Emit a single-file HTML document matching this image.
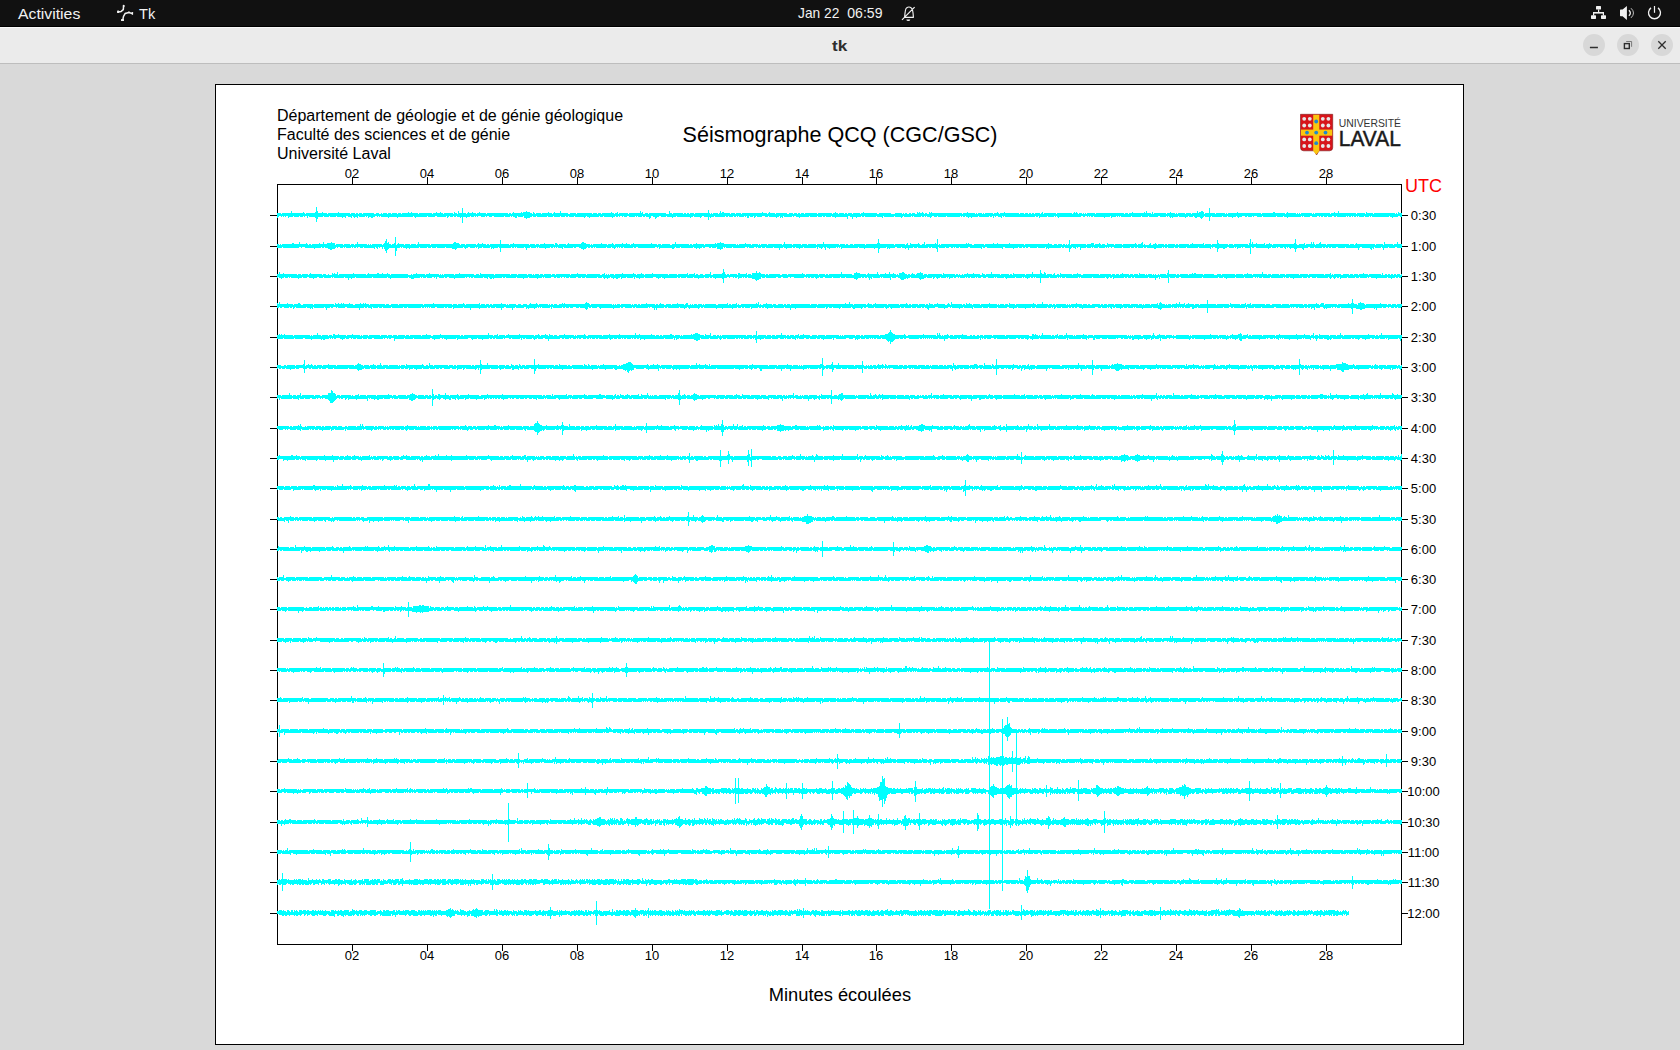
<!DOCTYPE html>
<html><head><meta charset="utf-8"><style>
html,body{margin:0;padding:0;width:1680px;height:1050px;overflow:hidden;background:#d9d9d9;font-family:"Liberation Sans",sans-serif;}
.abs{position:absolute;}
#top{left:0;top:0;width:1680px;height:27px;background:#111;border-bottom:1px solid #000;box-sizing:border-box;}
#title{left:0;top:27px;width:1680px;height:37px;background:#ebebeb;border-top:1px solid #fafafa;border-bottom:1px solid #bdbdbd;box-sizing:border-box;}
#canvas{left:215px;top:84px;width:1249px;height:961px;background:#fff;border:1px solid #000;box-sizing:border-box;}
svg text{font-family:"Liberation Sans",sans-serif;}
.wb{position:absolute;top:34px;width:22px;height:22px;border-radius:50%;background:#d8d8d8;}
</style></head><body>
<div id="top" class="abs"></div>
<div id="title" class="abs"></div>
<div id="canvas" class="abs"></div>
<div class="wb" style="left:1583px"></div>
<div class="wb" style="left:1617px"></div>
<div class="wb" style="left:1651px"></div>
<svg class="abs" style="left:0;top:0" width="1680" height="1050" viewBox="0 0 1680 1050">
<g font-family="Liberation Sans" >
<text x="18" y="19" font-size="14.6" fill="#f2f2f2" textLength="62.3" lengthAdjust="spacingAndGlyphs">Activities</text>
<text x="139" y="19" font-size="14.6" fill="#f2f2f2">Tk</text>
<text x="798" y="18" font-size="14.6" fill="#f2f2f2" textLength="41.3" lengthAdjust="spacingAndGlyphs">Jan 22</text><text x="847.3" y="18" font-size="14.6" fill="#f2f2f2" textLength="35.2" lengthAdjust="spacingAndGlyphs">06:59</text>
<text x="832" y="51" font-size="15" font-weight="bold" fill="#2e2e2e" textLength="15.3" lengthAdjust="spacingAndGlyphs">tk</text>
</g>
<g font-size="16" fill="#000">
<text x="277" y="121">Département de géologie et de génie géologique</text>
<text x="277" y="140">Faculté des sciences et de génie</text>
<text x="277" y="159">Université Laval</text>
</g>
<text x="682.6" y="141.7" font-size="21.55" fill="#000">Séismographe QCQ (CGC/GSC)</text>
<text x="1405" y="192" font-size="18" fill="#ff0000">UTC</text>
<text x="768.8" y="1001" font-size="18.3" fill="#000">Minutes écoulées</text>
<path d="M277.5 184V944M1401.5 184V944M277 184.5H1402M277 944.5H1402M270 215.5H277M1402 215.5H1408M270 246.5H277M1402 246.5H1408M270 276.5H277M1402 276.5H1408M270 306.5H277M1402 306.5H1408M270 337.5H277M1402 337.5H1408M270 367.5H277M1402 367.5H1408M270 397.5H277M1402 397.5H1408M270 428.5H277M1402 428.5H1408M270 458.5H277M1402 458.5H1408M270 488.5H277M1402 488.5H1408M270 519.5H277M1402 519.5H1408M270 549.5H277M1402 549.5H1408M270 579.5H277M1402 579.5H1408M270 609.5H277M1402 609.5H1408M270 640.5H277M1402 640.5H1408M270 670.5H277M1402 670.5H1408M270 700.5H277M1402 700.5H1408M270 731.5H277M1402 731.5H1408M270 761.5H277M1402 761.5H1408M270 791.5H277M1402 791.5H1408M270 822.5H277M1402 822.5H1408M270 852.5H277M1402 852.5H1408M270 882.5H277M1402 882.5H1408M270 913.5H277M1402 913.5H1408M352.5 177V184M352.5 945V951M427.5 177V184M427.5 945V951M502.5 177V184M502.5 945V951M577.5 177V184M577.5 945V951M652.5 177V184M652.5 945V951M727.5 177V184M727.5 945V951M802.5 177V184M802.5 945V951M876.5 177V184M876.5 945V951M951.5 177V184M951.5 945V951M1026.5 177V184M1026.5 945V951M1101.5 177V184M1101.5 945V951M1176.5 177V184M1176.5 945V951M1251.5 177V184M1251.5 945V951M1326.5 177V184M1326.5 945V951" stroke="#000" stroke-width="1" fill="none"/><path d="M277 213h4v1h1v-1h9v-2h1v2h11v-1h1v1h1v1h1v-1h9v-1h1v-5h1v4h1v2h4v-1h1v1h4v1h1v-1h10v-1h1v1h11v1h1v-1h4v1h1v-1h2v1h1v-1h3v1h1v-1h11v1h2v-1h3v1h2v-1h1v1h1v-1h4v1h1v-1h3v1h1v-1h5v1h1v-1h3v1h1v-1h6v-1h1v1h2v-1h1v1h6v1h1v-1h13v1h1v-1h3v-1h1v1h3v-1h1v1h2v1h1v-1h9v1h1v-2h1v1h2v1h1v-3h1v2h3v-5h1v5h3v1h1v-1h1v-1h1v1h3v-1h1v1h3v1h1v-1h2v-1h1v1h6v1h1v-1h21v1h1v-1h2v1h1v-1h1v-1h1v1h7v-1h1v1h1v-1h3v-1h1v1h3v1h2v1h1v-2h1v1h1v1h1v-1h5v1h1v-1h6v-1h1v1h3v1h1v-1h1v-1h1v1h5v-2h1v2h7v1h2v-1h6v1h1v-1h15v1h1v-1h4v1h1v-1h3v1h1v-1h9v-1h1v1h2v1h1v-1h2v-1h1v2h1v-1h9v1h1v-1h11v-2h1v2h1v-1h1v2h2v-1h3v1h1v-1h17v1h3v-3h1v2h2v1h1v-1h10v1h1v-1h2v1h1v-1h2v1h1v-1h4v1h1v-1h13v-3h1v3h1v1h1v-1h1v1h1v-1h5v1h1v-1h1v-2h1v2h1v-1h2v1h6v1h1v-1h4v1h1v-1h5v1h1v-1h20v-1h1v1h4v1h1v-1h1v-1h1v1h5v1h1v-1h11v1h2v-1h4v1h1v-1h3v1h1v-1h2v1h1v-1h3v1h1v-1h12v1h1v-1h14v1h1v-1h2v-1h1v1h2v1h1v-1h5v1h1v-1h2v1h1v-1h4v1h1v-1h7v1h1v-1h2v-1h1v1h13v1h2v-1h12v1h4v-1h7v1h1v-1h1v1h1v-1h2v1h2v-1h2v1h1v-1h3v1h2v-2h1v1h1v-1h1v1h2v-1h1v1h1v1h1v-1h2v1h2v-2h1v1h1v-1h1v1h30v1h1v-1h4v-1h1v1h7v1h1v-1h1v1h1v-1h4v1h1v-1h1v1h1v-1h8v1h1v-1h3v-1h1v1h1v1h1v-1h4v-1h1v1h14v1h1v-1h4v1h1v-1h3v1h1v-1h2v1h1v-1h2v1h1v-1h5v1h1v-1h1v-1h1v2h1v-1h12v1h1v-1h15v1h1v-1h1v-1h1v1h1v-1h1v1h1v1h1v-1h3v1h1v-1h1v1h1v-1h1v1h1v-1h8v1h1v-1h28v1h1v-1h3v1h1v-1h3v-1h1v1h11v-1h1v1h1v-2h1v2h4v1h1v-2h1v2h1v-1h12v1h1v-1h3v-1h1v1h4v1h1v-1h1v1h1v-1h7v1h1v-1h5v1h1v-1h5v-2h1v2h1v-1h2v-1h2v1h1v2h1v-1h4v-5h1v5h5v1h1v-1h9v1h1v-1h1v1h1v-1h9v-1h1v1h23v1h1v-1h11v-1h2v1h10v1h1v-1h1v-1h1v1h8v1h1v-1h1v1h1v-1h1v1h1v-1h11v1h1v-1h1v1h1v-1h15v1h1v-1h3v-1h1v1h3v-2h1v2h17v1h1v-1h8v1h1v-2h1v1h6v1h1v-1h21v1h1v-1h1v1h1v-2h1v1h3V217h-2v-1h-2v1h-5v1h-1v-1h-2v-1h-1v1h-17v-1h-1v1h-1v-1h-1v1h-4v-1h-1v1h-5v-1h-1v1h-1v-1h-1v1h-2v-1h-1v1h-1v-1h-1v1h-2v-1h-1v1h-1v-1h-1v1h-9v-1h-1v1h-2v-1h-2v1h-4v-1h-1v1h-3v-1h-1v1h-2v-1h-1v1h-1v-1h-2v1h-5v-1h-2v1h-6v-1h-1v1h-1v-1h-1v1h-13v1h-1v-1h-3v-1h-1v1h-6v-1h-1v1h-13v-1h-1v1h-5v-1h-3v1h-1v-1h-1v1h-4v-1h-1v1h-2v-1h-3v1h-3v1h-1v-1h-1v-1h-1v1h-3v1h-1v-1h-4v-1h-1v1h-4v-1h-1v1h-10v-1h-1v1h-1v4h-1v-4h-4v-1h-1v1h-1v1h-1v1h-1v-1h-1v-1h-3v1h-2v-1h-1v-1h-1v1h-4v-1h-1v1h-2v1h-1v-1h-6v-1h-1v1h-5v1h-1v-1h-1v1h-1v-1h-1v-1h-1v1h-1v-1h-1v1h-6v-1h-2v1h-9v-1h-1v1h-6v-1h-1v1h-9v-1h-1v1h-10v-1h-1v1h-1v-1h-1v1h-1v-1h-1v1h-4v1h-1v-2h-1v1h-5v1h-1v-1h-10v-1h-1v1h-2v-1h-1v1h-1v-1h-1v1h-1v-1h-2v1h-2v-1h-2v1h-22v1h-1v-1h-1v-1h-1v1h-1v-1h-1v1h-6v-1h-1v1h-7v1h-1v-2h-1v1h-2v-1h-1v1h-30v-1h-1v1h-1v-1h-1v2h-1v-1h-3v-1h-2v1h-1v-1h-1v2h-1v-2h-1v1h-2v-1h-1v1h-10v-1h-1v1h-6v1h-1v-1h-2v1h-1v-1h-2v-1h-1v1h-2v-1h-1v1h-1v-1h-1v1h-13v-1h-1v1h-8v-1h-1v1h-3v-1h-2v1h-1v1h-1v-1h-3v-1h-1v1h-1v-1h-1v1h-2v-1h-1v1h-7v-1h-1v1h-1v-1h-1v1h-7v-1h-1v1h-1v1h-1v-1h-6v-1h-1v1h-10v-1h-1v2h-1v-1h-5v-1h-1v1h-11v-1h-1v1h-2v-1h-1v1h-4v1h-1v-1h-3v2h-1v-2h-2v-1h-2v3h-1v-2h-11v1h-1v-1h-3v-1h-1v1h-5v-1h-1v1h-2v-1h-1v1h-4v-1h-1v1h-7v-1h-1v1h-9v1h-1v-1h-3v-1h-2v1h-1v-1h-1v1h-8v-1h-1v2h-1v-1h-1v1h-1v-2h-1v1h-2v1h-1v-1h-7v-1h-1v1h-3v-1h-3v1h-5v-1h-1v1h-1v1h-1v-2h-1v1h-3v-1h-1v2h-2v-2h-1v1h-1v-1h-1v1h-5v-1h-1v1h-1v-1h-1v1h-2v-1h-1v1h-4v-1h-1v1h-2v-1h-1v1h-10v-1h-1v1h-3v1h-1v-1h-1v3h-1v-3h-4v-1h-2v1h-1v1h-1v-1h-6v-1h-1v1h-2v1h-1v-1h-13v-1h-1v1h-3v1h-1v-1h-5v-1h-1v1h-5v-1h-2v1h-2v1h-1v1h-1v-2h-2v-1h-2v2h-1v1h-1v-2h-3v-1h-1v1h-2v-1h-1v1h-4v-1h-1v1h-1v-1h-1v1h-6v-1h-2v1h-3v-1h-1v1h-1v-1h-2v1h-1v-1h-1v1h-2v-1h-1v1h-2v1h-1v-1h-8v-1h-1v1h-3v-1h-1v1h-9v1h-1v-1h-2v-1h-1v1h-1v1h-1v-1h-9v-1h-1v1h-5v-1h-1v1h-2v-1h-1v1h-4v-1h-1v1h-6v-1h-1v1h-5v-1h-1v1h-10v-1h-1v1h-3v-1h-1v1h-2v1h-3v1h-1v-1h-2v-2h-1v1h-5v-1h-1v2h-2v-1h-2v-1h-1v1h-1v-1h-1v1h-5v-1h-1v1h-10v-1h-2v1h-3v-1h-2v1h-1v-1h-1v1h-4v-1h-3v1h-1v-1h-1v1h-1v-1h-1v1h-3v-1h-1v1h-3v1h-1v-1h-3v6h-1v-6h-1v1h-1v-1h-3v-1h-1v1h-2v-1h-1v1h-3v-1h-1v1h-1v1h-1v-2h-1v1h-9v-1h-2v1h-7v-1h-1v1h-11v1h-1v-1h-1v-1h-1v1h-15v1h-1v-1h-8v1h-1v-1h-7v-1h-1v1h-1v-1h-1v1h-1v-1h-2v1h-2v1h-2v-1h-2v1h-1v-2h-1v1h-1v-1h-1v1h-6v-1h-1v2h-1v-1h-2v1h-1v-1h-1v-1h-1v2h-1v-1h-3v-1h-2v2h-1v-1h-2v1h-1v-1h-5v-1h-1v1h-6v-1h-1v1h-5v-1h-1v1h-5v2h-1v3h-1v-4h-1v-1h-6v-1h-1v2h-1v-2h-2v1h-1v-1h-1v1h-3v-1h-1v1h-5v-1h-1v1h-4v1h-1v-2h-2v1h-1v-1h-1v1h-1v-1h-1v1h-1v-1h-2v1h-1v1h-1ZM277 244h2v1h1v-1h1v1h1v-1h10v-1h2v1h5v-2h1v2h6v-1h1v1h1v1h1v-1h2v1h1v-1h7v-1h1v1h3v-2h1v2h3v-1h4v-1h1v1h3v2h1v-1h7v1h1v-1h6v1h1v-1h3v1h1v-1h2v-2h1v2h9v1h1v-1h1v1h1v-1h1v1h1v-1h10v1h1v-1h1v-1h1v-2h1v-2h1v4h1v-1h1v2h2v1h1v-1h2v-1h1v-6h1v8h1v-1h1v-1h1v1h5v1h1v-1h5v1h1v-1h5v1h1v-1h1v-2h1v2h11v1h1v-1h22v-1h1v-1h2v1h3v1h1v1h1v-1h4v1h1v-1h10v1h1v-1h1v-1h1v1h3v-1h1v1h3v1h1v-1h2v1h1v-1h10v-4h1v4h8v1h1v-1h3v-1h1v1h15v1h1v-1h5v1h1v-1h3v1h1v-1h4v-1h1v1h9v1h1v-2h2v1h1v1h1v-1h7v1h1v-1h1v-1h1v1h12v-1h1v-1h2v1h2v1h4v1h1v-1h1v1h1v-1h8v-1h1v1h5v1h1v-1h4v-1h1v1h1v1h1v-1h7v-1h1v1h3v-1h1v1h3v1h1v-1h2v-1h1v1h17v-1h1v1h5v1h1v-1h3v1h1v-1h8v1h2v-1h3v-2h1v2h13v1h1v-1h2v1h1v-1h3v-1h1v1h7v1h1v-1h10v-1h1v1h1v-1h3v-1h1v1h3v1h12v1h1v-1h1v1h1v-1h6v-1h1v1h5v1h1v-1h6v1h1v-1h1v1h1v-1h6v1h1v-1h14v1h1v-1h1v-2h1v2h7v1h1v-1h8v1h1v-1h5v1h1v-1h8v1h1v-1h6v-2h1v2h15v1h1v-1h5v1h1v-1h2v1h2v-1h3v1h1v-1h11v1h1v-1h11v-1h1v-4h1v4h1v1h14v1h1v-1h10v1h1v-1h1v-1h1v2h2v-2h1v1h7v-1h1v1h1v1h2v-1h2v-2h1v3h1v-1h9v-1h1v1h1v-5h1v6h1v-1h1v1h1v-1h25v-1h1v1h1v-1h1v1h3v1h2v-1h10v1h1v-1h8v-1h1v1h3v-1h1v1h11v-1h1v1h14v1h1v-1h23v-1h1v1h3v1h2v-1h3v1h1v-1h4v1h1v-1h2v1h1v-1h1v1h1v-1h1v-4h1v5h1v-1h15v1h1v-1h4v-1h3v2h1v-1h4v-1h1v1h1v1h1v-1h3v1h2v-2h1v1h6v1h1v-1h7v1h1v-1h12v-1h1v1h1v1h1v-1h3v-1h1v-1h1v3h1v-1h1v1h4v-1h1v-1h1v2h2v-1h2v-1h1v1h1v1h1v-1h6v1h1v-1h2v1h1v-1h7v1h1v-1h2v1h1v-1h10v1h1v-1h2v-1h1v1h10v-1h1v2h1v-1h6v1h1v-1h5v-4h1v3h1v1h9v1h1v-1h4v1h1v-1h14v1h1v-2h1v-4h1v5h1v-2h1v2h3v-1h1v1h7v-1h1v2h1v-1h3v-1h1v1h2v1h1v-1h21v-1h1v-4h1v5h1v1h2v-1h5v-1h1v2h1v-1h5v-2h1v2h1v-2h1v2h1v1h1v-1h3v-1h1v-1h1v2h5v1h1v-1h22v1h1v-1h4v1h1v-1h1v-1h1v1h18v1h1v-1h7v1h1v-3h1v2h8v1h1v-1h3v-2h1v2h4V248h-5v-1h-2v1h-6v-1h-1v1h-4v2h-1v-2h-1v-1h-1v1h-6v-1h-1v2h-1v-1h-1v2h-1v-1h-1v-1h-8v-1h-2v1h-1v2h-1v-2h-12v-1h-1v1h-7v-1h-2v1h-4v-1h-1v1h-2v-1h-1v1h-2v-1h-1v1h-2v-1h-1v1h-7v-1h-1v1h-4v-1h-2v1h-4v2h-1v-1h-1v-1h-5v1h-1v3h-1v-3h-1v-1h-3v1h-1v-1h-1v-1h-1v1h-1v-1h-1v2h-1v-1h-1v-1h-1v1h-3v-1h-2v1h-1v-1h-1v1h-4v-1h-1v1h-2v1h-1v-1h-12v-1h-2v1h-2v-1h-1v7h-1v-6h-5v-1h-2v1h-1v-1h-1v1h-3v1h-1v-2h-1v1h-1v-1h-1v1h-5v-1h-2v1h-2v1h-2v-1h-4v1h-1v3h-1v-4h-2v-1h-2v1h-1v-1h-1v2h-1v-1h-11v-1h-1v1h-11v-1h-1v1h-7v-1h-1v1h-3v-1h-1v1h-6v-1h-1v1h-2v-1h-1v1h-1v-1h-1v1h-6v1h-2v-1h-7v-1h-1v1h-2v-1h-1v1h-5v-1h-1v1h-2v-1h-1v1h-3v-1h-1v1h-7v-1h-1v1h-8v-1h-2v1h-1v-1h-2v1h-1v-1h-1v1h-1v-1h-1v1h-6v-1h-1v1h-4v-1h-1v1h-1v-1h-1v1h-4v-1h-1v1h-5v2h-1v-3h-2v1h-1v-1h-1v2h-1v-1h-2v-1h-1v1h-1v1h-1v3h-1v-4h-4v-1h-1v1h-2v-1h-1v1h-12v1h-1v-1h-1v1h-1v-2h-1v1h-7v-1h-1v1h-7v-1h-2v1h-2v-1h-1v1h-2v-1h-1v1h-3v-1h-1v1h-4v1h-1v-1h-8v-1h-2v2h-1v-1h-15v-1h-2v1h-2v-1h-1v2h-1v-1h-11v-1h-2v1h-8v-1h-1v1h-3v-1h-1v1h-1v-1h-1v1h-2v-1h-2v1h-3v-1h-1v1h-6v-1h-1v5h-1v-3h-1v-1h-4v-1h-1v1h-2v-1h-1v1h-10v-1h-1v1h-3v-1h-1v1h-4v2h-1v-2h-2v1h-1v-1h-3v-1h-1v1h-4v-1h-2v1h-5v1h-1v-1h-1v1h-1v-2h-1v1h-6v1h-1v4h-1v-5h-3v1h-1v-1h-9v1h-1v-1h-5v-1h-1v1h-16v1h-1v-2h-1v1h-1v-1h-1v1h-1v-1h-1v1h-6v1h-1v-1h-2v-1h-1v3h-1v-2h-1v-1h-1v1h-1v1h-1v-1h-2v-1h-1v2h-1v-2h-1v1h-12v-1h-1v1h-3v1h-1v-1h-3v-1h-1v1h-2v-1h-1v1h-5v1h-1v-1h-2v-1h-1v1h-3v2h-1v-2h-5v-1h-1v1h-7v-1h-1v1h-3v-1h-1v1h-3v-1h-1v1h-1v-1h-2v1h-5v-1h-1v1h-1v-1h-2v1h-12v-1h-1v1h-6v-1h-1v1h-1v-1h-1v2h-2v1h-1v-1h-3v-2h-1v1h-4v-1h-1v1h-2v-1h-4v1h-2v-1h-1v1h-2v1h-1v-1h-2v1h-1v-1h-2v-1h-1v1h-12v-1h-1v1h-4v-1h-1v1h-1v1h-2v-1h-12v1h-1v-2h-1v1h-1v-1h-2v1h-17v-1h-2v1h-2v-1h-1v1h-9v-1h-1v1h-2v-1h-1v1h-1v-1h-1v1h-1v-1h-1v1h-1v1h-1v-1h-2v-1h-1v1h-4v-1h-1v1h-10v-1h-1v1h-1v-1h-1v1h-2v-1h-1v1h-2v-1h-1v1h-1v1h-2v1h-1v-1h-2v-1h-2v-1h-3v1h-2v-1h-1v1h-9v-1h-1v2h-1v-1h-4v-1h-1v1h-1v-1h-1v1h-1v-1h-1v1h-2v-1h-1v1h-4v1h-1v-1h-6v-1h-1v1h-1v-1h-1v1h-5v-1h-1v1h-3v2h-1v-2h-1v-1h-1v1h-7v-1h-1v1h-1v-1h-1v1h-2v-1h-1v1h-10v4h-1v-4h-1v-1h-1v1h-4v1h-1v-1h-1v1h-1v-2h-1v1h-7v-1h-1v1h-3v1h-1v-2h-1v1h-1v-1h-1v1h-5v-1h-2v1h-2v1h-1v-1h-1v-1h-1v1h-6v1h-1v1h-1v-1h-3v-1h-6v-1h-1v1h-8v-1h-1v1h-4v-1h-1v1h-3v-1h-1v1h-7v-1h-1v1h-9v1h-1v-1h-2v1h-1v-1h-3v-1h-1v1h-1v-1h-1v1h-3v3h-1v5h-1v-8h-6v1h-1v1h-1v3h-1v-2h-1v-2h-1v-2h-1v2h-1v-2h-2v1h-1v-1h-1v2h-1v-1h-1v-1h-1v2h-1v-1h-10v-1h-1v1h-3v-1h-2v1h-1v-1h-1v1h-2v-1h-1v1h-1v-1h-1v1h-5v-1h-1v1h-1v-1h-1v1h-3v-1h-2v1h-1v-1h-1v1h-1v1h-3v1h-2v-1h-2v-1h-3v-1h-1v1h-2v-1h-1v1h-6v1h-1v-1h-9v-1h-3v1h-1v-1h-2v1h-16v-1h-1v1h-5ZM277 274h2v-2h1v2h3v-1h1v1h13v1h1v-1h3v1h1v-1h6v1h1v-1h1v-1h1v1h11v1h1v-1h3v1h2v-1h1v1h3v-2h1v1h1v-1h1v1h2v-2h1v3h1v-1h14v-1h1v1h12v1h1v-1h1v-1h1v1h8v-1h2v1h3v-1h1v1h4v-1h1v1h2v1h1v-1h17v1h3v-1h1v1h1v-1h3v-1h1v1h8v1h1v-1h3v-1h1v1h9v1h1v-1h1v1h1v-1h1v1h1v-1h10v1h1v-1h4v-1h1v1h14v1h2v-1h3v1h1v-2h1v1h13v1h1v-1h15v1h1v-1h6v1h1v-1h9v1h1v-1h4v1h1v-1h1v1h1v-1h4v1h1v-1h3v1h1v-1h7v1h1v-1h3v1h1v-1h14v1h1v-1h6v-1h1v1h8v1h1v-1h13v1h2v-1h2v-1h1v2h1v-1h1v1h1v-1h1v1h1v-1h4v1h1v-1h7v-1h1v1h10v-1h1v1h2v1h1v-1h4v-1h1v1h2v1h1v-1h7v-1h1v1h15v1h1v-1h8v1h1v-1h9v-1h1v2h1v-1h5v-1h1v2h1v-1h2v1h2v-1h3v1h2v-1h5v-2h1v3h2v-1h9v-1h1v-4h1v3h1v2h1v1h1v-1h2v1h1v-1h7v1h1v-2h2v1h6v-1h1v2h1v-1h3v1h1v-2h4v-2h1v2h2v-1h1v1h1v1h4v1h1v-1h2v1h1v-1h11v1h2v-1h5v1h1v-1h14v-1h1v1h2v1h1v-1h12v1h1v-1h6v1h1v-1h2v1h1v-1h12v-2h1v2h10v1h2v-2h2v-1h1v1h3v1h6v1h1v-1h1v-1h1v1h8v-2h1v2h1v1h1v-1h5v-1h1v1h3v-2h1v2h3v-1h1v1h2v1h1v-1h1v1h1v-2h3v-1h2v1h1v1h2v1h1v-1h2v1h1v-1h1v-1h1v1h2v1h1v-1h1v-1h3v-1h1v1h2v2h1v-1h3v1h1v-1h14v1h1v-2h1v1h11v1h1v-1h2v1h1v-1h1v1h2v-1h1v1h1v-1h3v-1h1v1h5v-1h1v1h6v1h2v-2h1v1h2v1h1v-1h5v-2h1v2h8v1h1v-1h8v1h1v-1h2v1h1v-2h1v1h11v1h1v-1h6v-2h1v2h7v-4h1v3h1v1h2v-2h1v1h1v2h1v-1h5v1h1v-1h1v-1h1v2h2v-1h2v1h1v-2h1v1h11v1h1v-1h4v-1h1v1h3v1h2v-1h16v1h1v-1h11v1h1v-1h3v1h1v-1h3v1h1v-1h2v-1h1v1h6v1h1v-1h3v1h1v-1h4v1h1v-2h1v1h5v1h1v-1h1v1h1v-1h4v1h1v-1h1v1h1v-1h1v1h2v-1h1v1h1v-1h6v1h1v-2h1v-3h1v4h7v1h1v-1h2v1h1v-1h8v1h1v-1h3v-1h1v1h1v-1h2v1h7v1h1v-1h10v1h3v-1h4v1h1v-1h13v1h1v-1h7v1h1v-1h3v-1h1v1h4v1h1v-1h9v-2h1v2h4v1h1v-1h3v1h1v-1h7v1h1v-1h5v1h1v-1h13v1h1v-1h8v1h1v-1h15v1h1v-1h5v-1h1v2h1v-1h1v1h1v-1h7v1h2v-1h6v1h1v-1h3v1h1v-1h4v1h1v-1h4v-1h1v1h4v1h1v-1h12v1h1v-2h1v2h2v-1h2v1h1v-1h2v1h1v-1h2v1h1v-1h2v1h1v-1h3v1h1v-1h1V277h-1v1h-2v-1h-1v1h-2v-1h-1v1h-3v1h-1v-1h-3v-1h-1v1h-10v1h-1v-1h-5v-1h-2v1h-1v-1h-1v1h-7v-1h-1v1h-3v-1h-1v1h-7v-1h-1v1h-6v1h-1v-2h-1v1h-2v-1h-1v1h-1v1h-1v-1h-1v-1h-1v1h-1v1h-1v-1h-1v-1h-1v1h-11v-1h-1v1h-4v-1h-2v1h-2v-1h-1v1h-4v-1h-1v1h-8v1h-1v-1h-3v-1h-1v1h-3v-1h-1v1h-1v-1h-1v1h-12v-1h-1v1h-7v-1h-1v1h-3v-1h-1v1h-1v-1h-1v1h-1v-1h-2v1h-8v-1h-1v1h-8v-1h-1v1h-8v1h-1v-1h-2v-1h-1v1h-4v-1h-1v1h-15v-1h-1v1h-21v-1h-2v1h-3v-1h-1v1h-5v-1h-1v6h-1v-5h-7v-1h-1v2h-1v-2h-1v1h-2v2h-1v-2h-6v-1h-1v1h-13v-1h-1v1h-2v-1h-1v1h-3v-1h-1v1h-2v-1h-1v1h-10v1h-1v-2h-1v1h-2v-1h-1v1h-1v1h-1v-1h-1v-1h-1v1h-12v-1h-1v1h-11v-1h-1v1h-1v-1h-1v1h-12v-1h-1v1h-3v-1h-1v1h-1v-1h-1v1h-1v-1h-1v1h-7v-1h-1v1h-8v5h-1v-5h-4v-1h-1v1h-1v-1h-1v1h-2v-1h-1v1h-2v1h-1v-1h-2v-1h-1v1h-1v-1h-1v1h-6v-1h-1v1h-8v1h-1v-1h-1v-1h-1v1h-7v-1h-1v1h-1v-1h-1v1h-6v-1h-2v1h-3v-1h-2v1h-3v-1h-1v1h-1v-1h-1v1h-4v-1h-1v1h-2v-1h-1v1h-1v-1h-1v1h-5v-1h-1v1h-1v-1h-2v1h-2v-1h-1v1h-3v1h-1v-2h-1v1h-1v-1h-1v1h-5v-1h-1v1h-2v1h-1v-1h-1v-1h-1v1h-1v1h-1v-2h-1v1h-5v-1h-1v1h-2v1h-3v1h-1v-1h-1v-1h-8v-1h-1v1h-2v1h-1v-1h-1v1h-2v1h-3v-1h-1v-1h-2v-1h-2v1h-4v-1h-1v3h-1v-2h-7v-1h-1v1h-1v-1h-1v1h-7v-1h-1v2h-1v-1h-1v2h-1v-2h-1v-1h-1v1h-2v-1h-1v1h-2v-1h-1v1h-3v1h-1v1h-1v-1h-2v-1h-8v-1h-1v1h-4v-1h-1v1h-7v-1h-1v1h-7v-1h-2v1h-3v-1h-1v1h-2v1h-1v-1h-1v-1h-1v1h-3v-1h-1v1h-2v-1h-1v1h-1v-1h-2v1h-10v-1h-3v1h-1v-1h-2v1h-5v-1h-2v1h-3v-1h-2v1h-10v-1h-1v1h-3v-1h-1v2h-2v1h-2v1h-1v-1h-1v-1h-3v-1h-4v-1h-1v1h-2v-1h-1v1h-1v-1h-1v1h-3v1h-1v-2h-1v1h-2v-1h-1v1h-1v-1h-3v1h-1v-1h-2v1h-3v5h-1v-4h-1v-1h-6v1h-1v-1h-2v-1h-1v1h-2v-1h-1v1h-4v-1h-1v1h-5v1h-1v-1h-4v-1h-1v1h-6v-1h-1v1h-5v-1h-1v1h-2v-1h-1v1h-12v1h-1v-1h-2v-1h-1v1h-2v1h-1v-1h-2v-1h-3v1h-8v-1h-1v1h-4v1h-1v-1h-3v-1h-1v2h-1v-2h-1v1h-6v-1h-1v1h-4v1h-1v-2h-1v1h-2v1h-2v-1h-2v1h-1v-1h-2v-1h-1v1h-2v1h-1v-1h-2v1h-1v-1h-1v-1h-1v1h-4v-1h-1v1h-11v-1h-1v1h-3v-1h-1v1h-3v-1h-2v1h-6v-1h-1v1h-3v-1h-1v1h-1v-1h-2v1h-1v-1h-1v1h-3v-1h-1v1h-2v-1h-3v1h-6v-1h-1v1h-1v-1h-1v1h-4v1h-1v-1h-8v-1h-1v1h-4v1h-1v-1h-6v-1h-1v1h-10v-1h-1v1h-2v-1h-1v1h-8v1h-1v-1h-1v1h-2v-1h-1v-1h-1v2h-1v-1h-3v-1h-1v1h-9v-1h-1v1h-2v-1h-1v1h-1v-1h-2v1h-1v-1h-1v1h-10v1h-1v-1h-5v-1h-2v1h-2v-1h-1v1h-5v-1h-2v2h-1v-2h-1v1h-1v-1h-2v1h-5v-1h-1v1h-3v-1h-1v1h-1v-1h-1v1h-6v1h-3v-1h-2v-1h-1v1h-17v1h-1v-1h-2v-1h-1v1h-14v-1h-1v1h-16v-1h-1v1h-3v1h-1v-1h-2v2h-1v-2h-3v-1h-1v1h-10v-1h-1v1h-1v-1h-1v1h-7v-1h-1v1h-4v-1h-2v1h-3v1h-1v-1h-4v-1h-2v1h-4v-1h-1v1h-3v1h-1v-1h-7v-1h-1v1h-1v-1h-1v1h-3v-1h-1v1h-2v1h-1v-1h-2v-1h-1v1h-1ZM277 303h1v1h1v-2h1v2h7v-1h1v1h5v1h1v-1h4v-1h2v1h1v1h2v-1h10v1h1v-1h20v1h1v-2h1v1h2v-1h1v1h2v-1h1v1h1v-1h1v1h5v-1h1v1h3v1h2v-1h5v-1h1v1h2v-1h1v1h1v-1h1v1h3v1h1v-1h15v1h1v-1h3v1h2v-1h7v1h1v-1h24v1h1v-1h9v-1h1v1h18v1h1v-1h4v1h1v-1h5v-1h1v1h1v1h1v-1h13v-1h1v2h1v-1h4v1h1v-1h3v1h1v-1h2v1h1v-1h8v-1h1v1h4v1h1v-1h1v1h1v-1h7v1h2v-1h3v1h2v-1h4v1h2v-1h1v-1h1v1h5v-1h1v1h1v1h1v-1h9v1h1v-1h1v1h1v-1h2v1h1v-1h3v1h2v-1h3v-1h1v1h1v-1h1v1h20v-1h1v-1h1v1h2v1h1v1h1v-1h21v1h1v-1h1v1h1v-1h1v1h1v-1h3v1h1v-1h10v1h1v-1h1v1h1v-1h3v1h1v-1h2v1h1v-1h5v-1h1v1h8v1h1v-1h2v1h1v-1h1v-1h1v1h3v1h2v-1h5v1h1v-1h5v-1h1v1h6v1h1v-1h1v-1h2v2h2v-1h1v1h1v-1h1v1h1v-1h3v1h1v-1h4v1h1v-1h1v1h1v-1h11v1h2v-1h9v-1h1v2h1v-1h2v1h1v-1h4v-1h1v2h1v-1h1v1h2v-1h15v-1h1v1h1v-2h1v3h1v-1h1v1h2v-1h3v-1h1v1h5v1h1v-1h3v1h2v-1h5v1h1v-1h2v1h1v-1h3v1h1v-1h19v1h1v-1h6v1h1v-1h27v-1h1v1h3v-2h1v2h3v1h1v-1h12v1h1v-1h1v-1h1v1h3v1h1v-1h2v-1h1v1h11v1h1v-1h11v1h1v-1h6v-1h1v1h1v1h1v-1h2v1h1v-1h6v1h1v-1h6v1h1v-1h2v1h1v-2h1v1h3v1h1v-1h3v-1h1v1h7v1h2v-1h1v-1h1v1h1v1h1v-3h1v2h10v1h1v-1h2v1h1v-2h1v1h2v-1h1v1h2v1h1v-1h7v1h1v-1h8v-1h1v1h7v1h1v-1h1v1h1v-1h4v1h1v-1h3v1h1v-2h1v1h5v1h1v-1h17v-1h1v1h2v1h1v-1h5v-2h1v2h5v1h1v-1h3v1h1v-1h2v1h1v-1h10v1h1v-1h1v1h1v-1h1v1h1v-1h5v-1h1v1h5v1h1v-1h4v1h1v-1h2v1h2v-1h8v1h1v-1h2v1h1v-1h3v1h1v-1h6v1h1v-1h7v1h1v-1h7v1h1v-1h7v1h1v-1h3v1h1v-1h1v1h1v-1h5v1h1v-1h6v-1h1v2h1v-2h1v-1h1v1h1v1h3v1h1v-1h1v1h1v-1h3v1h1v-1h4v-1h1v1h2v-2h1v2h4v-1h1v2h1v-1h2v-1h1v1h5v1h1v-1h4v1h1v-1h7v-4h1v4h8v1h1v-1h12v1h1v-2h1v1h9v1h1v-1h4v-1h1v2h1v-1h3v-1h1v2h1v-1h13v1h1v-1h4v1h2v-1h9v1h1v-1h7v1h1v-1h13v1h1v-1h3v1h1v-1h8v-1h1v1h2v1h1v-1h1v-1h3v2h1v-1h12v1h1v-1h10v-1h1v1h2v-1h1v-4h1v4h1v1h3v1h1v-2h2v-1h1v1h3v1h1v1h1v-1h14v-1h1v1h6v1h1v-1h3v1h1v-1h4v1h1v-1h5V307h-1v1h-3v-1h-1v1h-2v-1h-1v1h-3v-1h-2v1h-1v-1h-2v1h-3v-1h-1v1h-5v2h-1v-2h-1v1h-1v-1h-9v1h-3v1h-2v-1h-4v-1h-3v6h-1v-5h-1v-1h-10v-1h-1v1h-3v-1h-1v1h-1v-1h-2v1h-1v-1h-1v1h-4v1h-1v-1h-1v1h-1v-1h-1v-1h-3v1h-4v-1h-1v3h-1v-2h-2v1h-1v-2h-1v1h-2v-1h-1v1h-2v-1h-1v1h-5v-1h-1v1h-2v-1h-2v1h-1v-1h-1v1h-1v-1h-1v1h-14v-1h-2v1h-12v-1h-1v1h-6v-1h-1v1h-6v-1h-1v2h-1v-2h-1v1h-11v-1h-1v1h-2v-1h-2v1h-5v-1h-1v1h-15v5h-1v-5h-9v-1h-1v1h-3v1h-2v-2h-2v1h-5v-1h-1v1h-2v-1h-1v1h-1v-1h-1v1h-1v-1h-1v1h-3v-1h-1v1h-1v-1h-1v1h-9v1h-1v1h-1v-1h-2v-1h-5v-1h-1v1h-9v1h-1v-1h-6v-1h-1v1h-1v-1h-1v1h-5v-1h-1v1h-3v-1h-1v1h-2v1h-1v-1h-4v-1h-1v1h-2v-1h-1v2h-1v-1h-1v-1h-1v1h-1v-1h-1v1h-5v-1h-1v1h-3v-1h-3v1h-12v1h-1v-1h-3v-1h-2v1h-2v-1h-1v1h-2v-1h-1v1h-2v-1h-1v1h-6v-1h-1v1h-4v-1h-1v1h-1v1h-1v-2h-1v1h-1v-1h-1v1h-3v-1h-1v1h-11v-1h-1v1h-3v-1h-1v1h-5v1h-1v-1h-7v-1h-1v1h-3v1h-1v-1h-4v-1h-2v1h-9v-1h-1v1h-8v-1h-1v1h-5v-1h-1v1h-8v-1h-1v2h-1v-1h-8v-1h-1v1h-3v1h-1v-1h-7v-1h-1v1h-1v-1h-2v1h-3v1h-1v-1h-6v-1h-3v1h-6v2h-1v-1h-1v-1h-2v-1h-1v1h-2v-1h-1v1h-4v-1h-1v1h-4v-1h-1v1h-6v-1h-1v1h-3v-1h-1v1h-8v1h-1v-1h-1v-1h-1v1h-2v1h-1v-1h-1v-1h-1v1h-9v-1h-1v1h-6v-1h-2v1h-2v-1h-1v1h-1v1h-1v-1h-6v1h-2v-1h-1v-1h-1v1h-9v-1h-1v1h-1v1h-1v-1h-6v-1h-1v1h-3v-1h-1v1h-1v1h-1v-2h-1v1h-8v-1h-1v1h-20v1h-1v-1h-4v2h-1v-2h-5v-1h-1v1h-10v-1h-1v1h-5v1h-1v-1h-2v-1h-1v1h-2v-1h-1v1h-2v-1h-1v1h-6v1h-1v-2h-1v1h-5v-1h-1v1h-2v-1h-1v1h-3v-1h-1v1h-4v1h-1v-1h-9v1h-1v-1h-5v1h-1v-1h-12v-1h-1v1h-2v-1h-1v1h-1v1h-1v-1h-8v1h-1v-1h-1v-1h-1v1h-2v1h-1v-1h-4v-1h-1v1h-11v-1h-1v1h-2v-1h-1v1h-7v2h-1v-2h-1v2h-1v-2h-2v-1h-2v1h-1v-1h-1v1h-12v-1h-1v1h-2v-1h-1v1h-7v-1h-2v1h-2v-1h-1v1h-6v1h-1v-1h-12v1h-1v-1h-1v-1h-2v1h-5v-1h-1v1h-2v-1h-1v2h-1v1h-1v-1h-1v-1h-5v-1h-1v1h-3v-1h-3v1h-3v-1h-1v1h-3v-1h-1v1h-2v-1h-1v1h-9v-1h-1v2h-1v-2h-1v1h-8v-1h-1v1h-1v-1h-1v1h-1v-1h-1v1h-2v1h-1v-1h-5v1h-1v-1h-1v1h-1v-2h-2v1h-8v-1h-1v1h-2v2h-1v-2h-6v-1h-2v1h-2v2h-1v-2h-5v-1h-1v1h-4v-1h-1v1h-2v-1h-1v1h-7v1h-1v-1h-8v2h-1v-2h-6v-1h-1v1h-9v1h-1v-2h-1v1h-4v-1h-1v1h-2v-1h-1v1h-7v-1h-2v1h-4v-1h-1v1h-1v-1h-1v1h-1v-1h-1v1h-1v-1h-1v1h-2v-1h-1v1h-13v-1h-1v1h-3v-1h-1v1h-11v-1h-1v1h-8v-1h-1v1h-3v-1h-1v1h-5v-1h-1v2h-1v-1h-3v-1h-1v1h-2v-1h-1v1h-4v2h-1v-2h-12v-1h-2v1h-7v-1h-1v1h-1v-1h-3v1h-2v-1h-1v1h-3v2h-1v-2h-1v-1h-1v1h-10v-1h-1v2h-1v-1h-1v1h-1v-1h-3v-1h-1v1h-10v-1h-1v1h-1v1h-1v-2h-1v1h-2v-1h-1v1h-5v-1h-2v1h-2v-1h-1v1h-2ZM277 335h2v-1h1v1h1v-1h1v1h2v-1h1v1h8v1h1v-1h16v1h1v-1h1v1h1v-1h4v-2h1v2h3v1h1v-1h6v1h1v-1h3v1h1v-2h2v1h3v-1h1v1h7v1h1v-1h5v-1h1v1h7v1h1v-1h1v1h1v-1h5v1h1v-1h11v1h1v-1h6v1h1v-1h4v1h1v-1h4v1h1v-1h7v1h1v-1h3v1h1v-1h11v1h1v-1h4v-1h1v1h4v1h2v-1h7v-1h1v1h19v1h1v-1h2v1h1v-1h24v-2h1v2h4v1h1v-1h3v-1h1v2h1v-1h6v1h1v-1h2v-1h1v1h10v-1h1v1h14v1h1v-1h3v-1h1v1h1v1h1v-1h4v-1h1v1h2v1h1v-2h1v1h3v1h1v-1h3v1h2v-1h5v-1h1v1h9v1h1v-1h1v1h1v-1h7v-1h1v1h1v1h2v-1h14v1h1v-1h6v-1h1v1h9v-1h1v1h15v-2h1v2h3v-1h1v1h11v-1h1v1h3v1h1v-1h3v1h1v-1h2v1h1v-1h7v-1h2v1h2v1h1v-1h5v1h1v-1h1v1h1v-1h8v-1h1v1h1v-1h2v-1h3v1h2v1h4v1h1v-2h1v1h4v-2h1v3h2v-1h3v1h1v-1h2v1h1v-1h1v1h1v-1h24v1h1v-1h5v1h1v-1h3v-4h1v5h1v-1h8v1h1v-1h4v1h1v-1h3v1h1v-1h5v-2h1v2h4v1h1v-1h2v1h1v-1h4v1h1v-1h3v-1h1v2h1v-1h3v-1h1v1h6v1h2v-1h5v1h1v-1h7v1h1v-1h13v1h1v-1h1v1h1v-1h1v1h1v-1h11v1h1v-1h4v1h1v-1h2v1h1v-1h15v1h1v-1h5v-1h3v-1h1v-1h1v-2h1v2h1v1h1v1h2v1h9v-1h1v1h1v1h2v-1h15v-1h1v1h12v1h1v-3h1v2h1v-2h1v2h1v1h1v-1h1v1h1v-1h3v-1h1v1h1v1h1v-1h3v1h1v-1h8v-1h1v1h4v1h3v-1h2v1h1v-1h2v1h2v-1h2v1h1v-1h3v1h1v-1h8v1h1v-1h12v1h1v-1h23v1h3v-2h2v1h1v-1h1v1h2v1h1v-1h1v1h1v-1h1v-2h1v2h8v1h1v-1h2v1h1v-1h2v-1h1v2h1v-1h4v1h1v-1h2v-2h1v2h6v1h1v-1h1v1h1v-1h7v-1h1v1h3v1h1v-1h5v1h1v-1h33v1h1v-1h1v1h1v-1h1v1h1v-1h1v1h1v-1h7v1h2v-1h8v1h1v-1h1v-2h1v2h1v1h2v-1h2v-1h1v1h5v1h1v-1h6v1h1v-1h1v1h2v-1h13v1h1v-1h1v1h1v-1h18v-1h1v1h7v1h1v-1h7v1h1v-1h1v1h2v-1h2v-1h1v1h5v-1h2v-1h1v1h1v2h1v-1h4v-1h1v2h1v-1h2v1h1v-1h10v1h1v-1h12v1h1v-1h3v-1h1v1h16v-1h1v1h7v-1h1v1h5v1h1v-1h2v-2h1v3h1v-1h3v1h1v-2h1v1h9v1h1v-1h6v1h1v-1h3v-2h1v2h2v1h1v-1h24v-1h1v1h6v1h1v-1h2v1h1v-1h2v-2h1v2h20V339h-1v2h-1v-2h-1v-1h-1v1h-9v1h-1v-2h-1v1h-1v-1h-1v1h-5v-1h-1v1h-4v-1h-1v1h-2v-1h-2v1h-4v1h-1v-1h-3v-1h-2v1h-1v1h-1v-1h-3v-1h-1v1h-2v-1h-1v1h-9v-1h-1v1h-8v-1h-1v1h-1v1h-1v-1h-1v1h-2v-1h-3v-1h-1v1h-4v-1h-1v1h-1v2h-1v-2h-1v-1h-1v1h-1v-1h-2v2h-1v-1h-5v-1h-1v1h-1v-1h-1v1h-4v1h-1v-1h-7v1h-1v-1h-5v-1h-1v1h-1v-1h-1v1h-1v-1h-1v2h-1v-1h-2v-1h-1v1h-1v-1h-1v1h-3v-1h-2v1h-1v-1h-1v1h-6v1h-1v-1h-11v-1h-2v1h-4v2h-2v-1h-1v-2h-1v1h-2v1h-1v-1h-3v-1h-1v1h-1v-1h-1v1h-2v1h-1v-1h-4v-1h-1v1h-1v-1h-1v1h-2v-1h-1v1h-3v-1h-1v1h-7v1h-1v-1h-9v-1h-1v1h-2v-1h-1v1h-1v1h-1v-1h-13v-1h-2v1h-1v-1h-3v1h-1v-1h-2v1h-5v-1h-1v3h-1v-3h-1v1h-4v-1h-1v1h-2v1h-1v-2h-1v1h-3v1h-1v-1h-2v-1h-1v1h-4v1h-1v-1h-4v1h-2v-2h-1v1h-2v-1h-1v1h-4v-1h-1v1h-2v-1h-3v1h-1v-1h-1v1h-8v-1h-1v1h-5v-1h-2v1h-4v-1h-1v2h-2v-2h-4v1h-1v-1h-1v2h-1v-1h-4v-1h-1v1h-12v-1h-1v2h-1v-2h-1v1h-8v-1h-1v1h-1v-1h-1v1h-15v-1h-1v1h-6v1h-1v-1h-2v-1h-1v1h-1v1h-1v-1h-2v-1h-1v1h-3v-1h-1v1h-2v-1h-2v1h-7v-1h-1v1h-11v-1h-1v1h-2v-1h-3v1h-4v-1h-1v1h-2v-1h-1v1h-1v-1h-1v2h-1v-2h-1v1h-18v-1h-1v1h-2v-1h-1v1h-7v-1h-2v1h-3v2h-1v-2h-5v-1h-1v1h-5v-1h-1v1h-1v-1h-1v1h-1v-1h-1v1h-1v-1h-1v1h-1v-1h-1v1h-1v-1h-1v1h-2v-1h-1v1h-10v-1h-3v1h-2v-1h-1v1h-3v-1h-1v1h-4v1h-1v1h-1v1h-2v2h-1v-3h-1v1h-1v-1h-1v-1h-1v-1h-4v-1h-1v1h-4v-1h-1v1h-2v-1h-1v1h-1v-1h-1v1h-1v-1h-1v1h-3v-1h-1v1h-4v-1h-1v1h-2v1h-1v-1h-1v1h-1v-2h-2v1h-4v-1h-3v1h-10v-1h-2v2h-1v-2h-1v1h-8v1h-1v-1h-2v-1h-1v1h-3v-1h-1v1h-6v-1h-1v1h-3v-1h-2v1h-5v-1h-1v1h-1v-1h-1v2h-1v-1h-3v-1h-1v1h-4v-1h-1v1h-1v-1h-1v1h-4v-1h-2v1h-6v-1h-1v1h-6v-1h-1v1h-3v1h-1v-1h-3v4h-1v-3h-1v-2h-1v1h-1v-1h-1v1h-2v-1h-1v1h-5v-1h-1v1h-2v-1h-1v1h-1v-1h-1v1h-2v-1h-1v1h-8v-1h-1v1h-3v-1h-1v1h-1v1h-1v-1h-1v-1h-1v1h-8v-1h-1v1h-8v-1h-1v2h-2v1h-2v-1h-2v-1h-14v-1h-1v1h-2v1h-1v-2h-1v2h-1v-2h-1v1h-8v-1h-1v1h-19v1h-1v-1h-3v1h-1v-2h-1v1h-2v-1h-1v1h-2v-1h-1v1h-1v-1h-1v1h-4v-1h-1v1h-2v-1h-1v1h-1v-1h-1v1h-3v-1h-1v1h-3v-1h-1v1h-2v1h-1v-1h-1v-1h-1v1h-9v-1h-1v1h-2v-1h-1v1h-3v-1h-1v1h-1v-1h-1v1h-2v-1h-1v1h-3v-1h-2v1h-2v-1h-1v1h-1v-1h-1v1h-3v-1h-2v1h-1v-1h-1v1h-4v-1h-1v1h-2v-1h-2v1h-11v2h-1v-2h-3v-1h-2v1h-5v-1h-1v1h-2v1h-1v-1h-1v-1h-1v1h-6v-1h-1v1h-2v-1h-1v2h-1v-2h-1v1h-8v-1h-1v1h-2v-1h-4v1h-1v-1h-1v1h-7v-1h-1v1h-2v-1h-1v1h-2v-1h-1v1h-6v1h-1v-1h-4v-1h-1v1h-4v1h-1v-1h-1v-1h-3v1h-10v1h-1v-2h-1v1h-9v1h-1v-1h-2v-1h-1v1h-1v-1h-2v1h-5v1h-1v-1h-2v-1h-2v1h-16v-1h-1v1h-8v-1h-1v1h-9v2h-1v-3h-3v1h-2v-1h-1v1h-1v-1h-2v1h-1v-1h-1v1h-9v-1h-2v1h-4v-1h-1v1h-4v-1h-1v1h-5v-1h-1v1h-3v-1h-1v1h-1v-1h-2v1h-3v-1h-1v1h-2v1h-1v-1h-2v-1h-4v1h-2v-1h-1v1h-1v-1h-1v1h-1v-1h-1v1h-4v1h-2v-1h-1v1h-1v-1h-9v1h-1v-1h-6v-1h-2v1h-8v-1h-1v1h-10v-1h-1v1h-6ZM277 365h4v1h3v-1h2v1h1v-1h8v1h1v-1h7v-1h1v-4h1v6h1v-1h2v-1h1v1h2v-1h1v1h1v1h1v-1h2v1h1v-1h5v1h1v-1h5v-1h1v1h7v1h1v-1h17v1h1v-1h2v-1h1v-1h1v1h2v1h2v1h1v-1h5v1h1v-1h3v-1h1v1h2v1h1v-1h3v-2h1v2h1v1h1v-1h5v1h1v-1h9v1h1v-1h1v1h1v-1h4v1h1v-2h1v1h15v-1h1v1h1v1h2v-1h2v1h1v-3h1v2h3v1h1v-1h14v1h1v-1h4v1h1v-1h2v1h1v-1h14v1h1v-1h2v1h1v-1h5v-5h1v4h1v1h5v-2h1v2h10v1h1v-1h6v1h1v-1h3v1h2v-2h1v1h2v1h1v-1h3v1h1v-2h1v1h1v1h1v-1h3v1h1v-1h8v-6h1v6h3v-1h1v1h15v1h1v-1h3v1h1v-2h1v1h7v1h1v-1h2v1h2v-1h11v1h1v-2h1v1h2v1h1v-2h1v1h1v1h1v-1h6v1h1v-1h1v1h1v-1h3v-1h1v1h13v1h2v-1h1v1h1v-1h2v-1h3v-1h2v-1h3v1h1v1h1v1h14v-1h1v1h1v1h1v-1h3v-1h1v1h3v-1h1v1h2v1h1v-1h11v1h1v-1h17v1h1v-1h5v-2h1v2h2v-1h1v1h5v-1h1v1h2v1h1v-2h1v2h1v-1h37v1h1v-1h3v-1h1v1h15v1h1v-1h8v1h1v-1h9v-1h1v1h4v1h1v-1h5v1h1v-1h1v1h1v-1h1v1h1v-1h17v-1h2v-6h1v7h1v1h2v-1h5v-1h1v-2h1v3h5v-2h1v2h15v1h1v-1h7v-4h1v4h1v1h2v-1h1v1h1v-1h1v1h1v-1h2v1h1v-1h3v1h1v-1h1v-1h1v1h3v-1h1v1h1v1h1v-2h1v1h1v1h1v-1h10v1h1v-1h4v1h1v-1h3v1h1v-1h9v1h1v-1h7v1h1v-1h3v1h1v-1h1v1h1v-1h6v1h1v-1h4v1h1v-1h2v1h1v-1h5v1h1v-3h1v2h2v1h1v-1h12v1h1v-1h4v-1h3v1h1v1h1v-1h4v1h1v-3h1v2h6v1h1v-2h1v1h1v1h1v-1h1v-6h1v6h16v-1h1v1h4v1h1v-1h2v1h1v-1h4v1h1v-1h1v-1h1v2h1v-1h5v1h2v-1h23v1h2v-1h16v-2h1v2h6v1h1v-1h6v-5h1v5h2v1h1v-1h12v1h1v-1h1v1h1v-1h1v-1h1v1h1v-1h3v-1h1v1h4v1h2v1h1v-1h14v1h1v-1h16v-1h1v1h14v1h1v-1h13v1h1v-2h1v2h1v-1h5v-1h1v1h5v1h2v-1h1v1h1v-1h1v1h1v-1h9v-1h1v1h1v1h1v-1h1v1h2v-1h5v1h1v-1h3v-1h1v1h9v1h1v-1h7v1h1v-1h1v1h1v-1h2v1h1v-1h4v1h1v-1h16v1h2v-1h3v1h1v-1h5v1h1v-1h4v1h1v-1h8v-6h1v5h1v1h3v1h1v-1h2v1h1v-1h1v1h1v-1h9v1h1v-1h1v1h1v-1h7v1h1v-1h6v-1h6v-2h1v1h3v1h2v1h5v-1h1v1h1v1h1v-1h15v1h1v-1h1v1h1v-1h1v-1h1v1h2v1h1v-1h7v1h1v-1h10v1h1v-1h2v1h1v-1h1V369h-1v1h-1v-1h-1v-1h-1v1h-1v-1h-1v1h-3v1h-1v-2h-1v2h-1v-1h-6v-1h-1v1h-1v1h-1v-1h-2v-1h-1v1h-4v-1h-1v1h-2v-1h-2v1h-10v1h-1v-1h-4v-1h-1v1h-4v1h-5v2h-2v-1h-1v-1h-4v-2h-1v1h-5v2h-1v-2h-6v1h-1v-1h-3v-1h-1v1h-4v-1h-1v2h-1v-2h-1v1h-1v-1h-1v1h-1v-1h-1v2h-1v-1h-2v-1h-1v1h-1v1h-1v-1h-1v-1h-1v7h-1v-6h-3v1h-1v-1h-1v1h-1v-1h-2v-1h-1v1h-5v-1h-2v2h-1v-1h-1v-1h-1v1h-5v1h-1v-1h-2v-1h-1v1h-2v-1h-1v1h-5v1h-1v-1h-4v-1h-1v1h-1v-1h-1v1h-1v-1h-1v3h-1v-2h-1v-1h-1v1h-3v-1h-1v1h-7v1h-1v-1h-7v-1h-1v1h-1v-1h-1v1h-1v1h-1v-1h-3v-1h-1v1h-8v1h-1v-2h-3v1h-5v-1h-1v1h-2v-1h-1v1h-3v-1h-1v1h-1v-1h-1v1h-2v-1h-1v1h-2v-1h-1v1h-5v-1h-2v1h-1v-1h-1v1h-3v-1h-1v1h-1v-1h-2v1h-6v-1h-1v1h-4v-1h-1v1h-1v-1h-1v1h-2v-1h-1v1h-5v1h-1v-1h-3v-1h-2v1h-1v1h-1v-1h-7v-1h-1v1h-5v-1h-1v2h-1v-1h-6v1h-1v-1h-1v1h-1v1h-3v-1h-1v-1h-4v-1h-1v1h-8v2h-1v-2h-1v-1h-1v1h-4v-1h-1v2h-1v5h-1v-6h-4v-1h-1v1h-5v2h-1v-2h-1v-1h-1v1h-4v-1h-1v1h-4v-1h-1v2h-1v-2h-1v1h-2v-1h-1v1h-12v-1h-2v1h-1v-1h-1v1h-1v2h-1v-2h-10v-1h-1v1h-3v1h-1v-1h-1v1h-1v-1h-4v1h-1v-2h-1v1h-1v2h-1v-3h-1v1h-3v-1h-3v1h-1v1h-1v-2h-1v1h-3v-1h-1v1h-1v-1h-2v1h-3v-1h-2v1h-2v6h-1v-6h-3v-1h-1v1h-9v-1h-1v1h-2v-1h-2v1h-2v-1h-1v1h-3v-1h-1v1h-1v-1h-1v1h-5v-1h-1v1h-3v-1h-1v1h-3v1h-1v-1h-1v-1h-1v3h-1v-2h-2v-1h-1v1h-18v-1h-1v1h-9v-1h-1v1h-6v-1h-1v1h-1v-1h-1v1h-2v-1h-2v1h-4v-1h-1v1h-9v-1h-3v1h-1v-1h-1v1h-1v-1h-1v1h-1v-1h-2v1h-1v-1h-1v1h-3v-1h-1v1h-3v-1h-1v1h-5v-1h-1v1h-3v-1h-1v5h-1v-4h-4v-1h-1v1h-9v-1h-1v1h-5v-1h-1v1h-5v-1h-2v2h-1v2h-1v-3h-3v-1h-1v1h-2v-1h-1v1h-1v1h-1v6h-1v-8h-1v1h-2v-1h-1v1h-8v-1h-1v1h-1v-1h-1v1h-3v1h-1v-1h-12v2h-1v-2h-4v-1h-1v1h-3v2h-1v-2h-5v-1h-1v1h-13v2h-2v-2h-1v-1h-2v1h-3v-1h-1v1h-1v1h-1v-1h-2v-1h-1v1h-3v-1h-1v1h-4v1h-1v-1h-4v-1h-1v1h-17v-1h-1v1h-11v-1h-1v1h-5v-1h-1v1h-8v-1h-1v1h-9v1h-1v-1h-2v1h-1v-1h-2v1h-1v-1h-1v-1h-1v1h-5v-1h-1v1h-3v-1h-1v1h-1v-1h-1v3h-1v-2h-9v1h-1v-1h-2v-1h-2v1h-8v-1h-2v2h-2v1h-1v-1h-1v1h-1v2h-1v-1h-1v-2h-1v1h-1v-1h-2v-1h-6v1h-2v-1h-1v-1h-1v1h-7v1h-1v-1h-6v-1h-1v1h-5v1h-1v-1h-19v-1h-1v1h-9v1h-1v-1h-9v-1h-1v1h-2v-1h-1v1h-2v-1h-1v1h-8v-1h-1v1h-1v2h-1v3h-1v-5h-3v-1h-2v1h-5v-1h-1v1h-3v-1h-1v2h-1v-1h-4v1h-2v-2h-1v1h-6v-1h-1v1h-3v1h-1v-1h-1v-1h-1v1h-7v-1h-1v1h-8v1h-1v4h-1v-6h-1v2h-1v-2h-1v1h-1v1h-1v-1h-9v-1h-1v1h-1v1h-1v-2h-1v1h-4v1h-1v-2h-1v1h-4v-1h-2v1h-6v-1h-2v1h-2v-1h-1v1h-3v-1h-1v1h-5v-1h-1v1h-6v-1h-1v1h-5v1h-1v-1h-2v-1h-1v1h-3v1h-1v-2h-1v1h-3v-1h-1v1h-3v-1h-1v1h-14v-1h-1v1h-8v-1h-1v1h-5v-1h-1v1h-5v-1h-1v1h-2v1h-3v1h-1v-1h-1v-1h-8v-1h-1v1h-14v-1h-1v1h-5v-1h-2v1h-4v-1h-1v1h-2v-1h-1v1h-6v-1h-1v1h-2v-1h-2v1h-2v4h-1v-4h-1v-1h-4v1h-3v-1h-1v1h-4v1h-1v-1h-4v-1h-1v1h-3v-1h-1v1h-2v-1h-1v1h-1ZM277 395h4v1h1v-1h7v-2h1v2h2v1h1v-1h3v1h1v-1h3v-2h1v3h1v-1h12v1h1v-1h5v1h2v-1h6v-2h3v-3h1v1h1v2h2v1h1v2h1v-1h3v1h1v-1h10v1h1v-1h1v1h2v-1h3v-1h1v2h1v-1h6v1h1v-1h9v1h1v-1h11v-1h1v1h3v1h1v-1h3v1h2v-1h8v1h1v-1h3v-1h2v-1h1v1h2v1h2v1h1v-1h6v1h1v-1h3v1h1v-1h2v1h1v-7h1v5h1v2h1v-1h2v1h1v-2h2v1h5v-2h1v2h3v1h1v-1h7v-1h1v1h1v1h1v-1h8v-1h1v1h10v1h2v-1h6v-1h1v1h14v-1h1v1h39v1h1v-1h2v1h1v-1h5v1h1v-2h1v2h1v-1h12v-1h1v2h1v-1h4v1h1v-1h11v-1h1v1h2v1h1v-1h11v-1h2v1h4v1h1v-1h7v1h1v-1h1v-1h1v2h1v-1h2v1h1v-2h1v1h3v1h1v-1h2v-1h1v1h2v1h1v-1h7v-1h1v2h2v-2h1v1h5v-2h1v2h1v1h1v-1h1v1h1v-1h1v1h1v-1h3v1h2v-1h12v1h1v-1h2v1h1v-1h3v-2h1v-3h1v5h1v1h1v-1h2v-1h1v1h1v1h1v-1h3v1h1v-1h2v-1h1v-1h1v1h2v1h2v1h1v-1h16v1h1v-1h8v1h1v-1h7v1h1v-1h2v-1h1v1h3v1h2v-2h1v1h7v1h1v-1h9v1h1v-1h5v1h2v-1h8v1h1v-1h5v1h1v-1h2v1h1v-1h1v1h1v-1h5v-2h1v3h1v-1h3v1h2v-1h1v1h1v-1h1v1h1v-1h4v1h1v-1h8v1h2v-1h1v1h1v-2h1v1h9v-5h1v6h2v-1h3v1h1v-1h1v-1h2v-1h2v2h12v1h1v-1h1v1h1v-1h11v1h1v-3h1v2h1v1h1v-1h2v-1h1v1h1v1h1v-1h1v-1h1v1h2v-1h1v1h13v1h1v-1h7v1h1v-1h4v1h1v-1h5v1h2v-1h2v1h1v-1h1v1h1v-1h2v1h1v-1h2v1h1v-1h3v-2h1v3h1v-1h6v1h1v-1h3v-1h1v1h8v1h1v-1h6v1h1v-1h12v1h1v-1h14v1h1v-1h1v-1h1v1h3v1h1v-1h8v1h1v-1h11v-1h1v1h5v1h1v-1h3v-1h1v2h1v-1h7v1h1v-1h4v1h1v-1h3v1h1v-1h8v1h1v-1h1v1h1v-1h7v-1h1v1h9v1h1v-1h8v-1h1v1h9v1h1v-1h1v-1h1v1h2v1h1v-1h21v1h1v-1h2v1h1v-1h9v1h1v-1h1v1h1v-1h2v1h1v-1h6v-1h1v1h13v-2h1v3h1v-1h1v1h1v-1h2v1h1v-1h2v1h1v-1h6v1h1v-3h1v2h6v1h1v-1h2v1h1v-1h7v-1h1v1h4v1h1v-1h2v1h1v-1h8v1h1v-1h6v-1h1v1h6v1h2v-1h11v1h1v-1h10v1h1v-1h8v1h1v-1h7v1h2v-1h5v1h1v-1h1v1h3v-1h6v1h1v-1h13v1h1v-1h4v1h1v-1h6v1h1v-1h2v1h1v-1h9v-1h3v1h4v1h1v-1h1v1h1v-3h1v2h5v-1h1v1h12v1h2v-1h8v1h1v-1h3v-1h1v1h2v-1h1v-1h1v2h5v1h1v-1h6v-2h1v2h11v-2h1v1h1v1h3v-1h1v1h4V398h-1v1h-5v1h-1v-1h-1v-1h-1v1h-3v-1h-1v1h-4v-1h-2v1h-1v-1h-1v1h-3v-1h-1v1h-1v-1h-1v1h-1v-1h-1v1h-1v-1h-1v1h-6v1h-1v-1h-4v-1h-1v2h-1v-1h-8v-1h-1v1h-4v1h-1v-1h-4v-1h-1v1h-2v-1h-3v1h-1v1h-1v-1h-2v-1h-1v1h-1v-1h-1v1h-3v-1h-1v1h-3v-1h-2v1h-7v-1h-1v1h-3v-1h-1v1h-4v-1h-1v1h-5v-1h-1v1h-3v1h-1v-1h-8v1h-1v-1h-1v-1h-1v1h-1v-1h-1v1h-6v2h-1v-2h-3v1h-1v-1h-2v1h-1v-2h-2v1h-2v-1h-1v1h-4v-1h-1v1h-7v1h-1v-1h-3v-1h-1v1h-4v-1h-1v1h-5v-1h-2v1h-4v-1h-1v1h-7v-1h-1v1h-4v-1h-1v1h-1v-1h-1v1h-6v-1h-2v1h-1v-1h-2v1h-9v-1h-2v1h-19v-1h-1v1h-3v-1h-1v1h-2v-1h-1v1h-2v-1h-1v2h-1v-1h-1v-1h-1v1h-3v2h-1v-2h-7v-1h-1v1h-2v-1h-1v1h-3v-1h-1v1h-2v-1h-1v1h-18v1h-1v-1h-3v-1h-1v1h-3v-1h-1v1h-4v-1h-1v1h-17v-1h-1v1h-7v-1h-2v1h-3v1h-1v-2h-1v1h-12v-1h-1v1h-1v-1h-1v1h-1v-1h-1v1h-6v1h-1v-1h-1v-1h-1v1h-3v-1h-1v1h-1v-1h-1v1h-10v-1h-1v1h-23v-1h-1v1h-5v1h-1v-1h-1v-1h-2v1h-3v-1h-1v1h-3v-1h-1v1h-4v1h-2v-2h-2v1h-5v2h-1v-2h-3v-1h-1v1h-6v1h-1v-1h-1v-1h-2v1h-2v-1h-1v1h-4v-1h-2v1h-8v-1h-1v1h-3v-1h-1v1h-1v-1h-2v1h-1v-1h-1v1h-1v-1h-1v1h-5v-1h-4v1h-5v-1h-1v1h-2v-1h-1v2h-1v-1h-12v-1h-1v1h-6v-1h-1v1h-6v1h-1v-2h-1v1h-1v-1h-1v1h-3v-1h-1v1h-8v-1h-1v1h-8v-1h-2v1h-11v-1h-1v1h-1v1h-1v1h-1v-1h-1v-1h-1v1h-1v-1h-6v5h-1v-5h-1v-1h-1v1h-2v-1h-1v1h-5v-1h-1v2h-1v-1h-1v-1h-1v1h-2v1h-1v-1h-1v-1h-1v1h-3v2h-1v-2h-5v-1h-1v1h-6v-1h-2v1h-1v-1h-2v1h-1v-1h-1v1h-1v-1h-1v1h-3v-1h-1v3h-1v-2h-2v-1h-1v1h-6v-1h-1v1h-1v-1h-2v2h-1v-1h-5v-1h-1v1h-4v1h-1v-1h-2v-1h-1v1h-7v-1h-1v1h-3v-1h-1v1h-4v-1h-1v1h-8v-1h-1v1h-3v-1h-1v1h-4v-1h-1v1h-3v-1h-1v1h-1v-1h-4v1h-2v-1h-2v1h-3v1h-1v-1h-5v1h-2v1h-1v-1h-1v-1h-6v-1h-1v1h-5v1h-1v5h-1v-5h-1v-1h-5v-1h-1v1h-1v-1h-1v1h-3v-1h-1v2h-1v-1h-17v-1h-1v1h-3v-1h-1v1h-10v-1h-1v1h-3v-1h-1v1h-6v-1h-2v1h-4v-1h-1v1h-2v1h-1v-1h-6v-1h-3v1h-7v-1h-3v1h-9v-1h-2v1h-3v-1h-1v1h-6v-1h-1v1h-1v-1h-1v1h-9v1h-1v-1h-1v-1h-2v1h-9v-1h-1v1h-1v-1h-1v1h-6v-1h-1v2h-1v-1h-3v-1h-1v1h-3v-1h-2v1h-2v-1h-1v1h-4v-1h-1v1h-3v-1h-2v1h-2v-1h-1v1h-1v-1h-2v1h-4v1h-1v-1h-2v-1h-1v1h-2v-1h-1v1h-2v-1h-1v1h-1v-1h-1v1h-2v-1h-1v1h-1v-1h-1v1h-2v1h-1v-2h-1v1h-6v1h-1v-1h-6v-1h-1v1h-3v1h-1v-2h-1v1h-5v1h-1v-1h-1v-1h-1v2h-1v-1h-3v-1h-1v2h-2v-1h-3v1h-1v-1h-2v-1h-2v1h-1v1h-1v-1h-2v-1h-1v1h-2v1h-1v6h-1v-8h-1v1h-4v-1h-1v1h-8v-1h-2v1h-1v1h-2v1h-2v-1h-2v-2h-1v1h-9v-1h-1v1h-4v-1h-1v1h-1v-1h-2v1h-6v-1h-1v1h-4v1h-2v-1h-2v1h-1v-1h-3v-1h-1v1h-1v-1h-1v3h-1v-2h-10v1h-1v-1h-7v1h-1v-2h-1v1h-1v1h-1v-2h-2v1h-2v-1h-1v1h-1v-1h-2v1h-1v1h-1v1h-1v1h-1v1h-3v-2h-1v-1h-1v-1h-3v-1h-2v1h-1v-1h-1v1h-1v-1h-2v1h-1v-1h-1v1h-4v-1h-2v1h-5v-1h-1v1h-4v-1h-1v2h-1v-1h-5v-1h-1v1h-11v-1h-1v2h-1v-2h-1v1h-1ZM277 426h12v1h1v-1h2v1h1v-1h5v-1h1v1h1v-2h1v2h1v1h3v-1h1v1h1v-1h8v1h1v-1h5v1h1v-1h2v1h1v-1h6v1h1v-1h5v1h1v-1h4v1h3v-1h2v1h1v-1h8v1h1v-1h3v-2h1v2h1v-2h1v2h1v1h1v-1h9v1h1v-1h2v1h1v-1h6v1h1v-1h1v1h1v-1h1v1h1v-1h15v1h1v-1h2v-1h1v1h9v1h1v-1h1v1h1v-1h6v1h1v-1h3v1h1v-1h1v1h1v-1h4v1h1v-1h21v1h1v-1h5v-1h1v1h1v1h1v-1h4v1h1v-1h3v1h1v-1h11v-1h1v1h5v-1h2v1h4v1h1v-1h1v1h1v-1h5v-1h1v1h13v1h1v-1h6v1h1v-1h4v-2h1v-1h2v-2h1v2h1v1h1v1h2v1h4v-1h1v1h10v-1h1v1h3v-1h1v-3h1v3h1v1h4v1h1v-3h1v2h5v1h1v-1h4v1h1v-1h3v1h1v-1h4v1h1v-1h6v-1h1v1h10v1h1v-1h4v1h1v-1h2v-2h1v2h7v1h1v-1h8v1h2v-1h1v1h1v-1h8v1h1v-1h1v-3h1v3h10v-1h1v1h3v-1h1v1h7v1h1v-1h4v-1h1v1h4v1h1v-1h8v1h1v-1h6v1h1v-1h2v1h2v-1h1v-1h1v1h11v1h1v-2h1v1h1v-1h1v1h1v-2h1v2h2v-2h1v-4h1v5h1v2h1v-1h2v1h1v-1h5v-2h1v2h3v-2h1v3h1v-1h3v-1h1v2h1v-1h2v1h1v-1h16v-1h1v1h2v1h1v-1h3v1h1v-1h6v-1h3v-1h1v1h3v1h7v1h1v-1h3v-1h2v1h9v1h1v-1h1v1h1v-1h8v-1h1v1h1v-1h1v1h1v1h2v-1h1v1h1v-1h4v1h1v-1h2v1h1v-2h1v1h27v1h1v-1h6v1h1v-1h6v1h1v-2h1v1h11v1h1v-1h5v1h1v-1h2v1h1v-1h3v-1h1v1h4v-1h1v1h1v-1h1v2h1v-1h1v-1h1v2h1v-1h6v-1h2v-1h2v1h2v1h7v-1h1v1h6v1h1v-1h3v1h1v-1h8v1h1v-1h1v-1h1v1h4v1h1v-1h2v1h1v-1h1v1h1v-1h3v-1h1v-1h1v2h5v1h1v-1h15v1h1v-1h2v-1h1v1h2v1h1v-1h2v-1h1v2h2v-1h2v1h1v-3h1v2h10v-1h1v1h1v1h1v-1h2v1h1v-1h5v-2h1v2h4v1h1v-1h2v1h1v-3h1v2h11v-2h1v2h6v1h1v-1h9v-1h1v1h10v-1h1v1h5v1h1v-1h5v-1h1v1h6v1h1v-1h3v1h2v-1h15v1h1v-1h1v1h3v-1h5v-1h1v1h7v1h1v-1h4v1h1v-1h9v-1h1v1h4v1h1v-1h3v1h1v-1h2v1h1v-1h11v1h1v-1h1v1h1v-1h1v1h1v-1h3v1h1v-1h3v-1h1v2h1v-1h1v1h1v-1h4v-1h1v1h5v-1h1v1h26v1h1v-1h3v1h1v-1h1v-1h1v-5h1v4h1v3h1v-1h30v1h1v-1h9v1h1v-1h4v1h1v-1h6v1h1v-1h4v1h1v-1h8v1h2v-1h2v1h1v-1h4v1h1v-1h19v1h1v-1h1v-1h1v1h8v-1h1v1h1v1h1v-1h9v-1h1v1h16v-1h1v1h5v1h2v-1h5v1h1v-1h3v1h1v-1h4v-1h1v2h1v-1h1v1h1v-1h4V430h-2v-1h-1v1h-2v-1h-1v2h-1v-1h-1v-1h-1v1h-2v1h-1v-1h-2v-1h-1v1h-2v-1h-1v1h-4v-1h-1v1h-1v-1h-1v1h-1v-1h-1v1h-1v-1h-1v1h-2v1h-1v-1h-2v-1h-1v1h-6v-1h-1v1h-7v-1h-1v2h-1v-1h-2v-1h-1v1h-5v1h-1v-2h-1v1h-6v-1h-1v1h-3v-1h-1v2h-1v-1h-5v1h-1v-1h-5v2h-1v-2h-6v-1h-2v1h-1v-1h-2v1h-4v-1h-1v1h-5v-1h-2v1h-6v-1h-1v1h-1v1h-1v-1h-1v-1h-2v1h-5v-1h-2v1h-8v-1h-1v1h-2v-1h-1v1h-9v-1h-1v2h-1v-1h-2v-1h-1v1h-13v1h-1v4h-1v-4h-1v-1h-4v-1h-1v1h-2v-1h-1v1h-9v-1h-3v1h-2v-1h-1v1h-8v1h-1v-2h-2v1h-3v-1h-1v1h-7v-1h-1v1h-5v-1h-1v1h-1v-1h-1v1h-1v-1h-1v1h-2v-1h-2v1h-2v-1h-1v1h-5v-1h-1v1h-1v1h-1v-1h-1v-1h-1v1h-7v1h-1v-2h-1v1h-2v-1h-3v1h-5v-1h-1v1h-2v1h-1v-1h-1v-1h-1v1h-1v-1h-1v1h-8v1h-1v-1h-6v-1h-1v1h-1v1h-1v-1h-1v-1h-1v1h-2v-1h-1v1h-5v1h-1v-1h-3v-1h-1v1h-1v-1h-1v1h-2v-1h-1v1h-5v-1h-1v1h-4v1h-1v-2h-1v1h-1v-1h-1v1h-5v-1h-1v1h-2v-1h-1v1h-9v-1h-1v1h-1v-1h-1v1h-5v-1h-1v1h-5v-1h-1v1h-6v1h-1v-1h-1v-1h-1v1h-2v-1h-1v1h-3v-1h-1v1h-3v-1h-1v1h-1v2h-1v-3h-1v1h-10v-1h-1v1h-7v2h-1v-2h-5v1h-1v-1h-1v-1h-3v1h-11v1h-1v-2h-1v1h-1v-1h-1v3h-1v-2h-3v-1h-1v1h-4v-1h-1v1h-1v-1h-1v1h-7v-1h-1v1h-5v-1h-1v1h-1v-1h-1v1h-3v-1h-2v1h-4v-1h-1v1h-6v-1h-5v3h-1v-2h-1v1h-1v-1h-4v-1h-1v2h-2v1h-1v-1h-3v-1h-2v-1h-2v1h-2v-1h-1v1h-5v1h-1v-1h-1v-1h-1v1h-3v-1h-1v1h-2v-1h-1v1h-15v1h-1v-1h-2v-1h-1v1h-3v-1h-2v1h-2v-1h-2v1h-4v-1h-3v1h-1v-1h-1v1h-3v1h-1v-1h-6v-1h-1v1h-3v-1h-1v1h-1v1h-1v-1h-7v-1h-1v2h-1v-1h-1v-1h-1v1h-1v-1h-1v1h-5v1h-1v-2h-2v1h-11v-1h-1v1h-9v-1h-1v1h-4v-1h-2v1h-4v1h-1v-1h-2v1h-1v-1h-1v1h-3v1h-1v-1h-3v-2h-1v1h-2v-1h-1v1h-5v-1h-2v1h-3v1h-1v-1h-5v-1h-1v1h-4v-1h-1v1h-2v-1h-1v1h-10v-1h-1v1h-3v-1h-1v1h-3v-1h-2v1h-1v-1h-1v1h-2v2h-1v4h-1v-4h-1v-2h-7v-1h-1v1h-4v1h-1v-1h-1v2h-1v-2h-6v-1h-1v1h-1v-1h-1v1h-3v1h-1v-1h-5v-1h-1v1h-5v-1h-3v1h-1v-1h-2v2h-1v-1h-1v-1h-2v1h-14v-1h-1v1h-1v-1h-1v1h-8v3h-1v-3h-2v-1h-1v1h-1v1h-1v-1h-3v-1h-1v1h-16v-1h-1v1h-4v1h-1v-2h-1v1h-10v-1h-1v1h-7v-1h-1v1h-3v-1h-1v1h-4v1h-1v-1h-4v1h-1v-2h-1v1h-16v1h-1v4h-1v-6h-1v1h-1v-1h-1v1h-3v-1h-1v1h-9v-1h-1v1h-1v1h-1v-1h-1v1h-2v1h-1v1h-1v2h-1v-3h-2v-1h-1v-1h-7v-1h-1v2h-1v-1h-1v-1h-1v1h-7v-1h-1v1h-5v-1h-1v1h-5v-1h-1v1h-3v-1h-1v1h-1v-1h-1v1h-7v-1h-1v1h-3v-1h-1v1h-7v-1h-1v1h-2v-1h-2v1h-3v-1h-1v1h-1v1h-1v-1h-5v-1h-1v1h-1v-1h-1v1h-1v-1h-2v1h-2v-1h-1v1h-1v-1h-1v1h-12v-1h-1v1h-2v-1h-1v1h-2v-1h-1v1h-1v-1h-1v1h-15v-1h-1v1h-5v-1h-1v1h-1v1h-1v-1h-1v-1h-1v1h-3v-1h-1v1h-5v-1h-1v1h-2v-1h-1v1h-1v-1h-1v1h-2v-1h-1v1h-3v-1h-2v1h-1v-1h-1v1h-1v-1h-1v1h-3v-1h-1v1h-1v1h-1v-1h-5v-1h-2v1h-1v-1h-1v1h-15v-1h-1v2h-1v-2h-1v1h-9v-1h-1v1h-2v1h-1v-2h-1v1h-7v1h-1v-1h-3v-1h-1v1h-3v-1h-1v1h-2v-1h-1v1h-1v-1h-1v1h-7v-1h-1v2h-1v-1h-3v-1h-1v1h-6v-1h-2v1h-1v-1h-1v1h-1v-1h-2v1h-4v-1h-2ZM277 456h2v-1h1v1h11v-1h2v1h3v-1h1v1h3v1h1v-1h23v-1h1v1h7v-1h1v1h6v1h1v-1h4v1h1v-1h2v-1h1v1h3v1h1v-1h2v-1h1v1h4v1h1v-1h1v1h1v-1h7v-1h1v2h1v-1h1v1h1v-1h3v1h1v-1h11v1h1v-1h3v1h1v-1h6v1h2v-1h2v-1h1v1h2v-1h1v1h3v1h1v-1h9v1h1v-1h2v1h1v-1h2v-1h1v1h3v1h1v-1h4v-1h1v1h2v-2h1v2h7v-1h1v1h4v-1h1v1h14v-1h1v1h9v1h1v-1h11v-1h1v1h10v1h1v-1h3v1h1v-1h5v1h1v-1h2v-1h1v1h8v1h1v-1h2v-1h2v2h1v-1h8v1h1v-1h1v1h1v-1h1v1h1v-1h4v1h2v-1h5v1h1v-1h7v1h1v-1h6v1h1v-1h6v-2h1v2h1v1h1v-1h1v1h1v-1h3v1h1v-1h21v-1h1v1h4v1h1v-1h28v1h1v-1h5v1h1v-1h5v-1h1v1h3v1h1v-1h6v-1h1v1h6v-1h1v1h11v1h1v-1h1v1h1v-1h4v1h1v-1h2v-3h1v4h1v-1h2v1h1v-1h9v1h1v-1h2v1h2v-1h12v-6h1v6h6v-1h1v-4h1v3h1v2h3v1h1v-1h13v-1h1v-5h1v4h1v3h1v-8h1v7h19v1h1v-1h4v1h2v-1h3v1h2v-1h4v1h1v-1h4v-1h1v1h2v1h1v-1h4v-2h1v2h4v1h1v-1h1v1h1v-1h4v-1h1v1h1v1h1v-1h1v-2h1v1h1v1h5v1h1v-1h9v-1h1v1h8v-2h1v2h14v-2h1v3h1v-1h4v1h1v-1h1v-1h1v1h14v1h1v-2h1v1h2v1h1v-1h2v-1h1v1h1v1h1v-1h1v1h1v-1h10v1h3v-1h19v1h1v-1h8v-1h1v1h1v1h3v-1h4v-1h1v1h2v1h1v-1h10v1h1v-1h3v1h1v-1h1v1h1v-1h3v-1h1v-1h1v1h1v1h3v1h1v-1h19v1h1v-1h1v1h1v-1h1v1h1v-1h9v1h1v-1h10v-2h1v2h2v1h1v-5h1v5h2v-1h1v-1h1v1h8v1h1v-1h10v1h1v-1h11v1h1v-1h11v1h1v-1h2v1h1v-1h1v-1h1v1h5v-1h1v1h11v1h1v-1h5v1h1v-1h4v1h1v-1h9v1h1v-1h4v1h1v-1h2v-1h3v-1h1v1h3v1h1v1h1v-1h5v-1h2v-1h1v1h2v1h3v-1h1v1h4v-1h1v1h6v1h1v-1h12v1h1v-1h1v1h1v-1h1v-1h1v1h2v1h1v-1h1v1h1v-1h11v1h1v-1h21v-2h1v1h1v1h2v1h1v-1h5v-2h1v-3h1v4h1v1h1v1h1v-1h2v1h1v-1h3v1h1v-1h1v1h1v-1h3v-1h1v1h2v-1h1v1h1v1h4v-1h1v-1h1v1h7v-2h1v3h1v-1h8v1h1v-1h9v1h1v-1h2v-1h1v1h6v1h1v-1h1v-1h1v1h5v1h1v-1h6v1h1v-1h8v-1h1v1h5v1h1v-1h1v-1h1v1h1v1h1v-2h1v1h2v1h1v-2h1v1h2v-1h1v1h1v1h1v-1h2v-6h1v6h3v1h1v-2h1v1h4v-1h1v1h12v1h1v-1h5v-1h1v1h8v1h1v-1h3v1h1v-1h8v1h1v-1h4v1h1v-1h4v1h1v-1h2v1h1v-2h1v2h1v-1h1v-2h1V460h-1v1h-1v-1h-3v-1h-1v1h-1v1h-1v-1h-5v1h-1v-1h-4v-1h-1v1h-11v-1h-1v1h-5v-1h-3v1h-1v-1h-1v1h-3v1h-1v-1h-9v1h-1v-1h-10v-1h-1v1h-2v5h-1v-6h-1v1h-4v-1h-1v1h-4v-1h-2v1h-4v-1h-3v1h-5v-1h-1v2h-1v-2h-2v1h-1v-1h-2v1h-11v1h-1v-1h-1v-1h-1v1h-8v2h-1v-2h-1v-1h-1v1h-3v-1h-1v1h-3v-1h-1v1h-1v1h-1v-1h-3v-1h-1v2h-1v-1h-4v-1h-1v1h-1v-1h-1v2h-1v-1h-7v-1h-2v1h-5v2h-1v-2h-4v-1h-1v1h-3v-1h-2v1h-2v-1h-1v1h-2v2h-1v3h-1v-3h-1v-2h-4v-1h-1v1h-4v1h-1v-2h-1v1h-1v-1h-4v1h-1v-1h-2v1h-4v-1h-2v1h-1v-1h-1v1h-16v1h-1v-1h-7v1h-1v-1h-11v-1h-1v1h-1v-1h-1v1h-1v2h-1v-2h-4v-1h-2v1h-7v1h-2v1h-1v-1h-2v-1h-3v-1h-1v1h-3v1h-1v-1h-1v1h-1v1h-1v-1h-2v1h-1v-2h-9v-1h-1v1h-1v-1h-2v1h-3v-1h-1v1h-3v1h-1v-1h-6v-1h-1v1h-4v-1h-2v1h-4v-1h-1v1h-8v-1h-2v1h-2v-1h-1v2h-1v-1h-2v-1h-1v1h-5v-1h-1v1h-5v1h-1v-1h-2v-1h-1v1h-2v-1h-1v1h-2v1h-1v-1h-2v-1h-1v1h-17v-1h-1v1h-1v4h-1v-4h-5v-1h-2v1h-4v-1h-1v1h-3v-1h-1v1h-10v-1h-1v1h-2v-1h-1v1h-1v-1h-1v2h-1v-1h-7v-1h-2v1h-2v2h-1v-2h-1v-1h-1v1h-1v-1h-1v1h-3v2h-2v-1h-1v-1h-3v1h-1v-1h-2v-1h-1v1h-1v-1h-1v1h-11v-1h-1v1h-3v-1h-2v1h-3v-1h-1v1h-16v-1h-1v1h-14v-1h-1v1h-7v1h-1v-2h-1v1h-1v-1h-2v1h-7v-1h-2v1h-7v-1h-1v1h-2v1h-1v-1h-1v-1h-1v1h-4v-1h-1v1h-2v-1h-1v1h-1v2h-1v-3h-1v1h-2v-1h-1v1h-15v-1h-1v1h-6v1h-1v-1h-4v-1h-1v1h-4v-1h-1v1h-8v2h-1v-2h-9v-1h-1v1h-2v-1h-1v1h-5v-1h-1v1h-1v-1h-2v1h-7v-1h-1v1h-1v-1h-1v1h-3v-1h-1v1h-16v-1h-3v1h-2v-1h-1v1h-4v7h-1v-6h-1v-1h-1v6h-1v-4h-1v-2h-14v2h-1v-2h-1v-1h-1v1h-1v4h-1v-4h-6v1h-1v6h-1v-6h-1v-1h-6v-1h-1v1h-2v-1h-1v1h-11v1h-2v-1h-1v-1h-1v1h-4v3h-1v-3h-1v-1h-2v1h-2v-1h-1v1h-3v-1h-1v1h-1v-1h-1v1h-5v1h-1v-1h-5v-1h-1v1h-8v-1h-1v1h-5v-1h-1v1h-3v-1h-1v1h-4v-1h-1v1h-1v-1h-1v1h-7v-1h-1v1h-1v1h-1v-1h-3v-1h-1v2h-1v-1h-3v-1h-1v1h-7v-1h-1v1h-3v-1h-1v1h-10v1h-1v-1h-1v-1h-1v1h-2v-1h-1v1h-4v-1h-1v1h-8v-1h-1v2h-1v-1h-1v-1h-1v1h-9v-1h-2v1h-1v1h-1v-1h-2v1h-1v-1h-3v1h-1v-1h-6v-1h-1v1h-2v-1h-1v1h-2v-1h-1v1h-5v-1h-1v1h-2v1h-1v-1h-1v-1h-1v1h-3v2h-1v-2h-2v-1h-1v1h-4v-1h-1v1h-1v-1h-1v1h-5v-1h-1v1h-5v-1h-1v1h-13v1h-1v-1h-1v-1h-3v1h-6v-1h-1v1h-1v-1h-1v1h-3v-1h-1v1h-5v-1h-1v1h-16v1h-1v-1h-18v-1h-1v1h-9v2h-1v-2h-1v1h-1v-1h-1v-1h-1v1h-1v-1h-1v1h-10v-1h-3v1h-3v-1h-1v1h-5v-1h-1v1h-2v1h-1v-1h-3v-1h-3v1h-1v1h-1v-2h-1v1h-1v-1h-1v1h-5v-1h-1v1h-1v-1h-1v1h-9v1h-1v-1h-3v-1h-2v1h-4v-1h-1v1h-7v-1h-1v1h-4v-1h-1v1h-4v2h-1v-2h-7v1h-1v-1h-6v-1h-1v1h-1v1h-1v-1h-9v-1h-1v2h-1v-1h-3v-1h-1v1h-1v-1h-1v1h-3v-1h-1v1h-7v1h-1v-1h-3v1h-1v-2h-4v1h-2ZM277 486h7v1h1v-1h5v1h1v-1h6v1h1v-1h15v-1h2v1h19v1h1v-1h1v1h1v-2h1v1h4v-2h1v2h7v-1h1v1h1v1h1v-1h9v-1h1v1h4v1h1v-1h3v1h1v-1h12v-1h1v1h9v-1h1v1h1v-1h1v2h1v-1h2v1h1v-1h5v1h1v-1h3v1h1v-1h3v-2h1v2h1v1h1v-1h11v-2h2v2h34v1h1v-1h24v1h1v-1h3v-1h1v1h2v1h1v-1h1v1h1v-2h1v2h1v-1h5v1h1v-1h2v-1h2v1h9v-2h1v2h11v1h1v-1h1v-1h1v1h8v1h1v-1h2v1h1v-1h16v-1h1v1h1v1h1v-1h3v1h1v-1h4v-1h2v1h8v1h2v-1h2v1h1v-1h5v1h1v-1h17v1h2v-2h1v1h2v-1h1v1h1v1h1v-1h2v-1h2v1h1v-1h1v1h11v1h1v-1h11v1h1v-1h4v1h1v-2h1v1h7v1h1v-1h16v1h1v-2h1v1h6v1h1v-1h31v1h1v-1h5v1h1v-1h1v1h1v-1h1v1h1v-1h11v-1h1v-1h1v2h5v1h1v-2h1v1h10v1h1v-1h3v1h1v-1h2v1h1v-1h3v1h2v-1h7v1h1v-1h3v-1h1v1h2v1h1v-1h21v-1h1v1h13v-1h1v1h2v-1h1v1h7v1h1v-1h8v1h1v-1h14v1h1v-1h13v1h1v-1h15v1h1v-1h9v1h2v-1h20v1h1v-1h8v-1h1v2h1v-1h10v1h1v-1h7v1h1v-1h9v1h1v-1h3v-1h1v-5h1v6h3v-1h1v1h3v1h1v-1h5v1h1v-1h1v-1h1v1h15v-1h1v2h2v-1h14v1h1v-1h6v-1h1v1h1v1h1v-1h10v1h1v-1h7v1h1v-1h4v1h1v-1h12v-1h1v1h6v1h1v-1h7v1h2v-1h2v1h1v-1h4v1h1v-1h6v-1h1v1h2v1h1v-1h1v-2h1v3h1v-1h3v-1h1v1h2v1h1v-1h6v1h1v-2h1v1h1v-2h1v2h11v1h1v-1h2v1h1v-1h11v1h1v-1h1v1h1v-1h4v-1h1v1h7v-1h1v1h3v-2h1v2h1v1h1v-1h15v1h1v-1h5v1h1v-1h1v-1h1v2h1v-1h17v-2h1v1h1v1h1v-2h1v2h4v-1h1v1h4v1h2v-1h5v1h1v-1h7v1h1v-1h4v1h1v-1h4v-1h1v-1h1v2h1v1h1v-1h1v1h1v-1h2v1h2v-1h5v-1h1v1h8v-2h1v2h3v1h1v-1h2v-1h1v1h1v1h1v-2h1v1h1v1h1v-1h6v-1h1v1h2v1h1v-1h6v-1h1v1h1v-1h1v1h1v1h1v-1h6v1h1v-1h3v1h1v-1h10v1h1v-1h8v1h1v-1h13v1h1v-1h2v-1h1v1h10v1h2v-1h1v1h1v-1h2v1h1v-1h11v1h1v-1h10v1h2v-1h2v1h1v-1h1v1h1v-1h7V490h-4v-1h-1v1h-1v-1h-1v1h-1v-1h-1v1h-12v1h-1v-1h-4v-1h-1v1h-2v-1h-2v1h-3v-1h-2v1h-2v1h-1v-1h-1v-1h-1v1h-1v1h-1v-1h-1v-1h-1v1h-9v-1h-1v2h-1v-2h-2v1h-1v-1h-1v1h-1v-1h-2v1h-3v-1h-2v1h-3v-1h-1v1h-7v-1h-1v3h-1v-2h-6v2h-1v-2h-3v-1h-2v1h-5v-1h-1v1h-1v-1h-1v1h-3v1h-1v-1h-2v-1h-1v1h-1v-1h-1v1h-7v1h-1v-1h-3v-1h-1v1h-4v-1h-2v1h-11v1h-1v-1h-6v-1h-1v1h-5v-1h-1v1h-2v2h-1v-2h-3v2h-1v-2h-3v-1h-1v1h-11v1h-1v-1h-2v-1h-2v1h-1v1h-1v-1h-8v-1h-1v1h-1v-1h-1v1h-8v-1h-1v1h-5v-1h-1v1h-1v1h-1v-2h-1v2h-1v-1h-5v1h-1v-1h-1v-1h-1v2h-1v-2h-1v1h-13v-1h-1v1h-5v-1h-2v1h-3v-1h-1v1h-3v-1h-1v1h-5v-1h-1v1h-5v-1h-1v1h-1v-1h-1v1h-1v1h-1v-2h-1v1h-1v-1h-2v1h-6v1h-1v-1h-1v-1h-2v1h-1v-1h-1v2h-1v-1h-3v-1h-1v1h-2v-1h-2v1h-1v-1h-1v1h-12v-1h-1v2h-1v-1h-1v-1h-1v1h-1v-1h-1v1h-7v1h-1v-1h-3v-1h-1v1h-4v-1h-1v1h-11v-1h-2v1h-13v-1h-1v1h-9v1h-2v-1h-3v-1h-1v1h-3v-1h-3v1h-2v-1h-1v1h-2v1h-1v-1h-17v-1h-1v1h-6v-1h-1v1h-2v1h-2v-1h-3v-1h-1v1h-1v1h-1v-1h-1v1h-1v-1h-3v-1h-2v1h-1v-1h-1v1h-1v-1h-1v2h-1v-2h-2v1h-4v6h-1v-5h-1v1h-1v-3h-1v1h-10v-1h-1v1h-2v-1h-1v1h-1v2h-1v-2h-1v1h-1v-2h-1v1h-3v-1h-1v1h-9v-1h-1v1h-5v-1h-1v1h-1v-1h-3v1h-7v-1h-1v1h-5v-1h-1v1h-1v-1h-1v1h-5v1h-1v-1h-5v1h-1v-2h-1v1h-3v-1h-1v1h-1v-1h-1v1h-1v-1h-1v1h-5v-1h-2v1h-2v2h-1v-1h-1v-1h-10v-1h-1v1h-7v1h-1v-1h-7v-1h-1v1h-5v-1h-1v2h-1v-2h-2v1h-5v-1h-1v2h-1v-1h-5v-1h-1v2h-1v-2h-1v1h-1v-1h-1v1h-1v-1h-1v2h-1v-1h-2v-1h-1v1h-4v-1h-2v1h-2v1h-2v-1h-2v-1h-1v1h-9v-1h-1v1h-2v1h-1v-1h-6v-1h-1v1h-2v-1h-1v1h-6v1h-1v-2h-1v1h-4v-1h-1v1h-7v-1h-1v1h-2v1h-1v-1h-2v-1h-1v1h-3v-1h-1v1h-3v-1h-1v1h-5v-1h-1v1h-1v1h-1v-1h-3v-1h-2v1h-1v-1h-1v1h-6v-1h-1v1h-4v-1h-1v1h-3v1h-1v-1h-3v-1h-1v2h-1v-1h-5v1h-1v-1h-10v1h-1v-1h-5v-1h-1v1h-4v-1h-1v1h-3v-1h-1v1h-7v1h-1v-1h-3v-1h-1v1h-10v2h-1v-3h-1v1h-5v-1h-1v1h-9v1h-1v-1h-3v-1h-3v2h-1v-1h-6v-1h-1v1h-3v-1h-2v1h-3v-1h-1v1h-7v-1h-1v1h-2v-1h-2v1h-5v-1h-1v1h-16v2h-1v-1h-1v-1h-2v-1h-1v1h-3v-1h-1v1h-5v-1h-1v1h-6v-1h-1v1h-3v1h-1v-1h-2v-1h-1v1h-12v-1h-1v1h-2v-1h-1v1h-27v-1h-1v1h-2v-1h-1v1h-2v-1h-1v1h-7v-1h-1v1h-3v-1h-2v1h-3v1h-1v-1h-14v-1h-1v1h-8v-1h-1v1h-5v2h-1v-2h-6v-1h-1v1h-6v2h-1v-2h-2v-1h-1v1h-1v-1h-1v1h-6v1h-1v-2h-1v1h-3v-1h-2v1h-6v-1h-1v1h-3v1h-1v-1h-2v-1h-2v1h-1v-1h-1v1h-10v-1h-1v1h-2v-1h-1v1h-7v-1h-1v1h-1v-1h-1v1h-8v-1h-1v1h-1v-1h-1v1h-4v1h-1v-2h-1v1h-1v-1h-1v1h-5v-1h-2v1h-1v-1h-1v1h-1v-1h-1v1h-15v1h-1v-1h-4v-1h-1v1h-4v-1h-1v2h-1v-2h-1v1h-3v1h-1v-1h-1v-1h-1v1h-9v-1h-1v1h-1v-1h-1v1h-7v1h-1v-2h-2v1h-7v-1h-1v1h-4v-1h-1v1h-1ZM277 517h2v1h1v-1h2v1h2v-1h6v-1h1v1h3v1h1v-1h3v1h1v-1h13v1h1v-1h17v1h2v-1h1v1h1v-1h18v1h1v-1h2v1h1v-1h4v1h1v-1h3v1h3v-1h16v1h1v-1h20v1h1v-1h5v1h1v-1h8v1h1v-1h6v1h1v-1h1v1h1v-1h25v-1h1v1h5v1h1v-1h1v-1h1v2h1v-1h14v-1h1v1h9v1h1v-1h2v1h1v-1h4v1h1v-1h3v1h1v-1h4v1h1v-1h1v1h1v-1h10v1h2v-1h1v1h1v-2h1v1h2v1h1v-1h5v-1h1v1h1v1h1v-1h1v-1h1v1h2v-1h1v1h3v-1h1v1h11v-1h1v2h1v-1h5v1h1v-1h8v-1h1v1h9v1h1v-1h6v1h1v-1h16v1h1v-1h2v1h1v-1h4v-1h1v1h5v-1h1v2h1v-1h3v1h1v-3h1v3h1v-1h13v1h1v-1h5v1h1v-1h8v-1h1v1h1v1h1v-1h3v-1h1v1h1v1h1v-1h2v1h1v-1h3v-1h1v1h17v-1h1v-4h1v5h4v-2h1v2h4v1h1v-1h2v-1h1v-1h1v1h1v1h11v1h1v-1h1v-2h1v2h4v1h1v-1h26v-1h1v1h5v1h1v-1h5v1h1v-1h3v1h1v-1h4v-2h1v2h5v-1h1v1h3v1h1v-1h8v-1h1v2h1v-1h1v1h1v-1h6v1h1v-1h1v1h1v-1h2v-1h3v-2h1v2h4v1h2v1h1v-1h1v1h1v-1h4v1h1v-1h3v1h1v-1h6v-1h2v1h1v1h1v-1h10v-1h1v1h8v1h1v-1h3v1h1v-1h8v1h2v-1h5v1h2v-1h15v-1h1v1h1v1h1v-1h1v1h1v-1h5v1h1v-1h5v1h1v-1h16v-1h1v1h14v1h1v-1h7v-1h1v1h2v-1h1v1h5v1h1v-1h8v1h1v-1h26v1h1v-1h4v1h1v-1h5v-1h1v2h1v-1h1v-1h1v1h1v1h1v-1h2v1h3v-1h5v-1h1v1h6v1h2v-1h5v-1h1v1h5v1h1v-1h1v-1h1v1h3v-1h1v1h3v-2h1v2h1v1h1v-1h1v1h1v-1h4v-1h1v1h1v1h1v-1h8v1h1v-1h12v-1h1v1h3v1h1v-1h1v1h1v-1h8v1h1v-1h18v-1h1v1h1v1h1v-1h6v1h2v-1h1v1h1v-1h15v-1h1v1h1v-1h1v1h15v1h1v-1h2v1h1v-1h6v1h1v-1h9v-1h1v1h7v-1h1v1h6v1h1v-1h1v1h1v-1h1v-1h1v1h5v1h1v-1h10v-1h1v1h4v1h1v-1h2v1h1v-1h10v1h1v-1h3v-1h1v1h10v1h1v-1h1v1h1v-1h15v1h1v-1h1v-1h2v-1h1v1h1v-2h1v2h1v-1h1v1h2v2h1v-1h1v-1h1v1h2v1h1v-3h1v2h9v1h1v-1h1v1h1v-1h1v1h1v-1h5v1h1v-1h3v1h1v-2h1v1h3v1h1v-1h2v-1h1v1h2v1h1v-1h9v1h1v-1h6v-1h1v1h3v1h1v-1h3v1h1v-1h11v1h1v-1h10v1h1v-1h7v-2h1v2h10v1h1v-1h4v1h1v-1h6V521h-4v-1h-1v1h-2v-1h-2v1h-1v-1h-1v1h-30v-1h-2v1h-2v-1h-1v1h-1v-1h-1v1h-1v-1h-1v1h-3v-1h-1v1h-6v2h-1v-2h-5v-1h-1v1h-1v1h-1v-1h-4v-1h-1v1h-9v-1h-1v1h-1v-1h-2v1h-5v1h-1v-1h-2v-1h-1v1h-1v-1h-1v1h-2v-1h-1v1h-1v-1h-1v1h-2v-1h-1v1h-14v1h-2v1h-2v1h-2v-2h-3v-1h-1v1h-1v-1h-6v-1h-1v1h-2v1h-1v-1h-10v-1h-2v1h-1v-1h-1v1h-1v-1h-1v1h-1v-1h-1v1h-7v-1h-1v1h-1v-1h-1v1h-10v1h-1v-1h-2v-1h-1v1h-11v-1h-1v1h-2v-1h-1v2h-1v-1h-11v-1h-1v1h-13v-1h-1v1h-1v-1h-1v1h-1v-1h-1v1h-4v-1h-1v1h-24v-1h-1v1h-17v-1h-1v1h-12v-1h-1v1h-2v-1h-1v1h-1v1h-1v-1h-1v-1h-5v1h-20v1h-2v-1h-1v-1h-2v1h-1v-1h-1v1h-1v1h-1v-1h-3v-1h-1v1h-6v1h-1v-1h-4v1h-1v-1h-6v-1h-1v1h-3v-1h-1v1h-5v-1h-2v2h-1v-1h-5v-1h-1v1h-2v-1h-1v1h-3v-1h-1v1h-1v-1h-1v1h-3v-1h-1v1h-2v-1h-1v1h-1v-1h-1v1h-1v-1h-2v1h-2v-1h-2v1h-11v-1h-1v2h-1v-1h-1v-1h-1v1h-3v1h-1v-1h-4v1h-1v-1h-3v-1h-1v1h-2v2h-1v-3h-1v1h-1v-1h-1v1h-5v-1h-3v1h-3v-1h-1v1h-1v1h-1v-1h-5v-1h-1v2h-2v-1h-1v-1h-1v1h-1v-1h-2v1h-8v-1h-2v1h-5v1h-1v-1h-2v1h-1v-1h-2v-1h-1v1h-2v-1h-1v1h-1v1h-1v-1h-2v-1h-1v1h-11v-1h-1v1h-1v1h-1v-1h-3v1h-1v-1h-6v-1h-1v1h-5v2h-1v-2h-6v-1h-1v1h-13v-1h-1v1h-2v-1h-2v1h-2v-1h-1v1h-22v-1h-1v1h-2v-1h-1v1h-4v1h-1v-1h-9v-1h-1v1h-1v-1h-1v2h-2v1h-2v1h-3v-2h-4v-1h-8v-1h-1v2h-1v-1h-1v-1h-1v1h-3v-1h-1v1h-5v1h-1v-1h-2v-1h-2v1h-3v1h-1v-1h-1v-1h-1v1h-1v-1h-2v1h-4v-1h-5v2h-1v-1h-2v-1h-1v1h-1v1h-2v-1h-6v-1h-1v1h-10v-1h-1v1h-2v1h-1v-2h-1v1h-3v-1h-2v2h-2v-1h-6v-1h-2v1h-1v-1h-1v1h-4v-1h-2v1h-1v1h-2v1h-1v-1h-1v-1h-3v-1h-1v1h-1v1h-1v-1h-4v-1h-1v2h-1v4h-1v-5h-2v-1h-1v1h-4v-1h-1v1h-5v-1h-1v1h-1v1h-1v-1h-2v-1h-1v1h-9v-1h-1v1h-3v1h-1v-1h-2v-1h-1v1h-4v-1h-2v1h-4v2h-1v-2h-10v1h-1v-1h-5v1h-1v-2h-1v1h-8v-1h-1v1h-12v-1h-1v1h-5v-1h-1v1h-4v-1h-1v1h-4v-1h-1v1h-1v-1h-1v1h-3v-1h-1v1h-3v-1h-1v1h-7v-1h-1v1h-1v-1h-2v1h-1v-1h-1v1h-2v-1h-1v1h-8v1h-1v-1h-3v1h-1v-1h-1v-1h-1v1h-6v-1h-1v1h-1v-1h-1v1h-4v1h-1v-1h-5v1h-1v-1h-5v-1h-1v2h-1v-1h-3v-1h-1v1h-13v1h-1v-1h-3v1h-1v-2h-1v1h-2v-1h-1v1h-1v-1h-1v1h-3v-1h-1v1h-10v-1h-1v1h-6v-1h-1v1h-6v-1h-1v1h-4v1h-1v-1h-6v-1h-1v1h-7v-1h-1v1h-4v-1h-1v1h-3v1h-1v-1h-3v-1h-1v1h-3v-1h-1v1h-13v-1h-1v3h-1v-2h-3v-1h-1v1h-1v-1h-3v1h-5v-1h-1v1h-1v-1h-1v1h-1v-1h-1v1h-6v-1h-1v1h-4v1h-1v-1h-4v1h-1v-1h-3v2h-1v-3h-1v1h-4v1h-1v-1h-1v-1h-2v1h-1v-1h-1v1h-1v-1h-1v1h-17v-1h-1v1h-1v-1h-2v1h-1v1h-1v-1h-1v1h-1v-1h-3v-1h-2v2h-1v-1h-1v-1h-1v1h-5v-1h-1v1h-2v1h-1v-1h-5v-1h-1v1h-6v-1h-1v1h-1v-1h-1v1h-2v-1h-1v1h-1v-1h-1v1h-4v-1h-1v3h-1v-2h-2v-1h-1v2h-1v-1h-6v-1h-1ZM277 548h1v-2h1v1h10v1h1v-1h4v1h1v-3h1v2h8v-1h1v1h6v1h1v-1h13v1h1v-1h6v-1h1v1h1v1h2v-1h3v1h1v-1h2v1h1v-1h6v-1h1v1h1v1h1v-1h13v-1h1v1h1v-1h1v1h10v-1h1v1h1v1h1v-1h3v-1h1v1h3v-2h1v2h5v-1h1v1h14v1h1v-1h6v-1h1v1h11v-1h1v1h1v1h1v-1h1v1h1v-1h2v1h1v-2h1v1h17v1h1v-1h10v1h1v-1h1v-1h1v1h7v-1h1v1h8v1h1v-3h1v3h1v-1h3v-1h1v1h6v1h1v-1h3v-2h1v2h17v-1h1v1h10v1h1v-1h6v-1h1v1h5v-2h1v1h1v1h4v-1h1v1h1v1h1v-1h23v1h1v-1h10v1h1v-1h10v1h1v-1h5v-1h1v1h9v1h1v-1h13v1h1v-1h3v1h2v-1h3v1h1v-1h6v1h1v-1h11v-1h1v1h3v-1h1v2h1v-1h4v1h1v-1h4v1h1v-1h2v1h1v-1h14v1h1v-1h7v1h1v-1h7v1h2v-1h3v-1h2v-1h2v1h2v2h1v-1h7v1h1v-1h4v1h1v-1h1v1h1v-1h14v-1h3v-1h1v1h3v1h14v1h1v-1h14v-1h1v1h2v1h1v-1h7v1h1v-1h3v1h1v-1h2v1h1v-1h9v1h1v-1h2v1h1v-1h1v-1h1v1h4v1h1v-1h2v-6h1v6h5v1h1v-1h8v-1h1v1h4v1h2v-1h6v-2h1v2h2v-1h1v1h3v1h1v-1h10v1h1v-1h2v-1h1v1h1v1h1v-1h19v-5h1v5h4v1h1v-1h4v1h1v-1h4v1h1v-2h1v1h5v1h1v-1h8v-1h2v-1h2v1h3v1h1v1h1v-1h2v1h1v-1h14v1h1v-1h3v-1h1v1h2v1h1v-1h5v1h1v-1h6v1h1v-1h7v1h1v-1h1v1h1v-1h9v1h1v-1h7v1h1v-1h3v1h1v-1h8v1h2v-1h1v1h1v-1h8v1h1v-1h7v-1h1v1h3v1h1v-1h1v1h1v-1h5v1h1v-3h1v2h1v1h3v-1h1v1h1v-1h1v1h1v-1h3v1h1v-1h12v1h2v-1h4v-1h1v1h4v-2h1v2h2v1h1v-1h7v1h1v-1h4v1h1v-1h5v1h1v-1h5v1h1v-1h12v-1h1v1h4v1h1v-1h12v-1h1v1h3v1h1v-2h1v1h2v1h1v-1h19v-1h1v1h4v1h1v-1h14v-1h1v1h10v1h1v-1h4v1h2v-1h13v-1h1v1h2v1h2v-1h3v1h1v-1h2v1h1v-1h3v1h1v-1h2v-1h1v1h1v1h1v-1h18v-1h1v2h1v-1h7v1h1v-1h1v1h1v-1h11v1h1v-1h1v-1h1v1h10v-1h1v1h11v-1h1v1h1v1h1v-1h1v-2h1v2h4v1h1v-1h5v1h2v-1h1v1h1v-1h16v-1h1v1h3v-2h1v2h4v1h1v-1h3v1h1v-1h7v1h1v-1h10v1h1v-1h1v-1h1v1h9v-1h1v1h5v1h2v-1h10V550h-1v1h-12v-1h-1v1h-1v-1h-3v1h-4v-1h-1v1h-5v-1h-2v1h-10v-1h-1v1h-2v-1h-1v1h-4v-1h-2v1h-6v1h-1v-1h-1v1h-1v-2h-1v1h-1v-1h-1v1h-6v-1h-1v1h-2v-1h-1v1h-15v-1h-1v1h-2v1h-1v-2h-1v1h-2v-1h-1v1h-1v-1h-1v1h-9v-1h-1v1h-4v-1h-1v1h-1v1h-1v-2h-1v1h-1v-1h-1v1h-5v-1h-1v1h-3v-1h-1v1h-2v-1h-1v1h-3v-1h-1v1h-18v-1h-1v1h-1v-1h-1v1h-6v-1h-1v1h-7v-1h-1v1h-1v-1h-1v1h-5v-1h-1v1h-3v1h-1v-2h-1v1h-4v-1h-1v1h-6v-1h-1v1h-1v-1h-1v1h-3v-1h-1v1h-8v-1h-1v1h-10v-1h-1v2h-1v-1h-11v-1h-1v1h-2v-1h-1v1h-2v-1h-1v1h-1v-1h-1v1h-1v-1h-1v1h-21v-1h-1v1h-8v-1h-1v1h-8v-1h-1v1h-12v-1h-3v1h-1v1h-1v-1h-2v-1h-1v1h-4v-1h-1v1h-5v-1h-3v1h-3v2h-1v-2h-4v-1h-2v1h-4v2h-1v-2h-9v-1h-1v1h-1v-1h-1v1h-2v-1h-2v1h-1v2h-1v-2h-3v-1h-2v1h-4v-1h-1v1h-1v-1h-2v1h-2v-1h-1v2h-1v-2h-1v1h-1v1h-1v-1h-1v-1h-1v1h-3v-1h-1v1h-3v2h-1v-2h-1v2h-1v-2h-1v1h-1v-2h-2v1h-8v-1h-1v1h-19v-1h-2v1h-6v-1h-1v1h-2v-1h-1v1h-1v-1h-1v1h-8v-1h-1v1h-1v1h-1v-1h-3v-1h-2v1h-2v-1h-2v1h-5v-1h-1v1h-3v-1h-1v1h-1v-1h-1v2h-1v-1h-2v-1h-2v1h-3v1h-1v-1h-2v1h-1v-1h-1v2h-2v-1h-2v-1h-4v-1h-3v1h-1v-1h-1v2h-1v-1h-5v-1h-1v1h-1v-1h-1v1h-1v-1h-2v1h-1v-1h-2v1h-1v1h-1v-1h-3v-1h-1v2h-1v4h-1v-5h-3v-1h-2v1h-15v-1h-1v1h-7v-1h-1v1h-5v-1h-1v1h-12v-1h-2v1h-3v-1h-1v1h-5v-1h-3v1h-9v6h-1v-6h-2v-1h-2v2h-1v-1h-1v1h-1v-1h-2v-1h-1v1h-11v-1h-2v1h-2v2h-1v-3h-1v1h-1v1h-1v-2h-1v1h-3v-1h-2v1h-4v-1h-1v1h-9v-1h-1v1h-1v-1h-1v1h-2v-1h-1v1h-3v-1h-1v1h-3v-1h-1v1h-7v-1h-1v1h-1v1h-1v1h-1v-1h-2v-1h-5v-1h-1v1h-5v-1h-1v1h-6v-1h-1v1h-7v-1h-1v1h-1v-1h-1v1h-1v1h-2v-2h-1v2h-1v1h-1v-1h-2v-2h-1v1h-4v-1h-3v1h-9v-1h-1v1h-1v-1h-1v1h-1v2h-1v-3h-3v1h-1v1h-1v-1h-5v-1h-2v1h-1v-1h-2v1h-3v-1h-1v1h-2v1h-1v-2h-1v1h-1v-1h-1v1h-1v-1h-1v1h-7v-1h-1v1h-1v-1h-1v1h-3v-1h-1v1h-1v1h-1v-1h-3v1h-1v-1h-2v-1h-1v1h-3v-1h-1v1h-10v-1h-1v3h-1v-2h-3v-1h-1v1h-8v-1h-1v1h-1v-1h-1v1h-1v-1h-1v1h-5v2h-1v-2h-1v-1h-1v1h-9v-1h-1v1h-1v1h-1v-1h-3v-1h-1v1h-2v-1h-1v1h-1v-1h-1v1h-3v-1h-1v1h-3v-1h-1v1h-2v1h-1v-1h-6v-1h-1v1h-1v-1h-1v1h-2v-1h-1v1h-1v-1h-2v1h-3v-1h-1v1h-6v-1h-1v1h-1v-1h-1v1h-2v-1h-1v1h-1v1h-1v-1h-3v1h-1v-2h-1v1h-5v-1h-1v1h-10v-1h-1v1h-2v-1h-1v1h-2v-1h-1v1h-8v-1h-1v2h-1v-1h-3v-1h-1v1h-1v-1h-1v1h-5v-1h-2v1h-5v-1h-1v1h-7v-1h-1v1h-3v-1h-1v1h-11v-1h-2v1h-3v-1h-1v1h-4v-1h-1v1h-7v-1h-1v1h-8v-1h-1v1h-7v-1h-1v1h-3v-1h-1v1h-7v-1h-1v1h-3v-1h-1v1h-3v-1h-1v1h-4v-1h-1v2h-1v-1h-1v-1h-2v1h-1v-1h-1v1h-6v1h-1v-1h-2v-1h-1v1h-11v-1h-1v1h-7v-1h-1v1h-1v-1h-1v1h-8v2h-1v-2h-4v-1h-1v1h-6v-1h-1v1h-4v-1h-1v1h-6v1h-1v-1h-8v1h-1v-1h-2v1h-2v-1h-1v-1h-1v1h-2v2h-1v-3h-1v1h-17v-1h-1v1h-2v-1h-1v1h-2ZM277 577h1v1h1v-1h4v-2h1v3h2v-1h9v1h1v-1h12v1h1v-1h13v1h2v-1h7v-2h1v2h8v1h1v-1h4v1h2v-1h1v1h1v-1h4v-1h1v1h2v1h1v-1h5v1h1v-1h8v1h1v-1h12v1h1v-1h1v1h1v-1h9v1h1v-1h5v-1h1v1h4v1h1v-1h1v-1h1v1h5v1h1v-1h5v1h1v-1h2v1h1v-1h1v1h2v-2h1v1h7v1h1v-1h3v-1h1v1h3v1h1v-1h10v1h1v-1h1v1h1v-1h15v1h1v-3h1v2h3v1h3v-1h9v1h1v-1h2v-1h1v1h1v1h3v-1h27v-1h1v1h13v-1h1v1h4v1h1v-1h3v1h1v-1h6v-2h1v2h15v-1h1v2h1v-1h3v1h1v-1h3v-1h1v1h17v1h1v-1h5v1h1v-1h5v-1h1v2h1v-1h21v-1h1v-1h1v-1h1v1h1v1h1v2h1v-1h8v1h1v-1h4v1h1v-1h4v1h1v-1h9v1h1v-1h2v1h2v-2h1v1h3v1h2v-1h4v1h1v-1h1v-1h1v1h9v1h1v-1h2v1h2v-1h6v-1h1v1h5v1h2v-1h13v-1h1v1h8v1h1v-1h7v-1h1v1h3v1h1v-1h1v1h1v-1h2v1h1v-1h2v1h1v-1h4v1h1v-1h5v1h1v-1h1v-1h1v1h2v-2h1v2h2v1h1v-1h1v1h1v-1h3v1h1v-1h10v1h1v-1h2v-1h1v1h23v1h2v-1h13v-1h1v1h1v1h1v-1h8v1h1v-1h1v1h2v-1h11v1h1v-1h10v-1h1v1h7v-2h1v2h4v1h1v-1h1v-2h1v2h1v1h1v-1h21v1h1v-1h4v-1h1v2h1v-1h9v1h1v-1h2v-1h1v1h1v1h2v-2h1v2h1v-1h12v1h1v-1h27v-1h1v1h10v1h1v-1h37v1h1v-1h6v-2h1v2h11v-1h1v2h1v-1h1v1h1v-1h8v1h1v-1h13v-2h1v2h13v1h1v-1h9v1h2v-1h3v1h1v-1h2v1h1v-1h1v1h1v-1h3v1h1v-1h7v1h1v-1h3v-1h1v1h2v-2h1v2h8v1h2v-1h1v1h1v-1h1v1h1v-1h10v-1h1v1h6v1h1v-1h1v-2h1v2h2v1h2v-1h2v1h1v-1h8v1h1v-1h8v1h1v-1h10v1h2v-1h3v-2h1v2h8v1h1v-1h2v1h1v-1h1v1h1v-1h4v-1h1v1h9v-1h1v1h2v-2h1v2h8v-1h1v2h1v-1h7v1h2v-1h1v-1h1v1h2v1h1v-1h7v1h1v-1h15v-1h1v1h15v1h1v-1h15v1h1v-1h4v1h1v-1h1v-1h1v1h6v1h1v-1h1v1h1v-1h1v1h1v-1h1v1h1v-1h10v1h1v-1h28v-1h1v1h16v1h2v-1h15V581h-4v-1h-2v3h-1v-2h-6v-1h-1v1h-8v-1h-1v1h-6v1h-1v-1h-5v1h-1v-1h-2v-1h-1v1h-1v-1h-2v1h-1v-1h-1v1h-4v-1h-1v1h-2v-1h-2v1h-10v1h-1v-1h-3v-1h-1v1h-1v-1h-1v1h-3v-1h-3v1h-2v-1h-1v1h-2v-1h-1v1h-3v-1h-1v2h-1v-1h-9v-1h-1v1h-5v-1h-1v1h-4v1h-1v-1h-3v1h-1v-1h-7v-1h-1v3h-1v-1h-1v-1h-4v-1h-1v1h-1v-1h-1v1h-3v-1h-1v1h-10v-1h-1v1h-4v-1h-1v1h-2v-1h-1v1h-4v-1h-2v1h-4v-1h-2v1h-3v-1h-1v2h-1v-1h-4v-1h-1v1h-3v-1h-2v2h-1v-1h-2v-1h-1v1h-2v-1h-1v1h-4v-1h-1v1h-1v-1h-1v1h-2v-1h-1v1h-1v-1h-1v1h-12v-1h-1v1h-7v-1h-1v1h-1v1h-1v-1h-6v-1h-2v1h-2v-1h-1v1h-7v1h-1v-1h-5v-1h-1v1h-2v-1h-1v1h-9v-1h-1v1h-4v-1h-1v1h-3v1h-1v-1h-8v-1h-1v1h-2v-1h-1v1h-1v-1h-1v1h-3v-1h-1v1h-3v1h-1v-1h-2v-1h-1v1h-3v-1h-2v1h-8v-1h-2v1h-2v-1h-1v1h-4v1h-1v-2h-1v1h-1v-1h-1v1h-1v1h-1v-1h-1v-1h-2v2h-1v-1h-9v-1h-1v1h-5v-1h-2v1h-6v-1h-1v1h-1v-1h-1v1h-2v-1h-1v1h-5v-1h-1v1h-9v-1h-1v1h-2v1h-1v-1h-1v-1h-1v1h-4v-1h-2v1h-8v-1h-1v1h-1v1h-2v-1h-2v-1h-1v1h-8v2h-1v-2h-5v1h-1v-2h-1v1h-5v1h-1v-1h-5v-1h-2v1h-5v-1h-1v1h-1v-1h-2v1h-1v-1h-1v1h-1v1h-1v-1h-1v-1h-1v1h-2v-1h-1v1h-6v-1h-1v1h-9v-1h-1v1h-2v-1h-1v1h-9v-1h-1v1h-2v-1h-2v1h-4v-1h-1v1h-1v-1h-3v1h-5v-1h-1v1h-1v-1h-2v1h-2v-1h-1v1h-2v-1h-2v1h-5v-1h-1v1h-3v-1h-1v1h-1v1h-1v-1h-6v-1h-1v1h-1v-1h-1v1h-9v-1h-1v1h-7v-1h-1v1h-5v-1h-1v1h-1v-1h-1v1h-1v-1h-1v1h-12v-1h-1v1h-5v-1h-1v1h-4v-1h-1v1h-4v-1h-1v1h-1v-1h-1v1h-6v1h-1v-1h-3v-1h-1v1h-4v1h-1v-1h-13v-1h-2v1h-1v-1h-1v1h-2v1h-1v-1h-3v1h-2v-2h-1v1h-6v1h-1v-1h-4v-1h-1v1h-2v-1h-1v1h-2v-1h-1v1h-1v-1h-2v2h-1v-1h-7v-1h-1v2h-1v-1h-1v2h-1v-3h-1v1h-3v-1h-1v1h-2v-1h-1v1h-8v-1h-1v1h-3v1h-1v-2h-1v1h-1v-1h-1v1h-2v-1h-1v1h-6v-1h-1v1h-6v-1h-1v1h-3v-1h-2v1h-4v-1h-1v1h-4v-1h-1v1h-3v1h-1v-2h-2v1h-1v-1h-1v1h-2v2h-1v-2h-6v-1h-1v1h-1v-1h-2v1h-4v2h-1v-3h-2v1h-1v2h-1v-2h-1v-1h-1v1h-4v-1h-1v1h-2v-1h-3v1h-3v-1h-1v1h-5v1h-1v2h-2v-1h-1v-1h-1v-1h-1v1h-1v-2h-2v1h-5v1h-1v-1h-29v-1h-1v1h-3v-1h-1v1h-1v-1h-2v1h-1v2h-1v-2h-2v-1h-1v1h-13v-1h-1v1h-1v-1h-2v1h-3v1h-1v1h-1v-2h-2v1h-1v-1h-3v-1h-1v1h-1v-1h-1v1h-2v-1h-1v1h-3v-1h-1v1h-4v1h-1v-2h-1v1h-1v-1h-1v1h-3v2h-1v-2h-13v-1h-1v1h-6v-1h-2v1h-3v1h-1v-1h-2v-1h-1v1h-2v-1h-1v1h-9v2h-1v-2h-10v-1h-1v1h-2v-1h-1v1h-1v1h-1v-1h-4v-1h-2v1h-5v-1h-1v1h-1v-1h-2v1h-1v-1h-1v1h-1v-1h-1v3h-1v-1h-1v-1h-1v-1h-2v1h-1v-1h-2v1h-6v2h-1v-2h-4v-1h-2v1h-2v-1h-1v1h-3v2h-1v-2h-5v-1h-1v1h-8v-1h-1v1h-10v-1h-1v1h-5v-1h-1v1h-3v-1h-1v1h-2v-1h-1v1h-7v-1h-1v1h-1v-1h-3v1h-10v-1h-1v1h-11v1h-1v-1h-1v-1h-1v1h-6v-1h-1v1h-5v-1h-2v1h-4v-1h-1v1h-3v-1h-1v1h-1v-1h-2v1h-4v-1h-1v1h-14v-1h-1v1h-1v-1h-1v1h-3v-1h-1v1h-1v-1h-1v1h-4v-1h-1v1h-2v1h-1v-1h-2v-1h-2v1h-3v-1h-1v1h-3ZM277 607h3v1h1v-1h6v1h1v-1h16v1h2v-1h1v1h2v-1h3v1h1v-1h5v-1h1v2h1v-1h2v1h1v-1h1v1h1v-1h3v1h1v-1h2v1h1v-1h2v1h1v-1h4v1h1v-1h1v1h1v-1h4v1h1v-1h6v-1h1v1h2v1h1v-3h1v2h13v-1h2v1h5v-1h1v1h15v1h1v-2h1v1h5v-1h1v1h4v1h1v-1h1v-5h1v5h3v1h1v-2h6v-1h2v1h1v-1h2v1h5v2h1v-2h1v1h3v1h1v-1h5v1h1v-1h3v1h1v-1h2v-1h1v1h6v1h1v-1h3v1h1v-1h8v-1h1v1h5v1h1v-2h1v1h1v1h1v-1h6v-1h1v1h3v-1h1v1h9v1h1v-1h3v1h1v-1h8v-2h1v2h21v1h1v-1h2v1h1v-1h4v1h1v-1h3v1h1v-1h3v1h1v-1h2v-1h1v1h3v1h1v-1h3v1h1v-1h2v1h1v-1h11v-1h1v2h1v-1h1v1h1v-1h5v1h1v-1h8v-1h1v1h22v1h1v-1h1v1h1v-2h1v1h19v1h1v-1h11v1h1v-2h1v2h1v-2h1v1h15v-2h1v3h1v-1h7v-1h1v-1h1v1h1v1h1v1h1v-1h1v1h1v-1h2v1h1v-1h17v1h1v-1h3v1h1v-1h7v-1h1v1h3v1h1v-1h12v1h2v-1h10v-1h1v2h2v-1h5v-1h1v1h3v-1h1v1h4v1h2v-1h6v1h2v-1h10v1h1v-1h3v1h1v-1h2v1h1v-1h11v1h1v-1h7v1h1v-1h29v-1h1v1h3v1h1v-1h3v1h1v-1h4v1h1v-1h9v1h1v-1h2v-1h1v1h7v1h1v-1h1v1h1v-1h1v1h1v-1h12v-2h1v2h14v1h1v-1h5v1h1v-1h8v-1h1v1h13v1h1v-1h1v1h1v-1h3v-1h1v1h2v1h1v-1h4v1h1v-1h3v1h1v-1h2v1h1v-1h3v1h1v-1h11v-1h1v1h1v1h1v-1h1v1h1v-1h2v1h1v-1h2v1h1v-1h7v-1h1v1h9v1h1v-1h3v1h1v-1h1v1h1v-1h5v1h1v-1h3v1h1v-1h3v1h1v-1h5v1h1v-1h5v1h1v-1h3v1h1v-1h3v-1h1v1h2v1h1v-1h1v-1h1v1h4v-1h1v1h6v1h1v-1h2v1h1v-1h4v-2h1v2h3v1h1v-1h9v-2h1v2h2v1h1v-1h1v1h1v-1h2v1h1v-1h1v-1h1v1h8v1h1v-1h4v1h2v-1h2v-2h1v2h1v1h1v-1h6v1h1v-2h1v1h7v1h1v-1h2v1h1v-1h4v1h1v-1h15v1h1v-1h6v-1h1v1h8v1h1v-1h2v-1h1v1h17v-1h1v1h4v-1h1v1h1v1h1v-1h4v-1h1v1h4v1h1v-1h2v1h1v-1h7v1h1v-1h7v-1h1v1h7v1h1v-1h3v1h1v-1h3v1h2v-2h1v1h7v1h2v-1h1v1h1v-1h2v1h3v-1h9v1h2v-1h12v1h1v-1h8v1h1v-1h14v1h2v-1h1v1h1v-2h1v1h5v1h1v-1h8v-1h1v1h11v1h1v-1h2v1h2v-1h1v-1h1v1h18v1h1v-1h1v1h1v-1h5v1h1v-1h29v1h1v-1h1v1h1v-1h1V611h-3v-1h-3v1h-5v-1h-1v1h-1v1h-1v-2h-2v1h-2v1h-1v-2h-1v1h-1v-1h-1v1h-1v2h-1v-2h-11v1h-1v-2h-2v1h-2v-1h-1v1h-1v-1h-1v1h-5v-1h-1v1h-8v1h-1v-1h-4v-1h-1v1h-3v-1h-1v1h-6v-1h-2v1h-1v-1h-1v1h-2v-1h-1v1h-4v-1h-1v1h-1v1h-1v-1h-1v1h-1v-1h-4v-1h-2v1h-2v-1h-1v1h-2v1h-1v-2h-1v1h-10v-1h-1v1h-1v-1h-1v1h-2v1h-1v-2h-1v1h-1v1h-1v-1h-5v-1h-1v1h-6v-1h-1v1h-4v-1h-1v1h-3v1h-1v-1h-1v-1h-1v1h-7v1h-1v-1h-9v-1h-1v1h-5v-1h-1v1h-8v-1h-1v1h-5v-1h-1v1h-1v-1h-1v1h-3v-1h-1v1h-10v-1h-1v1h-1v-1h-2v1h-1v1h-1v-1h-6v-1h-1v1h-10v-1h-2v1h-27v-1h-1v1h-2v-1h-1v1h-3v-1h-2v1h-3v-1h-1v1h-8v-1h-2v1h-5v-1h-1v1h-4v-1h-1v1h-6v-1h-1v1h-17v-1h-1v1h-20v-1h-2v1h-8v-1h-1v1h-1v1h-1v-1h-8v1h-1v-1h-6v-1h-1v1h-2v-1h-2v1h-3v-1h-1v1h-2v-1h-1v1h-2v-1h-1v1h-9v-1h-1v1h-2v1h-1v-2h-1v1h-2v-1h-1v1h-1v-1h-1v1h-2v-1h-2v1h-2v-1h-1v1h-4v1h-1v-1h-6v-1h-1v1h-13v-1h-1v1h-1v-1h-1v1h-1v-1h-5v1h-13v-1h-1v1h-2v1h-1v-1h-18v-1h-1v1h-1v-1h-1v1h-2v1h-1v-1h-1v-1h-1v1h-5v1h-1v-1h-12v1h-1v-1h-11v-1h-1v1h-3v-1h-1v1h-5v-1h-1v1h-4v-1h-1v1h-1v1h-1v-1h-2v-1h-2v1h-11v-1h-1v1h-3v-1h-2v1h-7v1h-1v-1h-6v-1h-2v1h-8v-1h-1v1h-2v-1h-2v1h-4v-1h-1v1h-4v2h-1v-3h-2v2h-1v-1h-7v-1h-1v1h-2v-1h-2v1h-2v-1h-1v1h-4v-1h-3v1h-2v-1h-1v1h-4v-1h-1v3h-1v-2h-9v1h-1v-1h-2v-1h-1v1h-3v1h-1v-1h-2v-1h-1v1h-4v-1h-1v1h-3v1h-1v-1h-9v-1h-1v1h-4v1h-1v-1h-1v-1h-1v1h-1v-1h-2v2h-1v-1h-4v1h-1v-1h-2v1h-1v-1h-2v1h-2v-1h-3v-1h-1v1h-8v-1h-1v1h-3v1h-1v-2h-1v1h-3v1h-1v-1h-3v-1h-1v1h-2v-1h-1v1h-1v1h-1v-2h-1v1h-3v-1h-1v1h-3v-1h-1v1h-2v1h-1v-1h-6v-1h-1v1h-2v-1h-1v1h-4v-1h-1v1h-3v-1h-2v1h-1v-1h-1v1h-8v-1h-1v1h-2v-1h-1v1h-7v-1h-2v1h-1v1h-1v-1h-3v-1h-1v1h-1v-1h-1v1h-1v-1h-1v1h-6v-1h-2v1h-1v1h-1v-1h-8v-1h-1v1h-1v-1h-1v1h-4v-1h-1v1h-2v-1h-1v1h-2v2h-1v-2h-6v-1h-2v1h-1v-1h-1v1h-12v-1h-1v1h-2v-1h-3v1h-6v1h-1v-1h-5v-1h-1v1h-9v-1h-1v1h-3v-1h-1v1h-3v-1h-1v1h-2v1h-1v-1h-2v-1h-2v1h-2v-1h-1v1h-3v-1h-1v1h-11v-1h-1v1h-2v-1h-1v1h-2v-1h-1v1h-3v-1h-1v1h-6v1h-1v-1h-2v-1h-2v1h-3v-1h-1v1h-4v-1h-2v1h-1v1h-1v-1h-16v1h-1v-1h-4v-1h-3v1h-4v-1h-1v1h-2v-1h-2v1h-5v-1h-1v1h-2v-1h-1v1h-4v1h-6v1h-1v-1h-1v1h-1v-1h-3v1h-1v-1h-4v-1h-3v6h-1v-6h-3v-1h-1v1h-1v-1h-1v1h-1v1h-1v-2h-1v1h-2v-1h-1v1h-2v-1h-1v1h-3v-1h-1v1h-4v1h-2v-2h-1v1h-6v-1h-2v1h-1v-1h-3v1h-5v-1h-1v1h-2v-1h-1v1h-1v-1h-1v1h-6v-1h-1v1h-1v-1h-2v1h-1v-1h-2v1h-4v-1h-1v1h-6v-1h-1v1h-2v-1h-1v1h-1v-1h-1v1h-2v-1h-1v1h-6v-1h-1v1h-14v-1h-1v1h-1v1h-1v-1h-3v2h-1v-2h-10v-1h-1v1h-1v1h-1v-1h-3v-1h-1v1h-4ZM277 638h7v1h1v-1h7v1h1v-1h8v1h1v-1h5v1h1v-2h1v1h3v1h1v-1h3v-1h1v1h18v1h1v-1h3v1h2v-1h2v1h1v-1h17v1h1v-1h1v1h1v-2h1v1h2v1h1v-1h10v1h1v-1h9v-1h1v2h1v-1h2v1h2v-1h1v-2h1v3h1v-1h7v1h2v-1h12v1h2v-1h2v1h1v-1h17v1h1v-1h12v1h1v-1h11v-1h1v1h3v1h1v-1h10v1h1v-1h27v1h2v-1h1v1h2v-1h8v-2h1v2h1v1h1v-1h2v1h1v-1h2v-1h1v1h1v1h1v-1h5v1h2v-1h7v1h1v-1h3v1h1v-1h5v-2h1v2h1v1h1v-1h5v1h1v-1h12v1h1v-1h4v1h1v-1h2v1h1v-1h15v-1h1v1h6v1h1v-1h1v1h1v-1h4v-1h1v1h2v1h1v-1h7v1h1v-1h3v1h1v-1h1v1h1v-1h15v-1h1v1h11v1h1v-1h5v1h1v-1h3v-1h1v1h1v1h1v-1h11v1h1v-1h3v1h1v-1h1v1h1v-1h4v1h1v-1h11v1h1v-1h8v1h1v-1h3v1h2v-1h1v-1h1v1h4v1h1v-1h5v1h1v-1h5v1h1v-2h1v1h5v1h1v-1h6v1h1v-1h1v1h1v-1h4v1h1v-1h9v1h1v-1h3v-1h1v1h11v1h1v-1h4v1h1v-1h2v1h1v-1h2v1h1v-1h10v-2h1v2h2v-1h1v1h1v-2h1v3h1v-1h3v1h1v-2h1v1h13v1h1v-1h2v1h1v-1h5v1h1v-1h4v1h2v-1h2v1h1v-1h1v-1h1v1h8v-1h1v1h3v1h1v-1h6v1h1v-1h8v-1h1v1h4v1h1v-1h9v1h1v-2h1v1h5v1h1v-1h7v-1h1v1h5v-1h1v2h1v-2h1v1h4v1h1v-1h3v1h3v-1h2v1h1v-1h10v1h1v-1h1v1h1v-1h2v1h1v-1h2v1h1v-2h1v1h1v1h1v-1h2v1h1v-1h5v-1h1v1h2v1h1v-1h3v-1h1v1h4v1h1v-1h15v-1h1v1h1v1h1v-1h11v1h1v-1h13v1h1v-2h1v1h8v-1h1v1h5v1h1v-1h1v1h1v-1h1v1h1v-1h1v-1h1v1h9v1h1v-1h4v1h1v-1h12v1h2v-1h9v-1h1v1h8v1h1v-1h5v1h2v-1h3v1h1v-1h1v-1h1v1h2v1h1v-1h5v1h1v-1h5v1h1v-1h14v1h1v-1h4v-1h1v-1h1v3h1v-1h2v1h1v-1h7v1h1v-1h8v1h1v-1h7v-2h1v2h1v-2h1v2h8v1h1v-1h1v-1h1v1h10v1h1v-1h11v1h1v-1h14v1h1v-1h4v1h1v-1h4v-1h1v1h1v-1h1v1h5v1h1v-1h3v1h2v-1h5v1h1v-1h4v1h1v-1h16v1h1v-1h4v1h1v-1h5v-1h1v1h1v-1h1v1h5v-1h1v1h5v-1h1v1h12v1h1v-1h4v1h1v-1h9v1h1v-1h10v1h1v-1h1v1h1v-1h5v1h1v-1h4v1h1v-1h2v1h1v-1h1v1h1v-1h25v1h1v-1h1v-1h1v1h5v-1h1v2h1v-1h3v1h1v-1h2v1h1v-1h4v1h1V642h-1v-1h-2v1h-1v-1h-1v1h-2v-1h-3v1h-5v-1h-1v1h-4v-1h-1v1h-3v-1h-1v1h-4v-1h-1v1h-3v-1h-1v1h-5v-1h-2v1h-4v-1h-1v1h-2v2h-1v-2h-4v-1h-1v1h-15v-1h-1v1h-5v-1h-1v1h-1v-1h-1v1h-1v-1h-1v1h-1v-1h-1v1h-1v-1h-1v1h-16v-1h-1v1h-1v-1h-1v1h-2v-1h-1v1h-4v-1h-1v1h-8v-1h-1v1h-4v-1h-1v1h-6v-1h-1v1h-2v-1h-1v1h-4v-1h-1v1h-1v-1h-2v1h-1v1h-1v-1h-1v1h-2v-1h-1v-1h-2v1h-1v-1h-3v1h-1v1h-1v-1h-4v-1h-1v1h-6v1h-1v-1h-2v-1h-2v1h-1v2h-1v-2h-2v-1h-1v1h-1v-1h-1v1h-5v-1h-2v1h-5v-1h-2v1h-1v-1h-1v1h-6v-1h-1v1h-5v-1h-1v1h-1v2h-1v-3h-1v1h-13v1h-1v-1h-1v1h-1v-2h-1v1h-4v-1h-1v1h-1v-1h-3v1h-2v-1h-1v1h-6v-1h-1v1h-5v-1h-2v2h-1v-1h-1v-1h-1v1h-5v-1h-1v1h-3v1h-1v-1h-4v-1h-1v1h-6v-1h-1v1h-6v1h-1v-1h-3v-1h-2v3h-1v-2h-1v-1h-1v1h-6v-1h-1v1h-2v2h-1v-2h-1v1h-1v-1h-8v-1h-1v1h-4v2h-1v-2h-1v-1h-2v1h-2v-1h-1v1h-1v-1h-1v1h-4v-1h-1v1h-2v-1h-1v2h-1v-1h-5v-1h-1v1h-5v1h-1v-1h-4v-1h-1v1h-6v-1h-1v1h-4v-1h-1v2h-1v-1h-14v1h-1v-2h-1v1h-3v-1h-1v1h-1v-1h-2v1h-1v1h-1v-1h-4v-1h-1v1h-3v1h-1v-1h-2v-1h-3v1h-7v-1h-1v1h-2v1h-1v-2h-1v1h-9v1h-1v-1h-12v1h-1v-1h-5v-1h-1v1h-4v-1h-1v1h-5v-1h-1v1h-1v-1h-1v1h-3v-1h-1v1h-5v-1h-1v1h-6v-1h-1v1h-3v-1h-1v1h-6v-1h-2v1h-1v-1h-1v1h-1v-1h-1v1h-7v-1h-2v1h-5v-1h-2v1h-9v1h-1v-1h-1v1h-1v-2h-1v1h-1v-1h-1v1h-5v2h-1v-3h-1v1h-3v1h-1v-1h-8v-1h-2v1h-5v-1h-1v1h-2v-1h-1v1h-10v-1h-1v1h-1v-1h-2v1h-5v-1h-1v1h-1v-1h-1v1h-4v-1h-1v1h-10v-1h-1v2h-1v-1h-13v-1h-2v1h-2v-1h-2v1h-8v-1h-1v1h-1v-1h-1v1h-6v-1h-1v1h-4v-1h-1v1h-1v-1h-1v1h-11v1h-1v-1h-2v-1h-1v1h-1v-1h-1v1h-3v-1h-2v1h-6v1h-1v-1h-4v-1h-1v1h-9v-1h-3v1h-3v2h-1v-2h-1v-1h-1v1h-3v-1h-1v1h-2v1h-1v-2h-1v1h-1v-1h-1v1h-2v-1h-2v1h-1v-1h-1v2h-1v-1h-4v-1h-1v1h-7v-1h-1v1h-1v-1h-2v1h-1v-1h-1v1h-1v-1h-1v1h-3v-1h-1v1h-9v1h-1v-1h-4v-1h-1v1h-9v-1h-1v1h-3v-1h-1v1h-1v-1h-1v1h-2v1h-1v-1h-5v-1h-1v1h-1v-1h-1v1h-1v-1h-1v1h-1v-1h-1v1h-1v-1h-1v1h-1v1h-1v-2h-1v1h-8v-1h-3v1h-8v1h-1v-1h-11v1h-1v-1h-6v-1h-2v1h-7v1h-1v-1h-10v-1h-2v1h-3v2h-1v-2h-1v1h-1v-1h-4v1h-1v-1h-1v-1h-1v1h-3v-1h-1v1h-9v-1h-1v1h-4v-1h-1v1h-2v-1h-1v1h-4v-1h-1v1h-2v-1h-1v1h-1v1h-1v-1h-10v-1h-1v1h-5v-1h-1v1h-1v1h-2v-1h-2v-1h-2v1h-2v-1h-2v1h-1v1h-1v-1h-3v-1h-1v1h-5v-1h-1v1h-3v-1h-1v1h-2v-1h-1v1h-3v-1h-1v2h-1v-1h-3v-1h-1v1h-6v-1h-1v1h-3v-1h-2v1h-7v-1h-2v2h-1v-1h-11v-1h-1v1h-5v-1h-1v1h-1v-1h-1v1h-3v-1h-1v1h-1v-1h-1v1h-4v1h-1v-1h-13v1h-1v-1h-6v-1h-1v1h-7v-1h-1v1h-2v-1h-1v1h-3v1h-1v-2h-1v1h-2v-1h-1v1h-3v-1h-1v1h-3v1h-1v-1h-2v-1h-3v1h-2v-1h-2v1h-15v-1h-1v1h-3v1h-1v-1h-9v-1h-4v1h-1v-1h-2v1h-4v-1h-1v1h-1v-1h-1v1h-2v1h-1v-1h-3v-1h-1v1h-7v-1h-1v2h-1v-2h-1v1h-3v1h-1v-1h-2v-1h-1v1h-5ZM277 668h9v1h1v-1h1v1h1v-1h27v-1h1v1h3v-1h1v2h1v-1h9v1h1v-1h13v1h1v-1h3v1h1v-1h1v-1h1v1h1v-1h1v1h3v1h2v-1h9v1h1v-1h7v1h1v-1h4v1h2v-6h1v5h7v1h1v-1h3v-1h1v1h1v-1h1v1h2v1h1v-1h2v1h1v-1h9v-1h1v1h1v1h1v-1h4v1h1v-1h9v1h1v-1h11v1h1v-1h19v1h1v-1h13v1h1v-1h21v1h1v-1h3v-1h1v2h1v-1h17v-1h1v2h1v-1h2v1h1v-1h8v-1h1v1h3v1h1v-1h5v1h2v-1h4v-1h1v1h3v1h1v-1h4v1h1v-1h10v1h1v-1h2v-1h1v1h10v-1h1v2h1v-1h5v1h1v-1h4v1h1v-1h12v-1h1v1h2v-1h1v1h3v-1h1v1h2v1h2v-1h4v-1h1v-4h1v4h1v1h23v1h1v-1h1v-1h1v1h3v1h1v-1h4v1h1v-2h1v1h1v1h1v-1h1v1h2v-1h8v-1h1v1h20v1h1v-1h3v-1h2v1h2v-1h1v1h1v1h1v-1h7v-1h1v1h14v1h1v-1h4v-1h1v1h5v1h1v-1h2v1h1v-1h4v-1h1v1h5v1h1v-1h2v1h1v-1h7v1h1v-1h2v-1h1v1h1v1h1v-1h2v-1h1v1h4v-1h2v2h1v-1h5v1h1v-1h7v1h1v-1h6v1h1v-1h8v-2h1v2h1v1h1v-1h4v1h2v-2h1v1h6v-1h1v1h1v-1h1v1h5v-1h1v1h22v1h1v-1h1v1h1v-1h1v1h1v-2h1v2h1v-2h1v1h7v-1h1v1h2v-1h1v1h7v1h1v-2h1v2h1v-1h14v1h1v-1h2v-2h2v2h2v-1h1v1h2v-1h1v1h4v1h1v-1h1v1h2v-1h1v-1h1v1h5v1h1v-1h2v1h2v-2h1v1h4v-2h1v2h2v1h1v-1h3v-1h1v1h5v1h1v-1h3v1h2v-1h3v1h1v-1h26v-1h1v1h2v1h1v-1h4v1h2v-2h1v1h7v1h1v-1h16v1h1v-2h1v1h13v1h1v-1h2v-1h1v1h4v-1h1v1h1v1h1v-1h9v1h2v-1h4v1h1v-1h3v-1h1v1h6v1h1v-1h2v1h3v-1h2v-1h1v1h3v-1h1v1h1v1h1v-1h1v-1h1v2h2v-1h2v1h1v-1h5v1h1v-1h2v-1h1v1h2v1h1v-1h15v1h1v-1h6v-1h1v1h2v1h1v-1h1v1h1v-1h6v1h1v-1h3v1h1v-1h1v1h1v-2h1v1h6v1h1v-1h2v1h1v-1h15v1h1v-1h4v-1h1v1h1v1h1v-1h1v-1h1v1h3v1h1v-1h2v1h2v-3h1v2h21v1h2v-2h1v1h2v1h1v-1h5v1h1v-1h15v-1h2v1h11v-1h1v1h1v1h1v-1h10v1h1v-1h3v-1h1v1h8v1h1v-1h16v1h2v-1h4v-2h1v2h18v1h1v-1h1v-1h1v1h8v1h1v-1h4v1h1v-1h2v1h1v-1h1v1h2v-1h4v1h1v-3h1v2h8v1h1v-1h2v1h1v-1h8v-1h1v1h1v-1h1v1h15v1h1v-1h3v1h1v-1h1v1h1v-1h5V672h-4v-1h-1v1h-4v1h-1v-1h-1v-1h-1v1h-6v-1h-3v1h-5v-1h-1v1h-4v1h-1v-1h-11v-1h-1v1h-1v1h-2v-1h-4v-1h-1v1h-14v-1h-1v1h-2v1h-1v-1h-3v-1h-1v1h-1v-1h-1v2h-1v-1h-4v1h-1v-1h-6v1h-1v-2h-1v1h-9v-1h-2v1h-15v-1h-1v1h-2v2h-1v-2h-2v-1h-2v1h-3v-1h-1v1h-2v-1h-1v1h-7v-1h-2v1h-12v-1h-1v1h-1v-1h-2v1h-1v-1h-1v1h-2v-1h-2v1h-3v1h-1v-2h-1v1h-4v-1h-1v1h-6v1h-1v-2h-1v1h-2v1h-1v-2h-1v1h-13v-1h-2v1h-4v-1h-1v1h-5v-1h-1v1h-8v1h-1v-1h-5v-1h-1v1h-2v-1h-2v2h-1v-1h-10v-1h-1v1h-10v-1h-1v1h-4v-1h-1v1h-2v-1h-1v1h-7v1h-1v-1h-7v-1h-1v1h-10v1h-2v-1h-2v-1h-2v1h-1v1h-1v-1h-5v-1h-1v1h-2v-1h-1v1h-4v1h-1v-1h-2v1h-1v-1h-11v-1h-1v1h-4v-1h-1v1h-5v1h-1v-1h-2v-1h-1v1h-2v-1h-1v1h-1v1h-1v-1h-3v1h-1v-2h-1v1h-5v-1h-1v1h-3v1h-1v-1h-6v1h-1v-2h-1v2h-1v-1h-1v-1h-2v1h-2v-1h-1v1h-3v-1h-1v1h-5v1h-1v-1h-19v-1h-1v1h-5v-1h-1v1h-1v-1h-1v1h-8v-1h-1v1h-3v-1h-1v1h-1v1h-1v-1h-6v1h-1v-1h-6v-1h-1v1h-2v-1h-1v1h-1v-1h-1v1h-5v-1h-1v1h-4v-1h-1v1h-15v-1h-2v1h-13v-1h-1v1h-1v-1h-1v1h-1v-1h-1v1h-2v-1h-1v1h-1v-1h-1v1h-8v1h-1v-1h-1v-1h-2v1h-4v1h-1v-1h-2v-1h-1v1h-3v1h-1v-1h-3v-1h-1v1h-2v-1h-1v1h-6v2h-1v-2h-5v-1h-2v1h-2v-1h-1v1h-1v1h-1v-2h-1v1h-7v1h-1v-1h-5v1h-1v-1h-3v-1h-1v1h-1v-1h-1v1h-4v-1h-1v1h-1v-1h-1v1h-7v-1h-1v1h-15v-1h-1v1h-13v1h-1v-1h-3v-1h-1v1h-6v-1h-1v1h-6v1h-1v-1h-1v-1h-1v1h-9v1h-1v-1h-8v2h-1v-2h-5v-1h-1v1h-2v-1h-1v1h-2v1h-1v-2h-1v1h-13v-1h-1v1h-1v-1h-1v1h-6v-1h-3v1h-5v-1h-1v1h-9v-1h-1v1h-3v-1h-1v1h-6v1h-1v-1h-1v-1h-2v1h-9v-1h-2v1h-6v-1h-1v2h-1v-1h-1v-1h-2v1h-5v-1h-2v1h-2v-1h-1v1h-7v-1h-1v1h-4v1h-1v-1h-1v-1h-1v1h-9v1h-1v4h-1v-4h-1v-1h-3v-1h-2v1h-5v1h-1v-2h-1v1h-7v-1h-1v1h-2v1h-1v-1h-1v-1h-1v1h-1v2h-1v-2h-3v1h-1v-1h-1v-1h-1v1h-1v1h-1v-1h-9v-1h-3v1h-3v-1h-1v1h-1v-1h-2v1h-15v-1h-1v1h-6v-1h-1v1h-1v-1h-2v1h-2v-1h-1v1h-12v-1h-1v1h-1v1h-1v-1h-13v1h-1v-1h-2v1h-1v-1h-7v-1h-2v1h-12v-1h-1v1h-10v-1h-1v1h-3v-1h-1v1h-3v-1h-1v1h-1v1h-1v-1h-4v-1h-1v1h-4v-1h-1v1h-1v-1h-2v1h-11v1h-1v-1h-1v-1h-1v1h-5v-1h-1v1h-12v-1h-1v1h-6v-1h-1v1h-8v-1h-1v1h-2v-1h-1v2h-1v-1h-5v-1h-1v1h-3v-1h-1v1h-6v2h-1v3h-1v-5h-2v-1h-1v1h-2v1h-1v-1h-1v-1h-1v1h-2v1h-1v-1h-1v-1h-1v1h-1v-1h-1v1h-5v-1h-2v1h-2v-1h-1v1h-1v-1h-1v1h-3v-1h-2v1h-2v-1h-1v1h-2v-1h-1v1h-1v-1h-1v1h-8v1h-1v-1h-1v-1h-1v1h-7v-1h-1v1h-10v-1h-2v1h-1v1h-1v-1h-3v-1h-2v1h-2v-1h-1v1h-1v-1h-1v1h-6v1h-1v-1h-2v-1h-1v1h-2v-1h-1v1h-6v-1h-1v1h-1v-1h-1v1h-1ZM277 698h3v-1h1v1h1v1h1v-1h19v-1h1v2h1v-1h5v1h2v-1h17v1h2v-1h4v1h1v-1h2v1h1v-1h13v-2h1v2h4v1h1v-1h5v1h1v-1h2v-1h1v1h1v1h1v-1h6v1h1v-1h19v1h1v-1h3v1h1v-1h5v1h1v-1h2v-1h1v1h9v1h1v-1h8v1h1v-1h11v-1h1v2h1v-1h3v-3h1v3h1v-1h1v1h3v-1h1v2h1v-1h8v-1h1v1h1v1h1v-1h2v1h1v-1h3v1h1v-1h4v1h1v-1h2v1h1v-1h1v1h1v-1h1v-1h1v1h3v1h1v-1h6v1h1v-1h4v1h1v-1h1v1h2v-1h5v1h1v-1h17v-1h1v1h1v-1h1v1h4v1h2v-1h1v1h1v-1h3v1h2v-1h6v1h1v-1h3v1h1v-1h8v1h1v-1h1v1h1v-1h5v1h1v-1h1v-2h1v1h1v1h1v1h1v-1h6v-2h1v2h3v-1h1v2h1v-1h4v1h1v-2h1v1h2v-5h1v5h2v1h1v-1h3v1h1v-2h1v1h5v-2h1v3h1v-1h9v1h1v-1h9v1h1v-1h8v1h2v-1h9v1h1v-1h8v-1h1v1h3v1h1v-1h2v1h1v-1h9v1h1v-1h10v1h1v-3h1v2h12v1h1v-1h10v1h1v-3h1v2h3v-1h1v1h3v-1h1v1h11v1h1v-1h1v-1h1v1h1v1h3v-1h2v1h2v-1h9v-1h1v1h2v1h1v-1h4v1h2v-1h3v1h2v-1h16v-1h1v2h1v-1h4v1h1v-1h4v1h1v-2h1v1h2v-1h1v1h1v-1h1v1h4v1h1v-1h3v-1h1v1h15v1h1v-1h12v1h1v-1h2v1h1v-1h1v1h1v-1h4v1h1v-1h5v-1h1v1h4v1h1v-1h31v1h1v-1h14v1h1v-1h6v1h1v-1h2v1h1v-1h3v1h1v-1h1v-2h1v2h3v-1h1v1h16v1h1v-1h4v1h1v-1h3v-1h1v1h6v-1h1v1h3v-1h1v2h1v-1h16v-1h1v1h19v1h1v-1h6v-1h1v1h11v1h1v-1h5v1h1v-1h4v1h1v-1h1v1h1v-1h5v1h1v-1h6v1h1v-1h3v1h1v-1h5v1h1v-1h13v1h1v-1h13v-1h1v1h11v-1h1v1h2v1h1v-1h1v1h1v-1h3v-1h1v1h1v-1h1v1h11v-1h2v1h8v1h1v-1h4v-1h1v1h4v-1h1v1h2v1h1v-1h4v-2h1v2h1v1h1v-1h2v-1h1v1h18v1h1v-1h8v1h1v-1h21v1h1v-1h1v-1h1v1h20v-1h1v1h9v1h1v-1h4v-2h1v2h5v1h1v-1h9v1h1v-1h6v-2h1v2h3v1h1v-1h5v-1h1v1h10v1h1v-1h7v1h1v-1h2v1h1v-1h6v1h2v-1h10v1h1v-1h2v1h1v-1h3v1h1v-1h1v-1h1v1h4v1h1v-1h5v1h1v-1h6v1h1v-1h3v1h2v-1h2v-2h1v2h1v1h1v-1h7v-1h1v1h5v1h1v-1h1v1h1v-1h3v1h1v-1h3v-1h1v1h10v1h1v-1h5v1h1v-1h1v1h1v-1h5v1h2v-1h2V702h-1v-1h-2v1h-2v-1h-1v1h-3v1h-1v-1h-2v-1h-1v1h-13v-1h-1v1h-1v-1h-1v1h-1v-1h-1v1h-5v1h-1v-1h-2v-1h-3v1h-1v2h-1v-2h-9v-1h-1v1h-2v-1h-1v1h-1v2h-1v-2h-4v-1h-2v2h-1v-1h-3v-1h-1v1h-5v1h-1v-1h-2v-1h-2v1h-2v-1h-1v1h-1v1h-1v-2h-1v1h-2v-1h-1v1h-2v-1h-2v1h-2v-1h-1v1h-1v1h-1v-2h-2v1h-2v-1h-1v1h-4v1h-1v-1h-5v-1h-1v1h-1v-1h-1v1h-9v-1h-1v1h-2v-1h-1v1h-4v-1h-2v1h-2v-1h-1v1h-2v-1h-1v1h-4v-1h-2v1h-5v-1h-2v1h-4v1h-1v-1h-3v-1h-1v1h-3v-1h-1v1h-1v-1h-1v1h-4v-1h-1v1h-13v-1h-1v1h-1v-1h-3v1h-1v-1h-1v1h-2v-1h-1v1h-2v-1h-1v1h-4v-1h-2v1h-8v-1h-1v1h-1v2h-1v-2h-2v-1h-2v1h-9v-1h-1v1h-1v-1h-1v1h-8v-1h-1v1h-2v-1h-1v1h-2v-1h-1v1h-2v1h-1v-1h-1v-1h-1v1h-2v1h-1v-1h-1v-1h-1v1h-4v-1h-1v1h-10v-1h-2v1h-5v-1h-1v1h-1v-1h-2v1h-5v-1h-1v1h-4v-1h-1v1h-15v-1h-1v1h-2v1h-1v-1h-6v-1h-1v1h-4v-1h-1v1h-1v-1h-1v1h-2v-1h-1v1h-1v-1h-1v1h-1v1h-1v-2h-2v1h-3v1h-1v-1h-4v-1h-1v1h-11v-1h-1v1h-20v-1h-1v1h-11v-1h-2v2h-2v-1h-1v-1h-1v1h-6v-1h-1v1h-4v2h-1v-2h-9v-1h-1v1h-6v-1h-1v1h-3v-1h-1v1h-8v-1h-1v1h-9v-1h-1v1h-1v1h-1v-1h-1v-1h-1v1h-1v2h-1v-3h-1v1h-11v-1h-1v1h-4v-1h-1v1h-3v1h-1v-2h-1v1h-9v-1h-1v1h-9v-1h-1v1h-2v1h-1v-1h-10v-1h-1v1h-10v-1h-1v1h-3v-1h-1v1h-1v-1h-1v1h-6v-1h-1v1h-3v2h-1v-2h-7v-1h-2v1h-1v-1h-1v1h-15v-1h-1v1h-6v-1h-1v1h-6v1h-1v-2h-1v3h-1v-2h-4v-1h-1v1h-11v1h-1v-1h-3v-1h-1v1h-3v-1h-1v1h-6v-1h-1v1h-1v-1h-1v1h-5v1h-1v-1h-7v-1h-1v1h-2v1h-1v-1h-9v-1h-1v1h-11v-1h-1v1h-9v-1h-1v1h-6v-1h-1v1h-3v-1h-1v1h-5v1h-1v-1h-3v-1h-2v1h-6v-1h-2v2h-1v-1h-6v-1h-1v1h-17v-1h-1v1h-1v-1h-1v1h-2v-1h-1v1h-1v-1h-1v1h-2v-1h-1v1h-1v-1h-1v1h-1v-1h-1v1h-9v1h-1v-1h-4v-1h-1v1h-2v-1h-2v1h-1v-1h-1v1h-1v-1h-1v1h-1v-1h-1v1h-9v-1h-1v1h-9v-1h-1v1h-4v-1h-1v1h-4v-1h-3v1h-1v-1h-1v1h-2v-1h-1v1h-3v-1h-1v1h-5v-1h-2v1h-1v6h-1v-5h-1v-1h-2v1h-1v-1h-1v-1h-2v1h-1v-1h-1v1h-1v-1h-1v1h-1v1h-1v-1h-8v-1h-1v1h-2v-1h-1v1h-2v-1h-1v1h-9v-1h-2v1h-2v-1h-2v1h-1v1h-1v-1h-1v1h-1v-1h-2v1h-1v-1h-8v-1h-1v1h-1v-1h-1v1h-2v-1h-1v1h-2v1h-1v-1h-1v-1h-1v1h-12v-1h-1v1h-2v-1h-1v1h-2v-1h-1v1h-3v-1h-1v3h-1v-2h-1v-1h-1v1h-1v-1h-2v1h-3v1h-1v-1h-1v-1h-1v1h-1v-1h-1v1h-8v-1h-1v1h-9v1h-1v-1h-6v-1h-2v1h-2v2h-1v-2h-4v-1h-1v1h-2v-1h-1v1h-1v-1h-1v1h-1v-1h-1v4h-1v-4h-1v1h-4v-1h-1v1h-1v-1h-1v1h-1v-1h-1v1h-2v-1h-1v1h-4v-1h-1v1h-3v1h-1v-1h-5v-1h-1v1h-5v-1h-1v1h-1v1h-1v-1h-12v-1h-1v1h-5v-1h-1v1h-1v-1h-1v1h-2v-1h-1v2h-1v-1h-9v2h-1v-3h-1v1h-1v-1h-1v1h-1v-1h-1v2h-1v-1h-9v-1h-1v1h-1v-1h-1v2h-2v-2h-1v1h-4v-1h-1v1h-4v-1h-1v1h-5v1h-1v-1h-3v-1h-1v1h-4v-1h-1v1h-17v2h-1v-2h-3v-1h-1v1h-1v-1h-1v1h-3v-1h-1v1h-8v1h-1v-2h-1v1h-11ZM277 729h2v-4h1v5h1v-1h8v1h1v-1h8v1h1v-1h9v1h1v-1h14v-1h1v1h4v1h1v-1h11v1h1v-1h4v1h1v-1h20v1h1v-1h5v1h1v-1h10v1h2v-1h17v1h1v-1h22v-1h1v1h8v1h1v-1h9v1h1v-1h1v-1h1v1h13v1h1v-1h1v1h1v-1h17v1h1v-1h26v-1h1v1h1v1h2v-1h13v1h1v-1h3v1h2v-1h8v1h2v-1h5v1h1v-1h7v1h1v-1h20v-1h1v1h4v-1h1v1h16v-1h1v1h9v-2h1v1h1v1h1v-2h1v1h1v1h1v1h1v-1h10v1h1v-1h5v-1h1v2h1v-1h1v-1h1v2h1v-1h13v-1h1v1h12v1h2v-1h9v1h2v-1h8v1h1v-1h6v1h1v-1h26v1h1v-1h18v-1h1v2h1v-1h2v1h1v-1h1v-1h1v1h2v-1h1v1h6v-1h1v2h1v-1h7v1h2v-1h1v1h1v-1h11v1h1v-1h6v1h1v-1h1v1h1v-1h7v1h1v-1h29v1h1v-1h7v1h1v-1h5v-1h1v1h5v1h1v-1h3v-1h1v1h4v1h1v-1h3v1h1v-1h6v1h1v-1h2v1h1v-1h11v1h1v-1h7v1h1v-1h14v-6h1v6h5v1h1v-1h29v1h1v-1h11v1h1v-1h3v1h2v-1h4v1h1v-1h8v1h1v-1h3v1h1v-1h3v1h1v-1h1v-1h1v1h3v1h1v-1h1v1h1v-1h3v1h1v-1h2v-1h1v1h2v-1h1v1h2v1h1v-1h6v1h1v-2h1v-2h1v-1h2v-8h1v7h1v-1h1v4h1v1h1v1h5v1h1v-1h2v1h1v-1h2v1h1v-1h2v1h2v-1h1v-1h1v1h10v1h1v-1h1v-1h1v1h1v-1h1v1h3v1h1v-1h8v1h1v-1h6v-1h1v1h1v1h1v-1h2v1h1v-1h14v1h1v-1h2v1h1v-1h9v1h1v-1h4v1h1v-1h7v1h1v-1h3v1h1v-1h14v-1h1v1h5v1h1v-1h1v-1h1v1h1v-2h1v2h14v1h1v-1h4v1h1v-1h2v-1h1v1h9v-1h1v1h15v-1h1v1h4v1h1v-1h1v1h1v-1h8v1h1v-1h1v-1h1v1h19v1h1v-1h4v1h1v-1h3v1h1v-1h2v-1h1v1h9v-2h1v2h6v1h1v-1h1v1h1v-1h2v-1h1v1h15v1h1v-1h3v1h1v-3h1v3h1v-1h1v1h3v-1h2v1h1v-1h7v1h2v-1h8v1h1v-1h1v1h1v-1h5v1h2v-1h17v1h1v-1h14v-1h1v1h5v-1h1v1h3v1h1v-1h5v1h1v-1h7v1h1v-1h6v1h1v-1h2v1h1v-1h3v1h1v-1h2v-1h1v1h2v1h1v-1h3v1h1v-1h3v1h1V733h-4v-1h-1v1h-13v-1h-1v1h-11v-1h-1v1h-1v-1h-1v1h-4v-1h-1v1h-17v-1h-1v1h-3v-1h-2v1h-7v-1h-1v1h-2v-1h-1v1h-6v-1h-1v1h-3v-1h-1v1h-1v1h-1v-1h-3v-1h-1v1h-2v-1h-1v1h-1v-1h-1v1h-1v-1h-1v1h-2v1h-1v-1h-10v-1h-1v1h-3v-1h-1v1h-2v-1h-1v1h-1v-1h-2v1h-2v-1h-1v1h-12v1h-2v-1h-7v-1h-1v1h-6v-1h-1v1h-4v-1h-1v1h-1v-1h-1v2h-1v-1h-3v-1h-1v1h-7v-1h-1v1h-2v-1h-1v1h-3v-1h-1v1h-1v2h-1v-2h-4v1h-1v-1h-8v-1h-1v1h-13v1h-1v-1h-1v-1h-1v1h-4v-1h-1v1h-3v-1h-1v1h-1v-1h-2v1h-6v-1h-1v1h-3v-1h-1v1h-8v-1h-1v1h-1v1h-1v-2h-1v1h-6v-1h-1v1h-5v-1h-1v1h-4v-1h-1v1h-4v-1h-1v1h-3v-1h-1v1h-1v-1h-2v1h-1v-1h-1v1h-16v1h-1v-1h-5v1h-1v-1h-2v-1h-1v1h-2v-1h-1v1h-4v1h-1v-1h-8v-1h-1v1h-1v-1h-1v1h-10v2h-1v-2h-1v-1h-1v1h-25v-1h-1v1h-1v1h-1v-2h-1v1h-5v-1h-1v3h-1v-2h-2v-1h-1v1h-1v-1h-1v1h-3v-1h-1v1h-1v-1h-1v1h-8v2h-1v1h-1v1h-1v4h-1v-4h-1v-1h-1v-2h-2v-1h-2v-1h-2v1h-3v-1h-1v1h-4v1h-2v-1h-6v1h-2v-1h-4v-1h-1v1h-3v1h-1v-1h-3v-1h-1v1h-5v-1h-2v1h-11v1h-1v-1h-12v-1h-1v1h-2v-1h-1v1h-4v1h-1v-1h-2v-1h-1v1h-3v1h-1v-1h-1v-1h-2v1h-2v-1h-1v1h-2v-1h-1v1h-5v-1h-1v1h-3v-1h-1v1h-1v1h-1v4h-1v-4h-2v-1h-3v-1h-2v1h-7v-1h-1v1h-8v-1h-1v1h-1v-1h-2v1h-2v1h-1v-1h-3v-1h-1v1h-2v-1h-1v1h-7v-1h-1v1h-1v-1h-1v1h-10v-1h-1v1h-1v-1h-1v1h-4v-1h-1v1h-5v-1h-1v1h-2v-1h-1v1h-5v-1h-1v1h-1v-1h-1v1h-1v-1h-1v1h-1v-1h-1v1h-7v1h-1v-1h-1v-1h-1v1h-3v-1h-1v1h-5v-1h-1v1h-2v-1h-2v1h-2v1h-1v-1h-2v-1h-1v1h-8v-1h-1v1h-2v-1h-2v1h-4v-1h-1v1h-1v-1h-1v1h-4v1h-1v-1h-1v-1h-1v1h-2v-1h-1v1h-7v1h-1v-1h-1v-1h-1v1h-3v1h-1v-1h-2v-1h-1v1h-15v-1h-2v1h-2v2h-1v-1h-1v-1h-7v-1h-2v1h-1v2h-1v-2h-5v-1h-1v1h-5v-1h-1v1h-3v-1h-2v1h-3v1h-1v-1h-12v1h-1v-1h-2v1h-1v-1h-3v-1h-2v1h-5v-1h-1v1h-3v-1h-1v1h-3v2h-1v-2h-4v1h-1v-1h-1v-1h-1v1h-5v-1h-1v2h-1v-1h-5v1h-1v-1h-3v-1h-1v1h-2v-1h-1v2h-1v-1h-3v-1h-1v1h-3v-1h-4v1h-3v-1h-1v1h-1v-1h-1v1h-8v-1h-1v1h-1v-1h-1v1h-4v-1h-1v1h-10v-1h-1v1h-1v-1h-1v1h-1v-1h-1v1h-2v-1h-1v2h-1v-1h-7v-1h-1v1h-1v-1h-1v1h-10v-1h-1v1h-6v-1h-1v1h-4v-1h-1v1h-1v-1h-1v1h-5v-1h-1v1h-14v-1h-1v1h-5v-1h-1v1h-2v1h-1v-1h-3v-1h-1v1h-9v-1h-1v1h-3v-1h-1v1h-8v-1h-2v1h-4v-1h-1v1h-2v-1h-1v1h-1v1h-1v-1h-10v-1h-1v1h-1v-1h-1v1h-1v2h-1v-3h-1v1h-4v-1h-1v1h-6v-1h-1v1h-9v-1h-1v2h-1v-1h-4v1h-1v-1h-1v-1h-1v1h-2v-1h-2v1h-4v-1h-1v1h-2v-1h-1v1h-3v-1h-1v1h-2v-1h-1v3h-1v-3h-3v1h-2v-1h-2v1h-3v-1h-2v1h-2v-1h-2v1h-6v1h-1v-1h-4v-1h-1v2h-1v-2h-1v1h-6v-1h-1v1h-2v-1h-1v1h-8v-1h-1v1h-2v-1h-1v1h-1v1h-1v-1h-2v-1h-1v1h-2v-1h-1v1h-1v1h-2v-1h-2v-1h-1v1h-4v1h-1v-1h-10v-1h-1v2h-1v-2h-1v1h-1v1h-1v-1h-11v-1h-1v1h-16v2h-1v-3h-1v1h-3v4h-1v-5h-1v1h-1ZM277 760h1v-1h10v-1h1v1h3v1h1v-1h4v-1h1v1h2v1h2v-1h4v1h1v-1h9v1h1v-1h13v1h1v-1h8v-1h1v1h4v-1h1v2h1v-1h21v-1h1v1h4v1h1v-1h3v-1h1v1h6v1h1v-1h10v-1h1v1h1v-1h1v1h2v1h1v-1h10v1h1v-1h1v1h1v-1h3v1h1v-1h20v1h1v-1h6v-1h1v2h1v-1h1v1h1v-1h3v1h1v-1h3v1h1v-1h16v1h1v-1h8v1h2v-1h13v1h3v-1h7v-1h1v1h2v1h1v-1h3v1h1v-1h4v-6h1v6h1v1h4v-1h3v-1h1v2h1v-1h13v-1h1v1h3v1h1v-1h1v1h1v-1h1v1h2v-1h3v-2h1v2h11v1h1v-1h1v-1h1v1h26v1h1v-1h3v1h1v-1h7v1h1v-1h1v-1h1v2h1v-1h8v1h1v-2h1v1h16v-1h1v2h1v-1h8v-2h1v3h1v-1h6v-1h1v1h1v-1h1v1h13v1h1v-1h6v1h1v-1h8v-1h1v1h7v1h1v-1h2v1h2v-1h5v-1h1v1h7v1h1v-2h1v1h1v1h1v-1h13v1h1v-1h4v1h2v-1h1v-1h1v1h11v-1h1v1h4v1h1v-1h8v1h2v-1h2v1h1v-1h1v1h1v-1h5v1h1v-1h19v1h2v-1h1v1h2v-1h1v1h1v-1h5v1h1v-1h6v-1h1v1h12v-1h1v1h3v1h1v-1h1v-1h1v1h1v-5h1v4h1v1h9v1h1v-1h3v1h1v-1h2v-1h1v1h12v-2h1v2h4v-1h1v1h10v1h1v-2h1v1h1v-2h1v2h2v-1h1v1h5v1h1v-1h21v1h1v-1h2v1h1v-2h1v1h4v1h2v-1h3v1h2v-1h16v1h1v-1h8v1h2v-1h2v1h1v-1h7v1h1v-3h1v2h2v-2h1v2h1v-1h1v1h2v1h1v-2h1v1h2v-1h1v1h1v-1h1v1h1v-3h1v1h1v1h1v-1h1v1h1v-1h1v1h2v-1h4v-1h4v2h1v-1h2v1h2v-1h1v1h1v-1h1v-6h1v7h2v-1h1v1h4v-1h1v2h2v-1h2v-2h1v4h1v-2h1v-2h1v1h1v2h7v-1h1v1h23v1h1v-1h3v1h1v-1h14v-1h1v1h2v1h1v-1h10v1h1v-1h4v1h1v-1h27v1h2v-1h5v1h1v-1h13v1h1v-1h1v-1h1v1h1v1h1v-1h28v1h1v-1h4v-1h1v1h8v1h1v-1h3v1h1v-1h3v1h1v-1h1v1h1v-1h3v-1h1v1h2v1h1v-1h5v1h1v-1h11v-1h1v1h9v1h1v-1h6v-1h1v1h20v-1h1v1h3v1h1v-1h3v1h1v-1h2v-1h2v1h6v1h1v-1h3v1h1v-1h6v1h1v-1h2v1h1v-1h6v1h1v-1h4v1h1v-1h4v1h1v-1h6v1h1v-1h6v1h1v-1h6v-1h1v1h2v-3h1v3h4v1h1v-1h2v1h1v-1h1v-1h1v1h1v1h1v-1h1v1h1v-1h1v-1h2v1h4v1h1v-1h1v1h1v-1h12v1h1v-1h4v1h1v-1h1v-5h1v5h2v1h1v-1h6v1h1v-1h4v1h1V762h-1v1h-4v-1h-1v1h-3v-1h-1v1h-5v4h-1v-4h-4v1h-1v-1h-1v-1h-2v1h-2v-1h-1v2h-1v-1h-4v-1h-1v1h-3v-1h-1v2h-1v1h-1v-2h-9v-1h-1v1h-3v-1h-1v1h-1v-1h-1v1h-1v2h-1v-2h-2v3h-1v-3h-4v-1h-1v1h-2v-1h-1v1h-2v-1h-1v1h-1v-1h-1v1h-3v-1h-2v1h-3v1h-1v-1h-3v-1h-1v1h-6v-1h-1v1h-2v2h-1v-2h-10v1h-1v-1h-7v1h-1v-1h-4v-1h-1v1h-3v1h-1v-1h-3v-1h-1v1h-9v-1h-1v1h-9v1h-1v-1h-2v-1h-1v1h-10v-1h-1v1h-12v1h-1v-1h-3v-1h-1v1h-5v-1h-1v1h-13v1h-1v-1h-1v1h-1v-1h-6v1h-1v-1h-5v-1h-1v1h-2v1h-1v-2h-1v1h-2v-1h-1v1h-1v-1h-1v1h-6v-1h-1v1h-4v-1h-1v1h-5v-1h-1v1h-4v1h-1v-1h-2v-1h-1v1h-8v-1h-1v1h-2v-1h-1v1h-9v-1h-1v1h-8v-1h-1v1h-8v-1h-1v1h-1v-1h-1v1h-1v-1h-1v1h-3v-1h-1v1h-1v2h-1v-2h-2v-1h-1v1h-5v-1h-2v2h-1v-1h-3v-1h-1v1h-6v1h-1v-1h-1v-1h-1v1h-1v-1h-1v1h-1v-1h-1v1h-6v-1h-1v1h-7v-1h-1v2h-1v-1h-2v1h-1v-2h-1v1h-3v-1h-1v1h-5v-1h-1v1h-1v1h-1v-1h-5v-1h-1v1h-7v1h-3v-1h-2v1h-1v-2h-1v2h-1v-1h-1v1h-1v1h-3v-1h-4v8h-1v-8h-4v1h-2v-1h-1v1h-1v1h-1v-1h-2v1h-1v-1h-1v-1h-1v2h-2v-1h-2v-1h-2v1h-1v-1h-1v1h-2v-3h-1v2h-1v-1h-1v1h-1v-1h-1v-1h-1v1h-3v-1h-1v1h-1v1h-1v-1h-1v-1h-1v1h-7v-1h-1v1h-8v-1h-2v1h-4v-1h-1v1h-7v-1h-1v1h-2v1h-1v-2h-1v1h-3v1h-1v-1h-1v1h-1v-2h-2v3h-1v-2h-2v-1h-1v1h-4v-1h-1v1h-7v1h-1v-1h-4v-1h-1v1h-2v-1h-2v2h-1v-1h-7v-1h-1v1h-3v-1h-1v1h-8v1h-1v-1h-1v1h-1v-1h-1v-1h-2v2h-1v-1h-1v-1h-1v1h-2v-1h-1v1h-4v1h-1v-1h-1v-1h-1v1h-3v1h-1v-1h-11v1h-1v-1h-2v1h-1v-1h-1v-1h-2v1h-3v1h-1v-2h-1v7h-1v-6h-2v-1h-1v1h-1v1h-1v-1h-1v-1h-1v1h-6v-1h-1v1h-1v-1h-1v1h-3v-1h-1v1h-1v1h-1v-1h-6v-1h-1v1h-4v-1h-1v1h-2v-1h-2v1h-3v-1h-1v1h-10v1h-1v-1h-6v-1h-1v1h-1v-1h-1v1h-2v-1h-2v1h-8v-1h-1v1h-7v-1h-1v1h-3v-1h-1v1h-2v2h-1v-2h-5v-1h-1v1h-12v-1h-1v1h-1v-1h-1v1h-3v-1h-1v1h-1v-1h-2v1h-8v1h-1v-1h-2v-1h-1v1h-19v-1h-1v1h-6v-1h-1v1h-3v-1h-1v1h-3v-1h-1v1h-8v-1h-1v1h-5v-1h-1v1h-1v-1h-3v1h-8v-1h-1v2h-1v-2h-1v2h-1v-1h-7v-1h-1v1h-2v-1h-1v1h-4v-1h-1v1h-10v-1h-1v1h-1v-1h-1v1h-6v1h-1v-1h-2v2h-1v-2h-3v1h-2v-1h-1v-1h-1v1h-7v-1h-1v1h-4v-1h-2v1h-5v-1h-1v1h-4v-1h-1v1h-5v-1h-1v1h-3v1h-1v-1h-3v1h-1v-2h-1v2h-1v-2h-1v1h-9v-1h-2v1h-1v-1h-1v1h-5v-1h-1v1h-2v1h-1v-1h-6v-1h-1v2h-1v-2h-1v1h-1v-1h-1v1h-1v5h-1v-4h-1v-1h-1v-1h-1v1h-6v-1h-1v1h-7v1h-1v-2h-1v1h-5v-1h-1v1h-1v1h-1v-1h-6v-1h-1v1h-2v-1h-1v1h-5v-1h-1v1h-1v1h-1v-1h-2v-1h-1v1h-1v-1h-1v1h-3v1h-1v-1h-10v-1h-1v1h-5v-1h-1v2h-1v-2h-1v1h-8v-1h-2v1h-15v-1h-1v1h-4v-1h-2v1h-4v-1h-1v1h-2v-1h-1v2h-1v-1h-4v-1h-1v1h-1v1h-1v-1h-8v-1h-1v1h-2v1h-1v-1h-6v-1h-1v1h-4v1h-1v-2h-1v1h-1v-1h-1v1h-5v-1h-1v1h-1v-1h-1v1h-1v-1h-1v1h-3v-1h-1v1h-7v-1h-1v1h-8v-1h-2v1h-2v1h-1v-1h-1v-1h-1v1h-2v-1h-1v1h-3v-1h-1v1h-1v-1h-1v1h-6v-1h-1v1h-7v-1h-1v1h-1v-1h-3v1h-3v-1h-1v1h-12v-1h-2v1h-5v-1h-1v1h-4ZM277 789h3v1h1v-1h3v-1h1v1h12v1h1v-1h1v1h1v-1h1v1h2v-1h13v1h1v-1h6v1h1v-1h20v1h1v-2h1v1h6v1h1v-1h1v1h1v-1h1v1h1v-1h1v1h1v-1h4v-1h1v1h2v1h1v-1h2v-1h1v2h1v-1h5v1h1v-1h1v1h1v-1h12v1h1v-1h4v-1h1v1h10v-1h1v2h1v-1h1v-1h1v1h2v1h1v-1h1v1h1v-1h10v1h1v-1h2v1h1v-1h13v-1h1v1h2v-1h1v1h1v1h1v-1h19v-1h1v1h1v-1h2v1h9v1h1v-1h11v1h1v-1h7v-1h1v1h1v1h1v-1h1v1h1v-1h4v1h1v-1h9v1h1v-1h2v1h1v-1h3v-6h1v6h6v-1h1v1h1v1h1v-1h1v1h1v-1h19v1h1v-1h4v1h1v-1h17v-1h1v1h3v-2h1v2h3v1h1v-1h4v1h1v-1h2v1h1v-1h5v1h1v-1h3v-2h1v2h21v1h1v-1h12v1h2v-2h1v1h6v1h1v-1h1v1h1v-1h3v1h1v-1h7v1h1v-1h1v1h1v-1h1v1h1v-1h5v1h1v-1h6v-1h1v1h9v-1h1v1h1v1h2v-2h2v1h3v-1h4v-2h2v1h1v1h3v1h1v-1h2v2h1v-1h6v-1h6v1h1v-1h2v1h1v1h1v-2h1v1h1v-1h1v-10h1v10h2v-10h1v10h1v1h1v-1h2v1h4v-1h1v1h3v1h1v-2h2v1h1v-1h1v2h1v-2h1v1h1v1h2v-2h1v1h1v-1h1v-1h2v-3h1v2h1v1h2v2h1v-1h2v2h1v-1h1v-2h1v1h1v1h2v-1h2v1h2v-1h1v1h1v-1h1v-5h1v6h1v-1h1v1h1v-1h3v2h1v-2h3v1h1v-1h2v1h2v-6h1v5h2v1h1v-1h1v1h9v-1h1v1h2v-1h3v1h3v-1h1v1h1v1h1v-1h3v-1h1v-7h1v7h2v2h1v-1h2v-1h2v1h1v-1h2v-1h1v1h1v-3h1v1h1v-4h1v1h1v1h1v1h1v2h1v1h3v1h1v-1h1v1h2v1h1v-2h1v1h2v-1h1v1h1v-1h1v1h5v-1h1v1h1v-1h4v-1h2v-1h1v-4h2v-6h1v3h1v-1h1v8h1v1h2v1h4v1h1v-1h2v1h2v-1h1v1h2v-1h1v1h5v-1h1v1h1v-1h5v2h1v-3h1v-6h1v6h1v2h5v-1h1v2h1v-1h2v-1h1v1h1v-1h3v1h1v-1h1v1h1v-1h1v1h4v-1h1v1h2v-1h1v-1h1v3h1v-2h1v1h1v-1h3v1h1v-1h1v1h3v1h1v-2h1v1h1v-1h1v1h1v-1h1v1h2v1h1v-1h2v-1h1v1h1v-1h1v2h2v-2h5v1h3v-1h1v1h3v-1h1v1h2v1h3v-3h2v-1h2v-2h1v2h1v1h2v1h2v1h1v-1h2v2h1v-2h2v-1h1v-1h1v-1h2v-1h1v2h1v-1h1v3h4v1h1v-1h1v2h1v-1h1v-1h1v1h1v-1h1v1h2v-1h1v1h5v1h1v-2h1v1h1v-1h2v1h2v1h1v-2h2v1h3v-1h1v1h1v-4h1v4h3v-2h1v1h2v2h1v-1h3v-2h1v2h3v1h1v-2h1v1h1v1h1v-1h1v-1h2v1h2v-2h1v2h1v-1h4v1h2v-9h1v9h2v-1h1v1h1v-1h4v1h3v1h1v-2h1v1h1v-1h3v-3h2v1h1v1h1v1h3v1h2v-1h1v1h2v-1h1v1h1v-1h2v1h1v-1h2v-1h1v1h1v-2h2v1h2v1h3v1h1v-1h1v1h4v-1h1v1h2v-1h1v1h2v-1h1v1h5v-1h1v1h1v-1h2v-1h1v-1h1v2h2v1h1v-1h1v1h1v-1h1v1h5v-1h5v1h2v-1h1v1h1v1h1v-2h4v1h1v1h1v-1h1v-1h3v-1h3v-2h1v1h1v-2h1v1h1v2h3v1h2v1h4v-1h6v2h1v-1h2v1h1v-2h1v1h2v-1h1v1h2v-1h1v1h7v-1h1v1h1v-1h1v1h1v-1h1v1h1v-1h2v1h1v-1h1v1h1v-1h2v1h1v-1h1v1h2v-1h2v1h2v1h1v-1h1v-1h1v1h2v-1h4v-7h1v7h2v1h3v-1h1v1h1v-1h1v1h2v-1h1v1h5v-1h2v1h2v1h1v-3h1v2h1v-1h3v1h1v-1h2v2h1v-7h1v6h1v-1h1v1h1v-1h1v1h3v-1h4v2h1v-1h3v-1h5v1h4v-1h1v1h4v-1h2v1h2v1h1v-2h2v1h2v-1h2v1h2v-1h2v-1h1v-2h1v2h1v1h3v1h1v-1h1v1h2v-1h2v1h1v-1h2v1h1v-1h1v1h6v-1h3v1h5v-2h1v2h8v1h1v-1h4v-2h1v2h5v1h1v-1h1v1h1v-1h3v1h1v-1h5v1h1v-1h13V793h-3v-1h-2v1h-7v1h-1v-1h-1v1h-1v-1h-13v-1h-1v1h-1v-1h-1v1h-10v-1h-1v1h-3v1h-2v-1h-7v-1h-1v1h-3v1h-1v-1h-2v-1h-1v2h-1v-1h-1v1h-2v-1h-4v1h-2v-1h-1v1h-1v1h-1v2h-1v-2h-1v-1h-3v-1h-2v1h-1v-1h-1v1h-4v-2h-1v2h-1v-1h-1v1h-2v-1h-2v1h-2v-2h-1v2h-1v-1h-1v1h-4v-1h-4v1h-3v-2h-1v1h-3v1h-4v-1h-1v1h-1v4h-1v-4h-1v-2h-1v1h-2v1h-3v-1h-2v1h-2v-1h-2v1h-5v-1h-1v1h-2v-1h-5v1h-2v-1h-1v1h-1v7h-1v-7h-3v-1h-5v1h-3v-2h-1v1h-3v1h-1v-1h-2v1h-1v-1h-2v1h-2v-1h-1v1h-3v-2h-2v1h-2v-1h-1v1h-4v1h-1v-1h-5v1h-2v-1h-1v-1h-1v2h-1v-1h-3v1h-3v-2h-1v1h-1v1h-2v-1h-1v1h-2v1h-1v2h-1v-2h-1v1h-1v3h-1v-3h-2v-1h-1v1h-1v-2h-4v-2h-1v2h-1v-1h-2v1h-4v-2h-1v3h-1v-2h-1v1h-1v-1h-1v-1h-1v1h-1v1h-1v-2h-1v1h-1v-1h-1v2h-1v-1h-1v1h-1v-2h-1v2h-1v-1h-2v1h-1v1h-1v1h-1v-2h-7v-1h-1v1h-1v-1h-1v1h-1v-1h-2v1h-6v-1h-4v1h-4v1h-1v1h-2v-1h-1v-1h-2v-1h-1v-1h-1v2h-3v-1h-2v1h-1v-1h-2v1h-1v-1h-1v1h-2v1h-1v1h-1v1h-1v-2h-1v-1h-3v-1h-1v-1h-1v2h-6v-1h-2v1h-4v7h-1v-7h-1v-2h-2v2h-2v-1h-3v1h-1v-1h-1v1h-1v-2h-1v2h-2v-1h-1v1h-1v-1h-1v1h-2v-1h-1v1h-2v-1h-1v1h-1v-1h-1v1h-1v-1h-1v2h-1v-3h-1v1h-2v4h-1v-4h-1v-1h-1v2h-2v-1h-3v1h-2v-1h-1v1h-1v-1h-2v1h-3v-1h-1v-1h-1v1h-3v1h-1v-1h-3v1h-1v-1h-1v1h-5v1h-2v2h-2v2h-1v-1h-1v-1h-1v-2h-1v-1h-9v1h-3v3h-1v-1h-1v-1h-1v-1h-2v-1h-1v-2h-2v2h-1v-1h-2v1h-2v-1h-3v1h-1v-1h-1v1h-1v-1h-1v1h-1v-1h-1v-1h-2v1h-1v1h-4v-2h-1v1h-1v1h-1v-1h-3v1h-3v-1h-1v1h-1v-1h-1v-1h-1v2h-1v-1h-1v1h-4v-2h-1v1h-1v1h-3v-1h-1v1h-1v-1h-4v1h-2v-1h-1v1h-2v-2h-1v1h-3v1h-2v-1h-2v1h-1v-1h-1v1h-3v1h-1v7h-1v-6h-1v-3h-1v1h-2v-2h-1v2h-1v-1h-6v1h-2v-1h-5v1h-5v-1h-1v1h-2v1h-1v3h-1v3h-1v3h-1v-5h-1v8h-1v-7h-2v1h-1v-4h-1v-3h-2v-1h-1v2h-1v-2h-1v1h-1v-2h-1v2h-1v-1h-1v1h-1v-1h-2v1h-1v-1h-1v-1h-1v1h-1v1h-2v-1h-4v1h-2v-1h-1v1h-1v2h-2v2h-1v-2h-1v4h-1v-1h-1v-2h-1v-1h-1v-1h-1v-1h-2v-1h-3v1h-3v-1h-1v1h-1v6h-1v-6h-1v-1h-1v1h-4v-1h-3v1h-1v-1h-2v1h-3v-1h-1v-1h-1v1h-1v1h-1v-1h-1v-1h-1v2h-1v-1h-1v-1h-1v1h-1v1h-4v5h-1v-5h-1v-1h-1v1h-1v-1h-5v2h-1v-2h-4v1h-1v-1h-1v6h-1v-5h-1v-1h-2v1h-1v-1h-3v1h-1v-1h-1v-1h-1v2h-1v-1h-2v1h-1v-1h-1v2h-1v-1h-2v1h-1v2h-2v-2h-1v-1h-2v-1h-1v1h-2v-1h-1v1h-1v-1h-1v1h-1v-1h-1v-1h-1v1h-1v1h-2v-1h-2v1h-3v-1h-1v1h-5v9h-1v-9h-2v10h-1v-11h-1v1h-1v-1h-2v1h-2v-1h-2v1h-1v-1h-2v1h-1v-1h-2v-1h-1v2h-2v-1h-1v1h-1v-1h-2v1h-2v-2h-1v2h-4v2h-2v-1h-1v-1h-2v-2h-2v2h-1v-1h-1v-1h-1v3h-1v-1h-2v-1h-14v-1h-1v1h-5v1h-1v-1h-6v-1h-2v1h-8v1h-2v-1h-4v1h-1v-1h-2v-1h-1v1h-4v1h-1v-2h-1v1h-1v-1h-2v1h-1v-1h-1v1h-2v-1h-1v1h-5v-1h-2v1h-1v1h-1v-1h-1v1h-1v-2h-3v1h-1v-1h-1v1h-3v-1h-1v1h-4v-1h-1v1h-1v2h-1v-2h-5v-1h-1v1h-4v2h-1v-1h-1v-1h-8v2h-1v-2h-11v-1h-1v3h-1v-2h-1v1h-1v-2h-1v1h-2v-1h-1v1h-9v1h-1v-1h-5v-1h-1v1h-9v-1h-1v1h-6v-1h-2v2h-1v-2h-3v6h-1v-5h-3v-1h-1v1h-1v-1h-1v1h-3v-1h-1v1h-5v-1h-2v1h-4v-1h-3v1h-2v2h-1v-2h-20v-1h-1v1h-5v1h-1v-1h-1v-1h-2v1h-5v-1h-1v1h-5v-1h-1v1h-4v-1h-1v1h-2v-1h-1v1h-2v1h-1v-2h-1v1h-9v-1h-2v1h-1v-1h-1v1h-5v-1h-1v1h-3v-1h-1v1h-5v-1h-2v1h-2v-1h-1v1h-1v-1h-1v1h-2v-1h-1v1h-1v-1h-1v1h-1v-1h-1v1h-7v-1h-1v1h-3v-1h-1v1h-2v-1h-1v1h-4v-1h-3v1h-5v-1h-1v1h-5v1h-1v-1h-5v-1h-1v1h-3v-1h-1v1h-4v-1h-1v1h-9v-1h-2v1h-3v-1h-1v1h-4v-1h-2v1h-5v-1h-2v1h-2v-1h-1v1h-3v-1h-1v1h-1v-1h-1v1h-6v-1h-1v1h-1v1h-1v-2h-3v1h-4v-1h-1v1h-3v1h-1v-1h-3v1h-1v-1h-6v-1h-1v1h-2v-1h-2v1h-5ZM277 820h3v1h1v-1h2v1h1v-1h1v-1h1v1h3v-1h2v1h5v1h1v-1h5v1h1v-1h11v-1h1v1h1v1h1v-1h14v1h1v-1h10v1h1v-2h1v2h2v-1h4v1h1v-1h6v-1h1v1h1v1h2v-3h1v2h5v-3h1v3h1v1h1v-1h2v1h1v-1h6v-1h1v1h5v1h1v-1h1v-1h1v1h5v-1h1v2h1v-1h6v1h1v-1h8v-1h1v1h5v-1h1v1h7v1h1v-1h11v-1h1v1h19v1h1v-1h1v1h1v-1h10v-1h1v1h17v1h1v-1h1v1h1v-1h6v-1h1v1h6v1h1v-1h4v-17h1v16h1v1h6v1h1v-3h1v3h1v-1h4v1h1v-1h5v1h1v-1h5v1h1v-1h13v1h1v-2h1v1h15v1h1v-1h3v-1h1v1h3v-2h1v2h3v-1h1v1h2v-2h1v2h2v-1h1v1h1v-1h1v1h1v1h1v-1h1v-1h1v1h1v1h1v-2h1v1h1v-1h2v-1h2v-1h2v2h4v1h1v1h1v-1h1v-1h1v1h1v-2h1v1h1v-1h1v2h1v-2h1v2h1v-1h2v1h1v1h1v-3h2v1h1v2h1v-1h1v1h1v-2h1v-1h1v1h2v1h1v-1h4v-2h2v2h5v1h2v-1h2v-1h1v1h1v1h2v-1h2v2h1v-2h1v2h1v-1h2v-1h1v1h1v-1h1v2h1v-1h1v1h1v-2h3v1h1v-1h1v1h4v-1h1v1h1v-1h2v-1h1v1h1v-2h1v-1h1v3h3v1h2v-2h1v2h2v-1h2v1h2v-1h1v1h1v-2h1v2h4v-2h1v1h3v1h1v-2h1v1h1v1h1v-2h1v2h1v-1h2v2h1v-3h1v1h2v1h1v-1h1v2h1v-2h1v1h1v-1h2v1h2v1h1v-1h2v-1h1v1h4v-1h1v1h1v-2h1v2h1v-1h1v-1h1v1h1v-1h1v1h1v1h4v-2h1v1h1v2h2v-2h1v1h3v-1h1v-1h1v2h2v-1h1v-1h1v1h1v1h1v-2h1v1h4v2h1v-2h2v-1h1v2h1v-2h1v1h2v1h1v-2h1v1h1v1h1v-1h2v2h1v-1h1v-1h5v1h1v-1h2v1h1v-1h1v-1h2v2h1v-1h2v1h2v-1h1v-3h1v-2h1v2h1v3h4v2h1v-1h1v-1h2v1h1v1h1v-1h1v-1h1v1h4v1h1v-2h2v2h1v-1h1v-1h1v1h2v-1h3v-1h1v-4h1v2h1v2h1v1h3v1h1v-1h1v1h3v-1h1v-8h1v8h4v1h1v-1h4v-9h1v8h3v-2h1v2h1v1h5v1h1v-1h3v-1h1v-3h1v3h2v1h2v1h1v-1h1v1h1v-1h1v-5h1v6h1v-1h2v1h4v-2h1v2h2v-1h1v1h3v-1h1v1h3v-2h1v2h3v1h1v-2h2v-3h1v-1h1v3h1v1h1v-1h2v2h1v-1h1v1h1v-1h2v1h1v-1h3v-6h1v6h1v1h1v-1h4v1h4v-1h2v1h1v-1h1v1h1v-1h2v2h1v-1h1v1h1v-1h1v1h1v-2h1v1h1v-1h1v1h3v-1h2v1h1v-1h5v2h1v-1h1v-1h1v1h1v-2h1v2h1v-1h5v1h3v1h1v-1h3v-1h3v-6h1v2h1v4h2v1h3v-1h2v1h2v-1h1v1h2v-1h3v1h5v-1h4v1h2v-2h1v2h3v1h1v-5h1v3h3v2h1v-2h1v1h1v-1h1v1h3v1h1v-2h1v1h1v-2h1v2h2v-1h1v1h1v-1h1v-1h1v1h5v1h1v-2h1v1h1v1h3v-1h1v1h3v-2h2v-2h1v1h1v2h1v2h1v-1h1v-2h1v2h1v-1h1v1h5v-1h2v-1h1v-1h1v2h4v1h2v-1h4v1h1v-2h1v2h1v-1h1v1h1v-1h1v1h1v-1h1v1h2v-1h2v-1h1v1h1v1h4v-1h4v1h6v-1h1v-8h1v7h1v2h1v-1h1v1h1v-1h2v1h2v-1h1v1h2v-1h1v1h6v-1h1v2h1v-2h1v1h1v-1h1v1h1v-1h3v1h1v-1h1v1h1v-1h3v-1h1v2h4v-1h3v1h1v-1h1v1h2v1h1v-2h1v1h2v-1h4v1h1v1h1v-2h1v1h9v-1h6v1h4v-1h3v1h1v-1h1v1h2v-1h1v1h1v-1h1v1h1v-1h1v1h1v-1h2v1h5v1h1v-1h4v-1h2v1h1v-1h1v2h1v-1h2v-1h2v1h6v-1h3v1h3v-1h1v1h2v-1h2v1h3v1h1v-1h3v-1h2v-1h1v1h2v1h2v-1h2v1h4v-1h3v1h2v-1h1v1h4v1h1v-2h3v1h1v-1h2v1h5v1h2v-2h1v1h1v-5h1v4h2v1h2v-1h5v1h2v-1h1v1h1v-1h2v1h1v-1h2v1h1v-1h1v1h2v1h1v-1h2v1h1v-1h6v1h1v-1h1v-1h1v1h2v1h1v-1h2v-2h1v2h5v1h1v-1h1v1h1v-1h2v1h1v-1h2v-1h1v1h3v1h1v-2h1v1h3v1h1v-1h8v1h1v-1h3v1h1v-1h3v1h1v-1h3v1h1v-1h8v1h1v-1h5v-1h1v1h3v-1h1v2h3v-1h2v-1h1v1h1v1h1v-1h2v1h1v-1h9V824h-1v1h-1v-1h-7v-1h-1v1h-1v-1h-1v1h-2v-1h-2v1h-6v-1h-1v1h-4v-1h-1v1h-3v-1h-1v1h-7v2h-1v-3h-1v1h-3v1h-1v-1h-1v-1h-1v1h-5v-1h-1v1h-1v-1h-1v1h-4v-1h-1v1h-1v-1h-1v1h-3v2h-1v-2h-5v-1h-1v1h-1v-1h-1v1h-6v-1h-1v1h-1v-1h-1v1h-1v-1h-1v1h-4v1h-2v-1h-1v-1h-1v1h-5v1h-1v-1h-1v-1h-1v1h-1v1h-2v-1h-1v1h-2v-1h-4v1h-1v-1h-1v1h-2v-2h-1v1h-1v1h-3v-1h-1v1h-1v-1h-2v5h-1v-4h-1v-1h-2v1h-1v-2h-1v2h-2v-1h-3v1h-4v-1h-2v1h-1v-1h-3v1h-4v-1h-1v1h-1v-1h-1v1h-3v-1h-2v1h-4v1h-1v-1h-2v-2h-1v2h-2v1h-1v-3h-1v1h-1v1h-1v-1h-1v1h-1v-1h-2v1h-1v-1h-1v1h-1v-1h-3v1h-1v-1h-5v1h-6v-2h-1v1h-1v1h-2v-2h-1v1h-1v1h-2v-2h-1v1h-2v1h-1v-2h-1v1h-2v-1h-1v1h-4v-1h-1v1h-1v2h-1v-1h-4v-2h-1v2h-1v-1h-1v1h-2v-2h-1v2h-1v-1h-3v1h-1v-1h-1v1h-1v-1h-7v1h-1v-1h-2v1h-1v-2h-1v2h-1v-2h-1v1h-1v-1h-1v1h-1v1h-3v-1h-1v-1h-1v1h-1v1h-3v-1h-1v1h-2v-1h-2v2h-1v-2h-2v1h-4v-1h-1v1h-1v-1h-1v1h-2v-1h-1v-1h-1v2h-1v-1h-1v1h-2v-1h-1v1h-2v-1h-1v1h-1v-1h-1v2h-1v-2h-1v-1h-1v2h-3v1h-1v-3h-1v1h-1v9h-1v-8h-2v1h-1v-2h-1v-1h-2v1h-1v-1h-1v2h-1v-1h-1v-1h-1v2h-1v-1h-1v2h-1v-2h-1v2h-2v-1h-2v-1h-2v1h-1v-1h-1v1h-5v-1h-1v1h-1v-1h-1v1h-1v-1h-1v1h-1v-1h-1v1h-3v2h-2v-1h-1v-1h-3v-1h-1v1h-3v-1h-2v1h-2v-1h-1v1h-1v1h-1v3h-1v-4h-3v-1h-1v1h-2v1h-1v-1h-1v-1h-4v1h-2v-1h-2v-1h-1v2h-1v-1h-2v-1h-1v2h-1v-1h-3v1h-1v-1h-2v1h-1v1h-1v-2h-1v1h-2v-2h-1v1h-1v2h-1v-1h-1v3h-1v-3h-2v-2h-1v3h-1v-2h-1v1h-1v-1h-1v-1h-1v2h-2v-1h-4v1h-2v-1h-3v1h-1v-1h-3v1h-2v1h-1v-1h-1v-2h-1v1h-1v1h-1v-1h-1v5h-1v2h-1v-6h-1v-1h-1v1h-1v-1h-1v-1h-1v1h-3v1h-2v-2h-1v1h-1v1h-1v-1h-1v-1h-2v2h-3v-1h-1v1h-1v-1h-1v1h-2v1h-1v-1h-2v-2h-1v1h-2v1h-1v1h-1v-1h-1v-1h-1v2h-1v-1h-1v-1h-5v1h-4v-1h-2v1h-1v1h-1v-3h-1v1h-2v1h-1v-1h-2v1h-2v5h-1v-4h-1v-2h-1v-1h-1v2h-2v-1h-1v-1h-2v2h-1v-2h-1v2h-1v1h-2v4h-1v-4h-2v-2h-1v1h-1v-2h-1v1h-2v1h-3v1h-1v-2h-1v1h-1v-1h-5v1h-1v-1h-2v1h-1v-1h-1v1h-1v-1h-1v1h-1v4h-1v-3h-1v-2h-1v1h-1v-2h-1v2h-2v2h-1v-1h-1v2h-1v-2h-2v-1h-2v1h-1v-2h-1v1h-4v1h-1v2h-1v-3h-3v9h-1v-9h-1v-2h-1v2h-2v1h-1v-1h-2v-1h-2v9h-1v-8h-4v-1h-4v2h-1v-1h-1v3h-1v2h-1v-3h-1v-2h-2v-1h-1v-1h-3v2h-2v-1h-1v1h-1v-1h-2v1h-1v-2h-1v1h-1v1h-1v-1h-1v1h-2v-1h-1v1h-1v-1h-2v1h-2v-1h-1v1h-1v2h-1v3h-1v-2h-1v-2h-1v-2h-3v-1h-1v1h-3v1h-2v-1h-4v-1h-2v2h-1v1h-1v-1h-4v-1h-1v1h-2v-2h-2v2h-2v-1h-1v1h-2v-1h-2v-1h-2v1h-2v1h-1v-1h-1v1h-1v-1h-1v1h-2v1h-1v-1h-2v-2h-1v2h-1v-2h-1v1h-1v1h-1v-1h-1v2h-1v-3h-1v2h-2v-1h-1v1h-1v-1h-1v1h-1v-1h-1v-1h-1v1h-1v1h-1v-1h-1v1h-1v-1h-1v-1h-1v1h-2v1h-1v-1h-1v1h-3v-1h-4v1h-1v-1h-3v1h-1v-1h-1v2h-1v-1h-2v-1h-1v1h-1v-1h-1v-1h-1v2h-2v-2h-1v1h-1v1h-1v-1h-2v1h-1v-1h-2v1h-1v-1h-1v1h-1v1h-2v-3h-1v2h-1v1h-1v-1h-1v-1h-1v1h-2v-1h-2v1h-1v1h-1v1h-1v1h-1v-2h-2v-1h-2v-2h-1v1h-1v1h-1v-1h-3v1h-1v-1h-1v1h-1v-2h-1v3h-1v-1h-1v-2h-1v2h-3v-2h-1v1h-2v2h-1v-3h-1v1h-2v1h-1v-1h-1v1h-3v-2h-1v2h-2v-1h-2v-1h-1v1h-2v1h-1v1h-1v-1h-1v2h-1v-2h-4v-1h-2v2h-1v-2h-1v-1h-1v1h-2v1h-2v-1h-1v1h-3v-2h-1v2h-1v-1h-1v1h-1v-1h-1v1h-2v-1h-1v2h-1v-1h-1v-1h-1v1h-1v-1h-1v1h-4v1h-1v1h-1v-1h-2v-1h-4v-1h-1v-1h-1v2h-3v-1h-2v-1h-1v1h-3v1h-1v-1h-2v1h-1v-2h-1v1h-4v1h-1v-1h-9v-1h-1v1h-4v-1h-1v1h-8v-1h-1v2h-1v-1h-1v-1h-1v1h-4v1h-1v-1h-7v1h-1v-2h-1v1h-2v-1h-1v1h-4v-1h-1v1h-6v-1h-2v1h-6v18h-1v-17h-1v-1h-1v1h-1v-1h-7v-1h-1v1h-2v-1h-1v1h-1v-1h-1v1h-1v1h-1v-1h-1v2h-1v-2h-4v1h-1v-1h-1v-1h-1v1h-3v-1h-1v1h-4v-1h-1v1h-4v-1h-1v1h-6v-1h-1v1h-8v-1h-1v1h-1v-1h-1v1h-1v-1h-1v1h-7v1h-1v-1h-23v-1h-1v1h-12v-1h-1v1h-2v-1h-1v1h-1v1h-1v-1h-10v-1h-1v1h-4v1h-1v-1h-3v1h-1v-1h-9v3h-1v-4h-1v1h-1v-1h-2v1h-1v-1h-1v1h-1v-1h-1v1h-6v-1h-1v2h-1v-1h-1v-1h-1v1h-4v1h-1v-1h-1v1h-1v-1h-2v-1h-2v1h-13v-1h-1v1h-5v-1h-1v1h-2v-1h-1v1h-2v-1h-1v1h-4v-1h-1v1h-15v-1h-1v1h-1v-1h-1v1h-4v1h-1v-1h-2v2h-1v-2h-4ZM277 850h5v1h1v-1h1v1h1v-1h2v-2h1v3h1v-1h19v1h1v-1h4v-1h1v1h8v1h1v-1h7v1h1v-1h5v1h1v-1h5v-1h1v1h1v-1h1v1h1v1h1v-1h16v-2h1v2h7v1h1v-1h4v1h1v-1h27v1h2v-1h1v1h1v-1h1v-1h1v-7h1v8h1v1h1v-2h1v2h1v-1h10v1h1v-1h1v1h1v-1h1v1h1v-1h1v-1h2v1h2v1h1v-1h2v1h1v-1h7v1h1v-1h3v1h1v-1h2v-1h1v1h16v-1h1v1h5v1h1v-1h4v1h1v-2h1v1h4v1h1v-1h10v1h1v-1h20v-1h1v2h1v-3h1v2h4v1h1v-1h11v-1h1v1h4v1h1v-1h4v-6h1v4h1v2h3v1h1v-1h1v1h1v-1h4v1h1v-2h1v1h13v-1h1v1h15v-2h1v2h6v1h2v-1h2v-1h1v2h1v-1h10v1h1v-1h6v1h1v-1h3v1h1v-1h2v-1h1v1h18v1h1v-1h1v1h2v-1h1v-1h1v1h7v-1h1v1h2v-1h1v1h4v-1h1v1h22v1h1v-2h1v1h3v1h1v-1h2v1h1v-1h3v-1h1v1h2v-1h1v1h3v1h3v-1h7v1h1v-1h4v1h1v-1h3v1h1v-3h1v2h5v1h1v-1h9v1h1v-1h12v-1h1v1h1v1h2v-1h4v-1h1v1h1v1h1v-1h25v1h1v-1h9v1h1v-1h1v-2h1v2h4v-1h1v1h1v-2h1v3h1v-3h1v2h8v-1h1v1h2v-4h1v4h22v1h1v-1h2v1h1v-1h8v-1h1v1h1v-1h1v1h9v1h1v-1h2v-1h1v1h2v1h1v-1h15v1h1v-1h9v1h1v-1h5v1h1v-1h8v1h1v-1h1v1h1v-1h7v1h2v-1h8v1h2v-1h1v1h1v-1h6v-2h1v2h4v-1h1v-3h1v4h19v1h1v-1h24v1h1v-1h1v1h1v-1h5v1h1v-1h2v1h2v-1h2v-1h1v2h1v-1h3v-1h1v1h5v-2h1v2h11v1h1v-1h14v1h2v-1h1v1h1v-1h18v-1h1v1h15v-2h1v2h16v1h1v-1h2v-1h1v1h3v-1h1v1h9v1h1v-1h2v1h1v-1h4v1h1v-1h2v1h1v-1h1v1h1v-1h3v1h1v-1h1v1h1v-1h8v1h1v-1h6v1h1v-1h6v1h1v-1h2v-2h1v2h21v-1h2v1h1v-1h1v1h6v1h1v-1h4v1h2v-1h10v-2h1v2h29v-2h1v2h1v1h2v-2h1v1h5v-1h1v2h1v-1h2v1h1v-1h6v1h1v-1h2v1h1v-1h1v1h1v-1h7v1h1v-1h3v-2h1v2h3v1h2v-1h4v1h1v-1h5v-1h1v1h5v1h1v-1h8v1h1v-1h10v-1h1v1h10v1h1v-1h13v-2h1v2h1v-1h1v1h7v-1h1v1h2v1h1v-1h2v1h1v-1h8v1h1v-1h19V854h-4v-1h-1v1h-1v-1h-1v1h-1v-1h-2v1h-8v2h-1v-2h-1v2h-1v-2h-6v1h-1v-1h-3v-1h-1v1h-3v1h-1v-2h-1v1h-4v1h-1v-1h-2v-1h-1v1h-3v-1h-1v1h-4v-1h-1v1h-1v-1h-1v1h-5v-1h-1v1h-8v-1h-1v1h-3v-1h-2v1h-5v-1h-1v1h-2v-1h-1v1h-3v-1h-1v1h-2v-1h-1v1h-8v-1h-1v1h-2v2h-1v-2h-6v1h-1v-1h-1v-1h-1v1h-2v1h-1v-1h-1v-1h-1v1h-8v-1h-1v1h-6v-1h-1v1h-1v1h-1v-1h-2v-1h-1v1h-3v-1h-1v1h-1v1h-1v-1h-1v-1h-1v1h-4v-1h-1v1h-3v-1h-1v1h-1v-1h-1v1h-1v-1h-1v1h-7v-1h-2v1h-7v1h-1v-2h-1v1h-1v1h-1v-1h-2v-1h-1v1h-6v-1h-1v1h-2v-1h-1v1h-1v-1h-1v1h-2v-1h-1v3h-1v-1h-1v-1h-4v1h-1v-1h-4v2h-1v-2h-1v-1h-1v1h-3v-1h-4v1h-6v-1h-1v1h-9v2h-1v-2h-1v1h-1v-2h-1v1h-2v-1h-1v1h-6v-1h-1v1h-4v1h-2v-1h-1v-1h-1v1h-4v-1h-1v1h-6v-1h-1v1h-3v1h-1v-1h-2v-1h-2v1h-5v-1h-1v1h-15v1h-1v-1h-2v1h-1v-1h-1v-1h-1v1h-3v-1h-1v2h-1v-2h-1v1h-1v-1h-2v1h-8v1h-1v-1h-6v1h-1v-1h-1v-1h-1v1h-5v-1h-1v1h-8v-1h-1v1h-6v-1h-1v1h-6v-1h-1v2h-1v-1h-1v-1h-2v1h-4v-1h-1v1h-5v-1h-1v1h-1v-1h-1v2h-1v-2h-2v1h-4v-1h-2v1h-7v-1h-1v1h-4v-1h-1v1h-3v-1h-1v1h-2v2h-1v-2h-5v1h-1v-1h-3v-1h-1v1h-3v1h-1v-1h-1v-1h-1v1h-5v-1h-1v1h-7v-1h-1v1h-2v-1h-1v1h-3v1h-1v3h-1v-3h-1v-1h-1v-1h-1v1h-3v1h-1v-1h-5v-1h-1v1h-6v1h-1v-1h-3v2h-1v-2h-2v-1h-1v1h-6v-1h-1v1h-2v-1h-1v1h-8v-1h-1v1h-9v-1h-1v1h-2v-1h-1v1h-4v-1h-1v1h-1v-1h-2v1h-4v-1h-2v1h-7v-1h-1v1h-5v-1h-1v1h-5v-1h-1v1h-1v-1h-1v1h-6v-1h-1v1h-1v-1h-1v1h-4v-1h-2v1h-4v1h-1v-1h-1v-1h-2v1h-6v-1h-1v1h-1v-1h-1v1h-2v4h-1v-5h-1v2h-1v-1h-1v-1h-2v1h-2v-1h-1v1h-11v-1h-1v1h-3v1h-1v-1h-4v1h-1v-1h-4v-1h-1v1h-3v-1h-1v1h-6v-1h-2v1h-6v-1h-3v1h-2v1h-1v-1h-3v1h-1v-1h-8v-1h-1v1h-6v-1h-1v2h-1v-1h-4v-1h-2v1h-6v2h-1v-2h-1v-1h-1v1h-4v-1h-1v1h-1v-1h-3v1h-3v1h-1v-1h-3v-1h-3v1h-1v-1h-2v1h-7v-1h-2v1h-6v-1h-1v1h-1v-1h-1v1h-13v-1h-3v1h-9v-1h-2v1h-2v2h-1v-2h-8v-1h-2v1h-1v1h-1v-1h-1v-1h-1v1h-3v-1h-1v1h-6v2h-1v-1h-1v-1h-7v-1h-2v1h-1v-1h-1v1h-5v-1h-1v1h-10v1h-1v-1h-11v-1h-1v1h-10v2h-1v-1h-1v-1h-6v-1h-1v1h-1v-1h-1v1h-2v-1h-1v1h-2v-1h-1v1h-6v-1h-1v1h-3v1h-1v-2h-1v1h-5v-1h-1v1h-3v2h-1v4h-1v-5h-1v-1h-1v-1h-1v1h-10v-1h-1v1h-1v-1h-1v2h-1v-2h-1v1h-5v-1h-1v1h-3v-1h-1v1h-4v1h-1v-1h-3v-1h-1v1h-1v-1h-1v1h-6v1h-1v-2h-1v1h-1v-1h-1v1h-2v-1h-2v2h-1v-1h-2v-1h-1v1h-12v-1h-1v1h-7v-1h-2v1h-1v-1h-2v2h-1v-1h-2v-1h-1v1h-2v-1h-1v1h-3v-1h-1v1h-4v-1h-1v1h-6v-1h-1v1h-2v-1h-1v1h-1v-1h-1v1h-2v-1h-1v1h-3v-1h-1v1h-2v-1h-1v1h-1v-1h-2v1h-1v-1h-1v1h-3v-1h-1v1h-1v1h-1v-2h-1v1h-4v1h-1v7h-1v-8h-8v-1h-1v1h-9v-1h-2v1h-2v-1h-1v1h-2v1h-1v-1h-2v1h-1v-2h-1v1h-1v-1h-1v1h-3v1h-1v-1h-5v-1h-1v1h-2v-1h-1v1h-3v-1h-1v1h-7v-1h-1v1h-5v-1h-2v1h-5v-1h-1v1h-7v-1h-2v3h-1v-2h-3v-1h-1v2h-1v-1h-9v-1h-1v1h-4v-1h-1v1h-13v1h-1v-1h-3v-1h-2v2h-1v-1h-8v-1h-1v1h-4ZM277 880h2v-1h1v1h1v-1h1v-6h1v6h4v1h1v-1h1v1h5v-1h1v1h1v-1h1v1h1v-1h3v1h1v-1h1v1h4v1h1v-3h1v2h3v-1h1v1h3v-1h1v1h2v-1h1v1h1v1h1v-2h2v1h4v-1h3v2h1v-1h3v-1h2v1h1v-1h2v1h3v1h1v-2h1v1h6v-1h1v2h1v-1h2v-1h1v1h1v1h1v-1h4v-1h1v2h1v-2h5v2h1v-1h2v-1h1v1h1v-1h2v1h1v-1h3v2h1v-1h1v1h1v-2h1v1h2v1h1v-1h1v-1h3v1h1v-1h1v1h2v-1h4v2h1v-2h2v-1h1v2h1v1h1v-1h4v-1h1v1h4v-1h4v1h1v-1h1v1h4v-1h4v1h1v-1h3v1h2v-1h2v1h1v-1h2v1h1v-1h1v1h1v-1h4v2h1v-1h1v-1h3v1h1v-1h1v1h1v-1h5v1h1v-1h1v1h1v-1h1v1h2v-1h1v1h5v-1h1v1h1v-1h1v1h6v1h1v-2h3v1h2v-1h1v2h1v-2h1v1h1v-1h1v1h1v-6h1v6h1v-1h1v1h1v1h1v-2h3v1h2v-1h1v1h1v-1h1v1h1v-1h1v1h1v-1h2v1h2v-1h1v1h1v-1h1v1h2v-1h1v1h3v-1h2v1h1v-1h2v1h3v-1h3v1h1v-1h4v1h4v-1h2v1h1v-1h4v1h2v1h1v-1h1v-1h1v1h1v-1h3v2h1v-2h1v1h3v-1h1v1h5v-1h1v1h1v1h1v-2h1v1h2v1h1v-1h1v-1h1v1h1v1h1v-1h1v-1h1v1h1v-1h1v1h1v-1h1v2h1v-2h2v1h1v-1h1v1h2v-1h1v1h1v-1h1v1h2v-1h3v1h1v-1h1v1h3v-1h3v1h1v-1h5v1h1v-1h1v1h1v1h1v-2h1v2h2v-2h1v2h1v-2h2v1h1v-1h3v1h3v-1h1v1h4v-1h3v1h1v1h1v-3h1v2h1v1h1v-2h1v1h2v-1h1v1h2v-1h2v1h9v1h1v-1h5v-1h2v1h4v-1h1v1h1v-1h1v1h4v-1h5v1h1v-1h7v1h1v-1h2v1h1v1h1v-1h3v1h1v-1h3v-1h1v1h1v1h1v-1h4v1h1v-1h22v1h1v-1h2v1h1v-1h14v1h1v-1h8v1h1v-1h10v-1h1v1h6v1h1v-1h2v1h1v-1h7v1h1v-1h1v-1h1v1h2v-1h1v1h7v-2h1v2h6v1h1v-1h2v1h1v-1h1v-1h1v1h1v1h1v-1h7v1h2v-1h6v-1h2v1h8v1h1v-1h6v1h1v-1h35v1h1v-1h7v1h1v-1h9v1h1v-1h16v-1h1v1h4v1h1v-1h2v1h1v-1h6v-1h1v1h1v-2h1v2h11v-1h1v1h1v1h1v-1h27v1h1v-1h11v1h1v-1h2v1h1v-1h5v1h1v-1h14v1h1v-3h1v2h3v1h1v-2h1v-3h1v1h1v-7h1v6h2v3h1v1h6v-2h1v2h3v-1h1v1h1v1h1v-1h6v1h1v-1h1v1h1v-1h4v1h1v-2h1v2h1v-1h1v1h1v-1h3v1h1v-1h6v1h1v-2h1v1h23v1h1v-1h9v1h1v-1h2v1h2v-1h10v-1h2v1h3v1h2v-1h5v1h1v-1h10v1h2v-1h22v1h1v-1h6v1h1v-1h3v1h1v-1h2v-1h1v1h5v-2h1v1h1v1h7v-1h1v2h1v-1h16v-2h1v2h4v-1h1v2h1v-1h3v-2h1v2h18v-1h1v2h1v-1h11v1h1v-1h7v1h1v-1h2v1h1v-1h3v1h1v-2h1v1h1v1h1v-1h2v1h1v-1h3v1h1v-1h8v1h1v-1h23v1h1v-1h3v1h3v-1h8v1h2v-1h1v1h1v-1h3v1h1v-1h13v-4h1v4h24v-1h1v1h4v1h1v-1h5v1h1v-1h4v-1h1v1h1v-1h1v1h6V884h-2v-1h-1v1h-8v1h-1v-1h-1v1h-1v-1h-14v-1h-1v1h-4v1h-2v-1h-2v-1h-1v1h-3v-1h-1v1h-2v-1h-1v1h-2v-1h-1v2h-1v4h-1v-5h-1v-1h-1v1h-1v-1h-1v1h-1v-1h-1v1h-2v-1h-2v1h-6v-1h-1v1h-11v1h-1v-1h-3v-1h-1v1h-9v-1h-3v1h-1v-1h-1v1h-7v-1h-1v1h-6v1h-1v-2h-1v1h-1v-1h-1v1h-3v-1h-1v1h-4v-1h-1v1h-1v1h-1v-1h-2v-1h-2v3h-1v-2h-3v-1h-1v1h-13v2h-1v-1h-1v-2h-1v1h-4v-1h-1v1h-2v-1h-1v1h-4v-1h-1v1h-1v2h-1v-2h-7v-1h-2v1h-3v1h-1v-1h-2v-1h-1v1h-2v1h-1v-1h-3v-1h-1v1h-12v-1h-1v1h-7v-1h-1v1h-7v-1h-1v1h-3v1h-1v-1h-1v-1h-2v1h-3v-1h-1v1h-9v-1h-1v1h-6v-1h-1v1h-2v1h-1v-1h-1v-1h-2v1h-1v-1h-1v1h-14v-1h-1v1h-2v-1h-2v1h-5v-1h-1v3h-1v-1h-1v-2h-1v1h-5v1h-1v-1h-5v-1h-1v1h-1v-1h-2v1h-6v-1h-1v1h-1v-1h-1v1h-1v1h-1v-1h-1v-1h-2v1h-7v1h-1v-1h-6v-1h-1v1h-4v-1h-1v1h-2v-1h-1v1h-3v-1h-1v1h-1v-1h-1v1h-3v-1h-1v1h-1v-1h-2v1h-1v-1h-2v1h-1v2h-1v-2h-2v1h-1v-1h-2v-1h-1v1h-3v-1h-1v1h-3v-1h-1v1h-5v1h-1v2h-1v3h-1v3h-1v-2h-1v-5h-1v-1h-1v-1h-4v-1h-1v1h-2v-1h-1v1h-5v-1h-1v1h-4v-1h-3v1h-1v-1h-1v1h-2v-1h-1v1h-2v-1h-1v1h-8v1h-1v-1h-4v-1h-1v1h-5v1h-1v-2h-1v1h-1v1h-1v-2h-1v1h-1v-1h-1v1h-5v-1h-1v1h-1v-1h-1v1h-5v-1h-1v1h-4v1h-1v-1h-8v1h-1v-1h-2v-1h-2v1h-3v1h-1v-2h-1v1h-11v2h-1v-2h-5v1h-1v-1h-2v-1h-1v1h-1v1h-1v-1h-7v-1h-1v1h-2v-1h-1v1h-9v1h-1v-1h-2v-1h-1v1h-3v-1h-2v1h-2v1h-1v-1h-2v-1h-2v1h-3v-1h-1v1h-13v1h-1v-1h-1v-1h-1v1h-1v-1h-1v1h-7v-1h-1v1h-17v-1h-1v1h-1v-1h-1v1h-4v-1h-1v1h-4v-1h-1v1h-6v-1h-1v3h-1v-2h-6v-1h-1v1h-2v2h-1v-1h-1v-1h-1v-1h-1v1h-5v1h-1v-1h-3v-1h-1v2h-1v-1h-2v-1h-1v1h-1v1h-3v-2h-2v1h-1v-1h-1v1h-1v-1h-1v1h-6v1h-1v-1h-2v-1h-1v1h-2v-1h-1v1h-7v-1h-1v1h-1v1h-1v-2h-1v1h-1v-1h-1v1h-7v1h-1v-1h-2v-1h-2v1h-2v-1h-1v1h-2v1h-1v-1h-2v-1h-1v1h-3v-1h-1v1h-7v-1h-1v1h-3v-1h-1v1h-2v-1h-1v1h-4v1h-2v-1h-1v-1h-1v1h-1v1h-5v-1h-1v1h-2v-1h-1v1h-1v-1h-3v1h-1v-1h-6v1h-1v-2h-2v2h-1v-2h-1v1h-1v1h-1v-1h-1v-1h-1v1h-2v1h-2v-1h-3v1h-3v-1h-3v1h-2v-2h-1v1h-1v2h-1v-2h-5v-1h-1v1h-1v1h-2v-1h-4v1h-1v-2h-1v2h-3v-1h-1v1h-1v-1h-2v1h-1v-1h-2v1h-2v-1h-1v1h-1v-2h-1v1h-2v1h-1v-1h-3v1h-2v-1h-1v1h-4v-1h-2v1h-3v-1h-2v1h-4v-1h-2v1h-1v-2h-1v1h-1v-1h-1v1h-5v1h-1v-1h-1v-1h-1v1h-1v-1h-1v1h-5v1h-1v-1h-1v1h-1v-1h-2v1h-1v-1h-1v1h-1v-1h-1v1h-2v-2h-1v1h-6v1h-1v-1h-2v1h-1v-1h-4v1h-2v-2h-3v1h-4v1h-1v-1h-1v1h-2v-1h-1v1h-1v-1h-1v1h-1v-2h-1v2h-1v-1h-1v-1h-1v1h-1v1h-2v-1h-1v1h-4v-1h-2v1h-1v-1h-2v1h-1v-1h-1v1h-1v-1h-1v1h-3v-1h-2v-1h-1v1h-2v1h-4v-1h-1v1h-1v5h-1v-5h-2v-2h-1v1h-4v-1h-1v1h-2v1h-1v-1h-3v1h-2v-2h-1v2h-1v-1h-3v2h-1v-2h-1v2h-1v-2h-2v1h-1v-1h-1v1h-4v-2h-1v1h-2v1h-1v-1h-3v1h-2v-1h-1v-1h-1v2h-1v-1h-2v1h-4v-2h-1v1h-1v1h-3v-1h-1v1h-1v-1h-4v1h-1v-1h-1v1h-1v-1h-4v1h-2v-1h-1v1h-1v-1h-2v1h-5v-1h-1v1h-1v-1h-1v1h-1v-1h-6v2h-1v-2h-2v1h-2v-2h-1v1h-1v1h-3v-2h-1v2h-1v-1h-2v-1h-1v1h-4v1h-4v-2h-2v2h-2v-1h-1v1h-3v-1h-1v1h-5v-2h-1v2h-1v-1h-1v1h-1v-1h-1v1h-2v-2h-2v1h-1v1h-2v-1h-1v1h-4v-1h-2v-1h-1v2h-1v-1h-3v1h-1v-1h-1v1h-1v1h-1v-2h-3v1h-1v-1h-4v1h-1v-1h-1v-1h-1v1h-1v-1h-1v2h-1v-1h-2v1h-1v-2h-2v2h-1v-1h-3v1h-2v-2h-1v1h-1v1h-1v-1h-1v1h-4v-1h-1v1h-2v-1h-1v1h-2v-1h-1v1h-1v-1h-3v1h-2v-1h-1v1h-1v-1h-2v-1h-1v1h-1v1h-3v6h-1v-7h-1v1h-2v-1h-1v1h-1ZM277 911h2v-1h3v1h1v-1h1v1h2v1h1v-2h2v1h1v1h1v-2h2v2h1v-2h1v1h1v-1h1v1h1v1h1v-2h3v1h1v-1h3v1h1v-1h2v1h3v-1h2v1h1v-1h1v1h2v-1h1v1h1v-1h1v1h1v-1h1v1h2v-1h1v1h4v1h1v-2h3v1h1v-1h1v1h2v-1h1v1h1v-1h2v1h2v-1h5v2h1v-1h2v-2h1v1h2v1h1v-1h1v1h2v-1h3v1h2v-1h3v1h3v-1h6v2h1v-1h3v-1h1v1h1v1h1v-2h2v1h1v-1h3v1h4v-1h2v2h1v-2h1v1h1v-1h2v1h3v-1h1v1h1v-1h4v1h2v-1h4v1h2v1h1v-2h2v1h1v-1h1v1h1v-1h1v1h1v-1h1v1h1v-1h4v1h1v-1h1v1h1v-1h1v1h1v-1h1v1h1v-1h3v1h5v-1h2v-1h2v-1h1v2h1v-1h1v1h1v1h1v-1h1v1h1v-1h1v1h1v1h1v-3h1v1h3v1h2v1h1v-1h2v-1h1v1h2v-1h1v-1h1v1h1v-1h1v-1h1v1h1v1h5v2h1v-1h1v-1h4v1h5v-2h1v2h1v-2h1v1h1v2h1v-2h1v1h1v-1h1v1h2v-1h2v1h1v-1h1v1h4v1h1v-2h1v1h3v1h1v-2h1v1h1v-1h1v1h2v1h1v-2h3v1h1v-1h1v1h6v-1h1v1h3v-1h2v2h1v-1h1v-1h1v1h4v-1h2v-3h1v3h2v1h4v-1h1v2h1v-2h1v1h1v-1h1v1h3v-1h1v1h4v1h1v-1h3v-1h1v1h1v-1h1v1h1v-1h2v1h1v-1h1v1h2v1h1v-2h2v2h1v-2h1v1h3v1h1v-1h1v-1h2v-9h1v9h1v1h1v-1h1v1h2v1h1v-1h6v-1h1v2h2v-3h1v3h1v-1h1v1h1v-2h2v1h1v-1h2v1h2v-1h2v1h1v-1h3v1h1v1h1v-2h4v-2h1v2h2v1h2v-1h4v1h1v-1h1v1h1v-1h1v-2h1v3h1v-1h1v1h1v-1h1v1h1v-1h2v1h3v-1h3v1h3v1h1v-2h1v1h1v-1h1v1h2v1h1v-2h1v1h1v1h1v-2h1v1h1v-1h1v1h1v-2h1v1h3v1h1v-1h1v1h4v-1h1v1h1v-1h1v1h1v-1h1v1h1v1h1v-1h2v-1h1v1h4v-1h2v1h2v-1h1v1h1v-1h1v1h1v-1h1v1h4v-1h4v1h1v-1h1v2h2v-1h2v-1h3v1h2v-1h1v1h1v1h1v-2h3v1h1v-1h3v1h1v-1h1v1h1v-1h3v1h3v-1h1v1h3v-1h1v2h1v-2h2v1h3v-1h2v1h3v-1h1v1h2v1h1v-1h1v1h1v-2h1v1h1v-1h2v1h2v-1h5v1h2v-1h2v1h1v1h1v-2h1v1h1v-1h1v1h2v-1h2v1h1v-2h1v2h1v-2h1v1h2v1h1v-3h1v3h1v-1h1v1h1v-1h1v1h2v1h1v-1h1v-1h2v1h1v-1h2v1h3v1h1v-2h2v1h5v-1h1v1h2v-1h1v1h1v-1h1v1h6v-1h1v2h1v-2h1v1h5v-1h2v1h2v-1h1v1h2v-1h2v1h1v-1h2v1h1v-1h2v1h2v-1h3v1h1v-1h1v1h1v1h1v-1h1v-1h1v1h3v-1h2v2h1v-1h1v-1h2v1h2v-1h2v-1h1v2h2v-1h2v1h2v1h1v-1h1v-1h1v1h3v-1h2v1h1v-1h6v1h6v-1h1v1h1v1h1v-2h1v1h1v-1h2v1h2v-1h1v1h2v-1h1v1h1v-1h3v1h1v-1h5v1h1v-1h2v1h1v-1h2v1h1v-1h1v1h1v-1h1v1h2v-1h1v1h3v-1h1v1h2v1h1v-2h2v1h4v-1h1v1h3v-2h1v1h1v1h1v1h2v-2h2v1h2v1h1v-2h1v1h1v-1h1v2h1v-1h2v1h1v-1h1v1h1v-1h1v-1h3v2h1v-1h2v-1h1v1h1v-1h3v1h1v-1h1v2h2v-2h1v2h1v-2h2v1h1v-1h1v2h1v-1h1v1h1v-2h2v1h6v1h1v-7h1v6h1v-2h1v1h1v1h1v-1h2v1h2v-1h3v1h1v-1h1v2h1v-1h1v-1h1v1h1v-1h3v1h1v-1h1v1h1v-1h1v1h2v-1h1v1h1v-1h2v2h1v-1h7v-1h6v1h1v-1h1v1h3v-1h1v1h1v-1h1v2h1v-2h2v2h1v-1h2v-1h1v2h1v-1h1v-1h1v1h2v-1h3v1h3v-1h2v1h2v-2h1v1h2v1h1v-3h1v3h1v-1h2v1h4v-1h1v1h2v-1h2v1h2v-1h1v1h1v1h2v-2h1v1h2v-1h6v1h2v-1h1v2h1v-1h1v-1h1v2h1v-1h2v-1h1v1h2v1h1v-1h3v-1h2v1h3v-1h4v1h1v-1h1v1h5v-4h1v4h2v-1h2v1h2v-1h2v1h1v-2h1v1h1v1h1v-1h1v1h1v-1h2v1h2v-1h2v1h3v-1h2v1h3v-2h1v1h2v1h1v-1h2v1h1v-1h2v1h4v-1h1v1h3v-1h1v2h1v-1h3v-1h5v-1h1v1h1v-1h1v2h1v1h1v-2h1v1h2v-1h1v1h1v-1h3v-1h1v1h5v1h2v-1h2v-2h1v1h1v2h1v-1h1v1h11v1h1v-1h1v-1h1v1h1v-1h1v1h2v-1h1v1h2v-1h2v2h1v-1h2v-1h1v1h1v-1h1v1h2v1h1v-1h1v-1h1v1h2v-1h1v1h1v-1h1v1h1v1h1v-1h3v-1h1v1h1v-1h1v1h2v1h1v-2h2v1h1v1h1v-1h1v-1h1v1h4v-1h1v1h1v-1h1v1h2v-1h2v1h1v-1h1v1h1v1h1v-1h3v-1h1v1h2v-1h2v1h1v1h1v-2h1v1h1v-1h1v1h1v-1h7v1h2v-1h1v1h1v1h1v-1h1v1h1v-1h1v-1h1v1h1v-1h1v1h1v1h1v-1h1V915h-2v1h-1v-2h-1v1h-1v-1h-1v2h-1v-1h-4v1h-2v-1h-1v1h-2v-2h-1v2h-1v-1h-1v1h-1v-1h-4v1h-2v-1h-2v2h-1v-2h-2v1h-2v-1h-2v1h-1v-2h-2v1h-1v-1h-1v1h-2v1h-1v-1h-1v1h-1v-1h-5v1h-2v-1h-2v1h-2v-1h-1v-1h-1v1h-2v1h-1v-1h-2v1h-3v-1h-1v1h-2v-1h-2v1h-3v-1h-2v-1h-1v1h-1v-1h-1v2h-2v-1h-1v1h-3v-1h-3v1h-1v-1h-4v-1h-1v2h-1v-1h-2v1h-1v-1h-3v1h-1v-1h-2v1h-5v2h-1v-1h-1v-1h-5v-1h-1v-1h-1v1h-2v1h-1v-1h-1v1h-2v-1h-5v1h-2v-2h-1v2h-2v-2h-1v1h-1v1h-2v-1h-1v1h-2v-2h-1v2h-3v-1h-4v1h-1v-1h-2v-1h-1v1h-1v1h-1v-1h-2v1h-1v-1h-2v1h-2v-1h-2v1h-1v-1h-2v-1h-2v2h-2v-1h-1v-1h-1v2h-1v-1h-4v1h-1v-1h-4v1h-1v-1h-2v1h-1v-1h-1v5h-1v-6h-1v1h-3v1h-2v-1h-1v1h-3v-1h-1v1h-1v-1h-4v-1h-1v2h-6v-1h-2v1h-2v-1h-1v-1h-1v2h-2v-2h-1v1h-1v-1h-1v2h-4v1h-1v-2h-2v1h-1v-1h-3v1h-1v-1h-1v1h-2v-2h-1v2h-1v-2h-1v1h-2v1h-1v-1h-1v1h-1v-1h-2v3h-1v-3h-1v1h-3v-1h-3v-1h-1v2h-1v-1h-1v1h-1v-1h-1v1h-1v-1h-1v1h-1v-1h-2v1h-1v-1h-2v-1h-1v2h-1v-1h-2v1h-2v-1h-5v1h-2v-1h-2v-1h-1v2h-1v-2h-1v1h-2v1h-2v-1h-1v1h-2v-1h-6v1h-2v-2h-1v1h-2v1h-1v-1h-5v1h-1v-1h-1v1h-1v-1h-1v1h-2v1h-1v-2h-1v-1h-1v1h-3v1h-2v-1h-2v5h-1v-4h-1v-1h-1v1h-4v-1h-2v-1h-1v1h-4v1h-2v-1h-2v1h-1v-1h-2v1h-2v-1h-1v1h-2v-1h-1v-1h-1v2h-3v-2h-1v1h-1v1h-1v-1h-1v1h-1v-1h-1v1h-1v-2h-1v1h-2v1h-1v-1h-3v1h-2v-1h-1v1h-1v-1h-3v1h-1v-1h-5v1h-2v-1h-2v1h-3v-2h-1v1h-1v1h-1v-1h-8v1h-2v-2h-1v1h-1v1h-7v-1h-3v-1h-1v2h-3v-1h-2v1h-1v-1h-1v1h-1v-1h-1v1h-1v-1h-2v1h-1v-1h-1v1h-4v-1h-1v1h-1v-1h-1v1h-1v-1h-2v-1h-1v1h-1v-1h-1v1h-1v1h-2v-2h-1v2h-1v-1h-6v1h-1v-1h-1v1h-3v-1h-3v-1h-1v2h-3v-1h-1v1h-2v-1h-3v1h-4v-1h-1v1h-3v-1h-2v1h-1v-1h-3v1h-4v-1h-1v-1h-1v2h-1v-1h-1v1h-2v-2h-1v2h-1v-1h-6v1h-1v-2h-1v2h-2v-1h-8v1h-3v-2h-1v2h-1v-2h-1v2h-4v-1h-1v1h-1v-1h-3v2h-1v-1h-1v-1h-1v-1h-1v1h-1v1h-1v-1h-6v3h-1v-3h-1v1h-1v-1h-1v1h-4v-2h-3v1h-1v-1h-1v2h-3v-1h-2v1h-1v-1h-4v1h-1v-1h-2v1h-1v-1h-3v1h-2v-1h-1v1h-2v-1h-1v2h-1v-3h-1v2h-1v-1h-1v1h-1v-1h-4v1h-1v-2h-1v1h-1v1h-2v-2h-1v1h-1v1h-2v-1h-1v-1h-1v1h-1v1h-4v-1h-3v1h-2v-1h-2v1h-3v-1h-2v1h-1v-2h-1v1h-3v-1h-2v1h-2v1h-1v-1h-3v1h-3v-1h-3v-1h-1v1h-1v1h-2v-1h-2v1h-1v-1h-1v1h-1v-1h-6v-1h-1v2h-2v-1h-1v-1h-1v1h-1v1h-1v-1h-1v1h-1v-1h-1v1h-2v-1h-2v-1h-1v2h-1v-2h-1v2h-2v-1h-1v1h-1v-1h-2v1h-2v-1h-1v1h-2v-1h-1v1h-1v-1h-2v1h-1v-1h-1v1h-3v-1h-1v1h-1v-1h-2v1h-1v-1h-2v1h-1v-1h-1v1h-1v-1h-1v3h-1v-4h-1v2h-1v-1h-1v1h-2v-2h-1v1h-1v-1h-1v2h-1v-1h-1v1h-2v2h-1v-1h-1v-1h-1v-1h-2v1h-1v-1h-2v1h-3v-1h-1v1h-1v-1h-3v1h-5v-1h-2v1h-2v-1h-4v1h-2v-1h-1v1h-4v-1h-1v-1h-1v2h-1v9h-1v-9h-1v-2h-1v1h-1v-1h-2v2h-1v-1h-2v1h-2v-1h-1v1h-2v-1h-3v1h-2v-1h-2v1h-2v-1h-2v1h-2v-1h-2v-1h-1v1h-5v1h-1v-1h-1v2h-1v-2h-3v1h-3v-1h-1v1h-1v3h-1v-3h-3v-2h-1v2h-1v-1h-1v1h-2v-1h-4v1h-2v-1h-1v-1h-1v1h-2v1h-3v-1h-2v1h-1v-1h-2v1h-1v-1h-5v1h-2v-2h-1v2h-1v-1h-1v1h-1v-1h-1v-1h-1v1h-1v1h-1v-1h-1v1h-1v-1h-2v1h-2v-1h-3v-1h-1v2h-2v-1h-6v1h-1v-2h-1v1h-1v1h-2v-1h-3v1h-3v1h-1v-1h-1v2h-1v-1h-2v-1h-3v-2h-1v2h-2v1h-1v-2h-2v1h-1v-1h-2v1h-1v-1h-4v-1h-2v2h-3v1h-1v1h-1v-1h-1v-1h-1v1h-1v-1h-1v-1h-4v1h-1v-1h-3v-1h-1v2h-2v-1h-1v2h-1v-2h-1v1h-2v-1h-5v1h-1v-1h-2v1h-2v-1h-2v1h-5v-1h-2v1h-2v-1h-1v-1h-1v1h-1v1h-1v-1h-6v-1h-1v1h-2v2h-1v-2h-2v1h-1v-2h-1v2h-9v-1h-1v1h-1v-2h-2v1h-2v1h-2v-1h-2v1h-2v-1h-2v-1h-1v1h-2v1h-1v-1h-1v1h-1v-1h-1v1h-1v-2h-1v2h-2v-1h-1v-1h-1v1h-1v1h-1v-1h-1v1h-4v-1h-2v1h-1v-1h-1v2h-1v-1h-2v-1h-2v1h-2v-2h-2v3h-1v-1h-5v-1h-1v-1h-1v1h-1v1h-3v-1h-4v-1h-1v2h-1v-1h-2v1h-3v-1h-1v-1h-1v1h-2v1h-1v-2h-1v1h-1v1h-1v-2h-2v1h-1v1h-1v-1h-2v1h-2v-1h-1v1h-1v-1h-4v1h-1v-1h-2v1h-2v-1h-1v1h-2v-1h-3v-1h-2Z" fill="#00ffff"/><path d="M989.5 640V909M1002.5 719V891M1016.5 733V826" stroke="#00ffff" stroke-width="1" fill="none"/><g font-size="13" fill="#000"><text x="352" y="178" text-anchor="middle">02</text><text x="352" y="960" text-anchor="middle">02</text><text x="427" y="178" text-anchor="middle">04</text><text x="427" y="960" text-anchor="middle">04</text><text x="502" y="178" text-anchor="middle">06</text><text x="502" y="960" text-anchor="middle">06</text><text x="577" y="178" text-anchor="middle">08</text><text x="577" y="960" text-anchor="middle">08</text><text x="652" y="178" text-anchor="middle">10</text><text x="652" y="960" text-anchor="middle">10</text><text x="727" y="178" text-anchor="middle">12</text><text x="727" y="960" text-anchor="middle">12</text><text x="802" y="178" text-anchor="middle">14</text><text x="802" y="960" text-anchor="middle">14</text><text x="876" y="178" text-anchor="middle">16</text><text x="876" y="960" text-anchor="middle">16</text><text x="951" y="178" text-anchor="middle">18</text><text x="951" y="960" text-anchor="middle">18</text><text x="1026" y="178" text-anchor="middle">20</text><text x="1026" y="960" text-anchor="middle">20</text><text x="1101" y="178" text-anchor="middle">22</text><text x="1101" y="960" text-anchor="middle">22</text><text x="1176" y="178" text-anchor="middle">24</text><text x="1176" y="960" text-anchor="middle">24</text><text x="1251" y="178" text-anchor="middle">26</text><text x="1251" y="960" text-anchor="middle">26</text><text x="1326" y="178" text-anchor="middle">28</text><text x="1326" y="960" text-anchor="middle">28</text><text x="1423.5" y="220" text-anchor="middle">0:30</text><text x="1423.5" y="251" text-anchor="middle">1:00</text><text x="1423.5" y="281" text-anchor="middle">1:30</text><text x="1423.5" y="311" text-anchor="middle">2:00</text><text x="1423.5" y="342" text-anchor="middle">2:30</text><text x="1423.5" y="372" text-anchor="middle">3:00</text><text x="1423.5" y="402" text-anchor="middle">3:30</text><text x="1423.5" y="433" text-anchor="middle">4:00</text><text x="1423.5" y="463" text-anchor="middle">4:30</text><text x="1423.5" y="493" text-anchor="middle">5:00</text><text x="1423.5" y="524" text-anchor="middle">5:30</text><text x="1423.5" y="554" text-anchor="middle">6:00</text><text x="1423.5" y="584" text-anchor="middle">6:30</text><text x="1423.5" y="614" text-anchor="middle">7:00</text><text x="1423.5" y="645" text-anchor="middle">7:30</text><text x="1423.5" y="675" text-anchor="middle">8:00</text><text x="1423.5" y="705" text-anchor="middle">8:30</text><text x="1423.5" y="736" text-anchor="middle">9:00</text><text x="1423.5" y="766" text-anchor="middle">9:30</text><text x="1423.5" y="796" text-anchor="middle">10:00</text><text x="1423.5" y="827" text-anchor="middle">10:30</text><text x="1423.5" y="857" text-anchor="middle">11:00</text><text x="1423.5" y="887" text-anchor="middle">11:30</text><text x="1423.5" y="918" text-anchor="middle">12:00</text></g>

<g>
<path d="M1300.5 114.3H1332.7V147.5Q1332.7 150.8 1329.5 150.8H1319L1316.6 155L1314.2 150.8H1303.7Q1300.5 150.8 1300.5 147.5Z" fill="#d7141a" stroke="#7a1a1a" stroke-width="0.6"/>
<path d="M1313.2 114.8H1319.3V151L1316.25 154.6L1313.2 151Z" fill="#fbc50f"/>
<rect x="1301" y="129.6" width="31.2" height="6.1" fill="#fbc50f"/>
<g fill="#1e88d0">
<circle cx="1316.2" cy="121.5" r="1.9"/><circle cx="1316.2" cy="132.6" r="1.9"/><circle cx="1316.2" cy="143.2" r="1.9"/>
<circle cx="1307" cy="132.6" r="1.9"/><circle cx="1325.5" cy="132.6" r="1.9"/>
</g>
<g fill="#e8e8e8">
<circle cx="1304.2" cy="118.8" r="1.9"/><circle cx="1309.8" cy="118.8" r="1.9"/><circle cx="1304.2" cy="125.5" r="1.9"/><circle cx="1309.8" cy="125.5" r="1.9"/>
<circle cx="1322.8" cy="118.8" r="1.9"/><circle cx="1328.4" cy="118.8" r="1.9"/><circle cx="1322.8" cy="125.5" r="1.9"/><circle cx="1328.4" cy="125.5" r="1.9"/>
<circle cx="1304.2" cy="139.4" r="1.9"/><circle cx="1309.8" cy="139.4" r="1.9"/><circle cx="1304.2" cy="146" r="1.9"/><circle cx="1309.8" cy="146" r="1.9"/>
<circle cx="1322.8" cy="139.4" r="1.9"/><circle cx="1328.4" cy="139.4" r="1.9"/><circle cx="1322.8" cy="146" r="1.9"/><circle cx="1328.4" cy="146" r="1.9"/>
</g>
<text x="1338.8" y="126.8" font-size="11.2" fill="#333" textLength="62.2" lengthAdjust="spacingAndGlyphs">UNIVERSITÉ</text>
<text x="1338.8" y="146.2" font-size="22.8" fill="#1a1a1a" stroke="#1a1a1a" stroke-width="0.5" textLength="62" lengthAdjust="spacingAndGlyphs">LAVAL</text>
</g>

<g fill="#f2f2f2">
<rect x="1596" y="6" width="5" height="3.6" rx="0.6"/>
<rect x="1598" y="9.5" width="1.2" height="3"/>
<rect x="1593" y="12" width="11" height="1.6"/>
<rect x="1593" y="13" width="1.2" height="2.5"/>
<rect x="1602.8" y="13" width="1.2" height="2.5"/>
<rect x="1591" y="15.3" width="5" height="3.6" rx="0.6"/>
<rect x="1601" y="15.3" width="5" height="3.6" rx="0.6"/>
<path d="M1622.6 9.6H1620.6Q1620 9.6 1620 10.4V15.5Q1620 16.3 1620.6 16.3H1622.6L1626.9 19.9V6Z"/>
</g>
<g fill="none" stroke="#f2f2f2">
<path d="M1628.9 10.2Q1631.8 12.9 1628.9 15.7" stroke-width="1.3"/>
<path d="M1631 8.2Q1636 12.9 1631 17.9" stroke-width="1" stroke="#bdbdbd"/>
<path d="M1651 7.9A6 6 0 1 0 1658 7.9" stroke-width="1.3"/>
<path d="M1654.5 6V12.8" stroke-width="1.2"/>
<path d="M904.6 17.3Q905.3 8.5 906.5 8Q909 6 911.3 8Q913 9 913.4 17.3Z M902 19.8L914.6 7.2" stroke-width="1.2" stroke-linejoin="round"/>
<path d="M123.6 5.6L123.3 9.6L121.2 11.4L118 11.9M125.2 13.4L128.7 12.5L132.3 13.4M125.2 13.4L123.5 16.4L122.8 19.9" stroke-width="1.5" stroke-linecap="round" stroke-linejoin="round"/>
</g>
<path d="M906.3 19.4H910.3Q910.1 21.1 908.3 21.1Q906.5 21.1 906.3 19.4Z" fill="#f2f2f2"/><g fill="#f2f2f2"><rect x="117.1" y="10.6" width="2" height="2.3" rx="0.5"/><rect x="131.7" y="11.9" width="1.4" height="2.9" rx="0.5"/><rect x="121" y="18.9" width="3" height="2" rx="0.5"/><rect x="128.1" y="11.4" width="1.8" height="1.6" rx="0.5"/><rect x="122.9" y="5.1" width="1.6" height="1.8" rx="0.5"/></g>
<g stroke="#2e2e2e" fill="none">
<path d="M1589.9 47.5H1597.9" stroke-width="1.5"/>
<rect x="1624.4" y="43.6" width="4.9" height="4.9" stroke-width="1.4"/>
<path d="M1626.2 41.5H1631.6V46.8" stroke-width="0.9" stroke="#6e6e6e"/>
<path d="M1658.3 41.3L1665.7 48.7M1665.7 41.3L1658.3 48.7" stroke-width="1.3"/>
</g>
</svg>
</body></html>
